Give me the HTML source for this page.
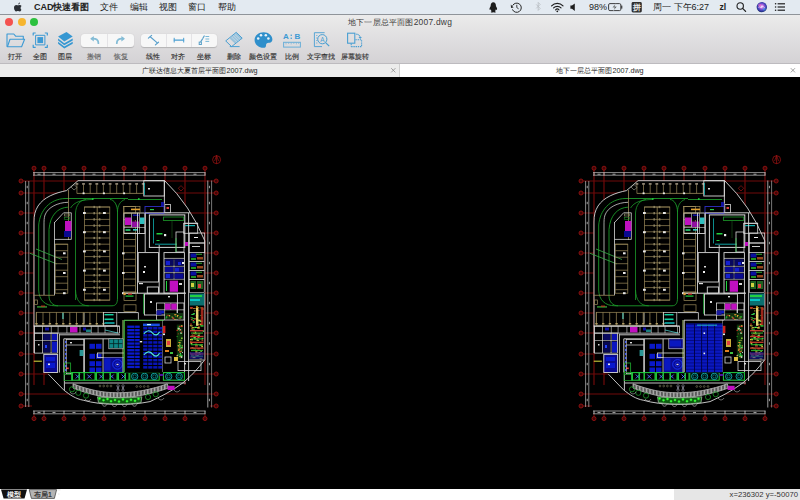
<!DOCTYPE html>
<html><head><meta charset="utf-8">
<style>
*{margin:0;padding:0;box-sizing:border-box}
html,body{width:800px;height:500px;overflow:hidden;background:#000;font-family:"Liberation Sans",sans-serif}
.a{position:absolute}
#menubar{left:0;top:0;width:800px;height:14px;background:#e3eaf1}
.mi{position:absolute;top:2px;font-size:9px;line-height:11px;color:#222;white-space:nowrap}
#titlebar{left:0;top:15px;width:800px;height:48px;background:linear-gradient(#ebebeb,#d4d2d5)}
.tl{position:absolute;top:17.5px;width:8px;height:8px;border-radius:50%}
.lbl{position:absolute;top:51.8px;font-size:7px;line-height:9px;color:#333;-webkit-text-stroke:0.15px #333;white-space:nowrap;transform:translateX(-50%)}
.seg{position:absolute;top:33.5px;height:13.5px;background:#f7f7f7;border-radius:3px;box-shadow:0 0.5px 1px rgba(0,0,0,.18)}
.tab{position:absolute;top:64px;height:12.5px;font-size:7.2px;line-height:13px;color:#2a2a2a;text-align:center}
</style></head><body>
<div id="menubar" class="a"></div>
<div class="a" style="left:0;top:14px;width:800px;height:1px;background:#8f949a"></div>
<svg class="a" style="left:12.8px;top:1.5px" width="10" height="11" viewBox="0 0 10 11"><path d="M6.9,0.6 C7,1.5 6.3,2.5 5.3,2.5 C5.2,1.6 5.9,0.7 6.9,0.6 Z" fill="#2a2e34"/><path d="M8.4,7.7 C8,8.7 7.4,9.5 6.6,9.5 C5.9,9.5 5.7,9.1 4.9,9.1 C4.1,9.1 3.9,9.5 3.2,9.5 C2.2,9.5 1,7.6 1,5.7 C1,3.9 2.1,2.9 3.2,2.9 C3.9,2.9 4.4,3.3 4.9,3.3 C5.4,3.3 5.9,2.9 6.7,2.9 C7.1,2.9 8,3 8.6,3.9 C7.3,4.7 7.3,6.9 8.4,7.7 Z" fill="#2a2e34"/></svg>
<div class="mi" style="left:34px;font-weight:bold">CAD快速看图</div>
<div class="mi" style="left:100px">文件</div>
<div class="mi" style="left:130px">编辑</div>
<div class="mi" style="left:159px">视图</div>
<div class="mi" style="left:188px">窗口</div>
<div class="mi" style="left:218px">帮助</div>
<svg class="a" style="left:480px;top:0" width="320" height="14" viewBox="480 0 320 14">
<!-- QQ penguin -->
<path d="M493.3,2.2 C491.6,2.2 490.7,3.6 490.7,5.4 C490.7,6.2 490.4,6.8 489.9,7.6 C489.3,8.6 489.4,9.7 489.9,9.9 C490.2,10 490.5,9.6 490.7,9.3 C490.9,10.2 491.3,10.8 491.7,11.2 C490.9,11.5 490.6,11.9 490.9,12.3 C491.3,12.7 492.6,12.5 493.3,12.2 C494,12.5 495.3,12.7 495.7,12.3 C496,11.9 495.7,11.5 494.9,11.2 C495.3,10.8 495.7,10.2 495.9,9.3 C496.1,9.6 496.4,10 496.7,9.9 C497.2,9.7 497.3,8.6 496.7,7.6 C496.2,6.8 495.9,6.2 495.9,5.4 C495.9,3.6 495,2.2 493.3,2.2 Z" fill="#1c1c1c"/>
<!-- time machine -->
<g fill="none" stroke="#2a2a2a" stroke-width="1.0">
<path d="M512.6,5.6 A4.6,4.6 0 1 1 512.4,9.4"/>
<path d="M516.8,4.8 L516.8,7.6 L518.6,8.8" stroke-width="0.9"/>
</g>
<path d="M510.8,4.6 L513.6,7.6 L511,8.0 Z" fill="#2a2a2a"/>
<!-- bluetooth (disabled) -->
<path d="M536.2,4.4 L540.2,8.4 L538.2,10.4 L538.2,2.4 L540.2,4.4 L536.2,8.4" fill="none" stroke="#b8bcc2" stroke-width="0.8"/>
<!-- wifi -->
<g fill="none" stroke="#1e1e1e" stroke-width="1.2" stroke-linecap="round">
<path d="M551.6,5.8 C554.8,2.6 559.8,2.6 563,5.8"/>
<path d="M553.6,7.8 C555.6,5.8 559,5.8 561,7.8"/>
<path d="M555.6,9.8 C556.6,8.8 558,8.8 559,9.8"/>
</g>
<circle cx="557.3" cy="11.3" r="0.9" fill="#1e1e1e"/>
<!-- volume -->
<path d="M570.4,5.6 L572,5.6 L574.8,3.4 L574.8,11 L572,8.8 L570.4,8.8 Z" fill="#1e1e1e"/>
<!-- battery -->
<rect x="608.6" y="3.6" width="12.2" height="7" rx="1.3" fill="none" stroke="#2a2a2a" stroke-width="0.9"/>
<rect x="621.2" y="5.6" width="1.1" height="3" fill="#2a2a2a"/>
<path d="M615.6,3.8 L612.4,7.6 L614.6,7.6 L613.6,10.6 L616.8,6.6 L614.6,6.6 Z" fill="#2a2a2a" stroke="#e3eaf1" stroke-width="0.5"/>
<!-- input method icon -->
<rect x="631.6" y="2" width="10.2" height="10.4" rx="1.4" fill="#2e2e2e"/>
<text x="636.7" y="10.2" text-anchor="middle" font-size="8.4" fill="#e8e8e8" font-weight="bold">拼</text>
<!-- search -->
<circle cx="740.2" cy="6" r="3.2" fill="none" stroke="#1e1e1e" stroke-width="1.1"/>
<path d="M742.6,8.4 L745.6,11.4" stroke="#1e1e1e" stroke-width="1.3" stroke-linecap="round"/>
<!-- siri -->
<defs><radialGradient id="siri" cx="50%" cy="45%" r="55%"><stop offset="0" stop-color="#f4eaff"/><stop offset="0.3" stop-color="#c070e0"/><stop offset="0.6" stop-color="#5a48c8"/><stop offset="0.85" stop-color="#283a9a"/><stop offset="1" stop-color="#202050"/></radialGradient></defs>
<circle cx="761.8" cy="7.1" r="5.2" fill="url(#siri)"/>
<path d="M758.4,7.6 C759.6,5.4 760.8,9.2 762,6.8 C763,4.8 764,8.6 765.2,7.2" fill="none" stroke="#ffffff" stroke-width="0.7" opacity="0.85"/><circle cx="759.6" cy="5.2" r="1.6" fill="#ff70c0" opacity="0.45"/><circle cx="764.2" cy="9" r="1.6" fill="#40d0ff" opacity="0.4"/>
<!-- notification list -->
<g fill="#1e1e1e">
<circle cx="775.6" cy="3.8" r="0.8"/><circle cx="775.6" cy="7" r="0.8"/><circle cx="775.6" cy="10.2" r="0.8"/>
<rect x="777.6" y="3.2" width="7.4" height="1.2"/><rect x="777.6" y="6.4" width="7.4" height="1.2"/><rect x="777.6" y="9.6" width="7.4" height="1.2"/>
</g>
</svg>
<div class="mi" style="left:589px">98%</div>
<div class="mi" style="left:653px">周一 下午6:27</div>
<div class="mi" style="left:719.5px;font-weight:bold;font-size:8.6px">zl</div>

<div id="titlebar" class="a"></div>
<div class="tl" style="left:5px;background:#f4524f"></div>
<div class="tl" style="left:17.5px;background:#f6b52f"></div>
<div class="tl" style="left:30px;background:#2cc13f"></div>
<div class="a" style="left:0;width:800px;top:17px;text-align:center;font-size:8.45px;letter-spacing:0.22px;line-height:11px;color:#3a3a3a;padding-left:0px">地下一层总平面图2007.dwg</div>
<div class="seg" style="left:81px;width:53px"></div>
<div class="seg" style="left:141px;width:76px"></div>
<div class="a" style="left:107px;top:34px;width:0.6px;height:13px;background:#e4e3e6"></div>
<div class="a" style="left:166.2px;top:34px;width:0.6px;height:13px;background:#e4e3e6"></div>
<div class="a" style="left:191px;top:34px;width:0.6px;height:13px;background:#e4e3e6"></div>
<svg class="a" style="left:0;top:28px" width="380" height="24" viewBox="0 28 380 24">
<g fill="none" stroke="#3d9ad4" stroke-width="1.1" stroke-linejoin="round">
<!-- folder -->
<path d="M7,46.8 L7,34 L13.8,34 L15.6,36.2 L23.3,36.2 L23.3,39.2"/>
<path d="M7.4,46.8 L10,39.3 L24.6,39.3 L21.6,46.8 Z"/>
<!-- full view brackets -->
<path d="M33.2,35.5 L33.2,33 L35.7,33 M44.8,33 L47.3,33 L47.3,35.5 M47.3,44.8 L47.3,47.3 L44.8,47.3 M35.7,47.3 L33.2,47.3 L33.2,44.8" stroke-width="1.2"/>
<rect x="35.6" y="35.3" width="9.3" height="9.6" stroke-width="1.0"/>
</g>
<rect x="37.4" y="37.1" width="5.7" height="6" fill="#3d9ad4"/>
<!-- layers -->
<path d="M58.1,36.6 L66.5,32.1 L72.7,36.4 L64.3,41.6 Z" fill="#3597d2"/>
<path d="M58.1,38.6 L64.3,43.2 L72.7,38.6 L72.7,40.6 L64.3,45.2 L58.1,40.6 Z" fill="#3597d2"/>
<path d="M58.1,41.8 L64.3,46.6 L72.7,41.8 L72.7,43.8 L64.3,48.4 L58.1,43.8 Z" fill="#3597d2"/>
<!-- undo / redo -->
<g fill="none" stroke="#84bcd6" stroke-width="1.8" stroke-linecap="round">
<path d="M92,38.6 C96,38.2 98.6,39.6 98.4,43.2"/>
<path d="M116.8,43.2 C116.6,39.6 119.2,38.2 123.2,38.6"/>
</g>
<path d="M90.2,38.8 L93.8,36 L93.8,41.6 Z" fill="#84bcd6"/>
<path d="M125,38.8 L121.4,36 L121.4,41.6 Z" fill="#84bcd6"/>
<!-- linear -->
<g fill="none" stroke="#4a9fd2" stroke-width="1.0" stroke-linecap="round">
<path d="M150.2,36.8 L157,42.6" stroke="#5aa0cc" stroke-width="1.2"/>
<path d="M148.4,38.1 L151.6,35.4" stroke="#5aa0cc" stroke-width="1.2"/>
<path d="M155.4,44.9 L158.5,42.2" stroke="#5aa0cc" stroke-width="1.2"/>
<!-- aligned -->
<path d="M174.2,40.1 L183.7,40.1" stroke-width="1.2"/>
<path d="M174.2,38.2 L174.2,42.1 M183.7,38.2 L183.7,42.1" stroke-width="1.0"/>
<!-- coordinate -->
<rect x="199.2" y="42.1" width="2.2" height="2.4" stroke="#5aa0c8" stroke-width="1.0"/>
<path d="M200.8,41.6 L202.4,39.2 M202.9,38.3 L204.2,36" stroke="#5aa0c8" stroke-width="1.2"/>
<path d="M205.8,36.5 L208.8,36.5 M205.8,39 L208.8,39 M205.8,41.4 L208.8,41.4" stroke="#6ab0d4" stroke-width="0.9"/>
<!-- eraser -->
<path d="M236.5,32.6 L242.2,38.2 L231.6,46.6 L226,41.2 Z" stroke="#4a9fd2"/>
<path d="M230.2,46.6 L239.2,46.6" stroke="#4a9fd2"/>
</g>
<path d="M236.5,32.6 L242.2,38.2 L235.2,43.8 L229.6,38.4 Z" fill="#4a9fd2" opacity="0.45"/>
<path d="M231.6,37 L237.2,42.4 M233.2,35.6 L238.8,41 M234.8,34.3 L240.4,39.7" stroke="#e6f2fa" stroke-width="0.45"/>
<!-- palette -->
<path d="M263.6,32.3 C268.7,32.3 272.4,35.6 272.4,39.4 C272.4,41.8 270.6,42.8 268.8,42.8 C266.8,42.8 266,44 266,45.4 C266,46.8 265.2,47.8 263.6,47.8 C258.6,47.8 254.6,44.4 254.6,40 C254.6,35.6 258.6,32.3 263.6,32.3 Z" fill="#2f8fcb"/>
<circle cx="258.2" cy="38.6" r="1.25" fill="#e8f2f8"/>
<circle cx="261" cy="35.2" r="1.25" fill="#e8f2f8"/>
<circle cx="265.8" cy="35.2" r="1.25" fill="#e8f2f8"/>
<circle cx="268.4" cy="38.6" r="1.25" fill="#e8f2f8"/>
<!-- A:B -->
<text x="283" y="39.4" font-family="Liberation Sans" font-weight="bold" font-size="8" fill="#3d9ad4">A</text><rect x="290.6" y="34.6" width="1.3" height="1.3" fill="#3d9ad4"/><rect x="290.6" y="37.6" width="1.3" height="1.3" fill="#3d9ad4"/><text x="294.6" y="39.4" font-family="Liberation Sans" font-weight="bold" font-size="8" fill="#3d9ad4">B</text>
<rect x="283.6" y="42.3" width="16.8" height="4.8" fill="none" stroke="#6aaed8" stroke-width="1"/>
<path d="M286,42.6 L286,44.4 M288.6,42.6 L288.6,44 M291.2,42.6 L291.2,44.4 M293.8,42.6 L293.8,44 M296.4,42.6 L296.4,44.4 M298.6,42.6 L298.6,44" stroke="#6aaed8" stroke-width="0.6"/>
<!-- text find -->
<g fill="none" stroke="#4a9fd2" stroke-width="0.9">
<path d="M324.6,32.7 L314.4,32.7 L314.4,46.6 L322,46.6"/>
<path d="M316.2,35.5 L317.4,35.5 M316.2,38 L317.4,38 M316.2,40.5 L317.4,40.5 M316.2,43 L317.4,43" stroke-width="0.7"/>
<circle cx="322.3" cy="39.2" r="4.6" stroke-width="1"/>
<path d="M325.6,42.6 L329.2,46.2" stroke-width="1.2"/>
<!-- rotate -->
<rect x="347.6" y="33.2" width="7.2" height="10" stroke-width="1.1"/>
<path d="M351.2,46.6 L361.6,46.6 L361.6,39.8 L355.4,39.8" stroke-dasharray="1.4,0.8" stroke-width="1.1"/>
<path d="M351.2,43.6 L351.2,46.6" stroke-width="1.1" stroke-dasharray="1.4,0.8"/>
<path d="M355.8,34.1 C358.4,34.1 360.1,35.4 360.2,37.4" stroke-width="0.9"/>
</g>
<text x="322.3" y="41.6" text-anchor="middle" font-family="Liberation Sans" font-size="6.4" fill="#4a9fd2">A</text>
<path d="M358.5,36.9 L361.9,36.9 L360.2,39.1 Z" fill="#4a9fd2"/>
</svg>
<div class="lbl" style="left:15px">打开</div>
<div class="lbl" style="left:40px">全图</div>
<div class="lbl" style="left:65px">图层</div>
<div class="lbl" style="left:94px;color:#999">撤销</div>
<div class="lbl" style="left:121px;color:#999">恢复</div>
<div class="lbl" style="left:153px">线性</div>
<div class="lbl" style="left:178px">对齐</div>
<div class="lbl" style="left:204px">坐标</div>
<div class="lbl" style="left:234px">删除</div>
<div class="lbl" style="left:263px">颜色设置</div>
<div class="lbl" style="left:292px">比例</div>
<div class="lbl" style="left:321px">文字查找</div>
<div class="lbl" style="left:355px">屏幕旋转</div>

<div class="a" style="left:0;top:63px;width:800px;height:1px;background:#bdbbbf"></div>
<div class="tab" style="left:0;width:400px;background:#ececec">广联达信息大夏首层平面图2007.dwg</div>
<div class="tab" style="left:399px;width:1px;background:#cfcfcf"></div>
<div class="tab" style="left:400px;width:400px;background:#fff">地下一层总平面图2007.dwg</div>
<svg class="a" style="left:0;top:77px" width="800" height="411" viewBox="0 77 800 411"><g><mask id="bm" maskUnits="userSpaceOnUse" x="0" y="77" width="240" height="411"><rect x="0" y="77" width="240" height="411" fill="#fff"/><path d="M78,180.7 L164.9,180.9 Q190,205 204.8,240.8 L204.8,359.6 C197,370 190,377 182.2,383.4 C172,391 160,397 150,401.6 C140,403.5 132,404.3 124.2,404.3 L114,404.3 C104,404.2 93,403 83.2,400.2 C76,399 70,395 63.5,389.8 L48.4,374.2 L34,353 L34,222 C34,215 35,211 38,206 C44,197 55,193 66.5,190.6 Z" fill="#000"/></mask>
<g mask="url(#bm)">
<line x1="34.0" y1="170.0" x2="34.0" y2="385.0" stroke="#700a0a" stroke-width="1.2"/>
<line x1="44.0" y1="170.0" x2="44.0" y2="385.0" stroke="#700a0a" stroke-width="1.2"/>
<line x1="64.0" y1="170.0" x2="64.0" y2="385.0" stroke="#700a0a" stroke-width="1.2"/>
<line x1="84.0" y1="170.0" x2="84.0" y2="385.0" stroke="#700a0a" stroke-width="1.2"/>
<line x1="104.0" y1="170.0" x2="104.0" y2="385.0" stroke="#700a0a" stroke-width="1.2"/>
<line x1="124.0" y1="170.0" x2="124.0" y2="385.0" stroke="#700a0a" stroke-width="1.2"/>
<line x1="145.0" y1="170.0" x2="145.0" y2="385.0" stroke="#700a0a" stroke-width="1.2"/>
<line x1="165.0" y1="170.0" x2="165.0" y2="385.0" stroke="#700a0a" stroke-width="1.2"/>
<line x1="185.0" y1="170.0" x2="185.0" y2="385.0" stroke="#700a0a" stroke-width="1.2"/>
<line x1="205.0" y1="170.0" x2="205.0" y2="385.0" stroke="#700a0a" stroke-width="1.2"/>
<line x1="34.0" y1="414.0" x2="34.0" y2="417.0" stroke="#700a0a" stroke-width="1.0"/>
<line x1="44.0" y1="414.0" x2="44.0" y2="417.0" stroke="#700a0a" stroke-width="1.0"/>
<line x1="64.0" y1="414.0" x2="64.0" y2="417.0" stroke="#700a0a" stroke-width="1.0"/>
<line x1="84.0" y1="414.0" x2="84.0" y2="417.0" stroke="#700a0a" stroke-width="1.0"/>
<line x1="104.0" y1="414.0" x2="104.0" y2="417.0" stroke="#700a0a" stroke-width="1.0"/>
<line x1="124.0" y1="414.0" x2="124.0" y2="417.0" stroke="#700a0a" stroke-width="1.0"/>
<line x1="145.0" y1="414.0" x2="145.0" y2="417.0" stroke="#700a0a" stroke-width="1.0"/>
<line x1="165.0" y1="414.0" x2="165.0" y2="417.0" stroke="#700a0a" stroke-width="1.0"/>
<line x1="185.0" y1="414.0" x2="185.0" y2="417.0" stroke="#700a0a" stroke-width="1.0"/>
<line x1="205.0" y1="414.0" x2="205.0" y2="417.0" stroke="#700a0a" stroke-width="1.0"/>
<line x1="23.0" y1="181.0" x2="214.0" y2="181.0" stroke="#700a0a" stroke-width="1.2"/>
<line x1="23.0" y1="193.0" x2="214.0" y2="193.0" stroke="#700a0a" stroke-width="1.2"/>
<line x1="23.0" y1="213.0" x2="214.0" y2="213.0" stroke="#700a0a" stroke-width="1.2"/>
<line x1="23.0" y1="233.0" x2="214.0" y2="233.0" stroke="#700a0a" stroke-width="1.2"/>
<line x1="23.0" y1="253.0" x2="214.0" y2="253.0" stroke="#700a0a" stroke-width="1.2"/>
<line x1="23.0" y1="273.0" x2="214.0" y2="273.0" stroke="#700a0a" stroke-width="1.2"/>
<line x1="23.0" y1="293.0" x2="214.0" y2="293.0" stroke="#700a0a" stroke-width="1.2"/>
<line x1="23.0" y1="313.0" x2="214.0" y2="313.0" stroke="#700a0a" stroke-width="1.2"/>
<line x1="23.0" y1="333.0" x2="214.0" y2="333.0" stroke="#700a0a" stroke-width="1.2"/>
<line x1="23.0" y1="354.0" x2="214.0" y2="354.0" stroke="#700a0a" stroke-width="1.2"/>
<line x1="23.0" y1="374.0" x2="214.0" y2="374.0" stroke="#700a0a" stroke-width="1.2"/>
<line x1="23.0" y1="394.0" x2="214.0" y2="394.0" stroke="#700a0a" stroke-width="1.2"/>
<line x1="23.0" y1="406.0" x2="32.0" y2="406.0" stroke="#700a0a" stroke-width="1.0"/>
<line x1="210.0" y1="406.0" x2="214.0" y2="406.0" stroke="#700a0a" stroke-width="1.0"/>
</g>
<circle cx="34.0" cy="168.2" r="2.0" stroke="#951212" stroke-width="0.9" fill="#420606"/>
<circle cx="34.0" cy="418.6" r="2.0" stroke="#951212" stroke-width="0.9" fill="#420606"/>
<circle cx="44.0" cy="168.2" r="2.0" stroke="#951212" stroke-width="0.9" fill="#420606"/>
<circle cx="44.0" cy="418.6" r="2.0" stroke="#951212" stroke-width="0.9" fill="#420606"/>
<circle cx="64.0" cy="168.2" r="2.0" stroke="#951212" stroke-width="0.9" fill="#420606"/>
<circle cx="64.0" cy="418.6" r="2.0" stroke="#951212" stroke-width="0.9" fill="#420606"/>
<circle cx="84.0" cy="168.2" r="2.0" stroke="#951212" stroke-width="0.9" fill="#420606"/>
<circle cx="84.0" cy="418.6" r="2.0" stroke="#951212" stroke-width="0.9" fill="#420606"/>
<circle cx="104.0" cy="168.2" r="2.0" stroke="#951212" stroke-width="0.9" fill="#420606"/>
<circle cx="104.0" cy="418.6" r="2.0" stroke="#951212" stroke-width="0.9" fill="#420606"/>
<circle cx="124.0" cy="168.2" r="2.0" stroke="#951212" stroke-width="0.9" fill="#420606"/>
<circle cx="124.0" cy="418.6" r="2.0" stroke="#951212" stroke-width="0.9" fill="#420606"/>
<circle cx="145.0" cy="168.2" r="2.0" stroke="#951212" stroke-width="0.9" fill="#420606"/>
<circle cx="145.0" cy="418.6" r="2.0" stroke="#951212" stroke-width="0.9" fill="#420606"/>
<circle cx="165.0" cy="168.2" r="2.0" stroke="#951212" stroke-width="0.9" fill="#420606"/>
<circle cx="165.0" cy="418.6" r="2.0" stroke="#951212" stroke-width="0.9" fill="#420606"/>
<circle cx="185.0" cy="168.2" r="2.0" stroke="#951212" stroke-width="0.9" fill="#420606"/>
<circle cx="185.0" cy="418.6" r="2.0" stroke="#951212" stroke-width="0.9" fill="#420606"/>
<circle cx="205.0" cy="168.2" r="2.0" stroke="#951212" stroke-width="0.9" fill="#420606"/>
<circle cx="205.0" cy="418.6" r="2.0" stroke="#951212" stroke-width="0.9" fill="#420606"/>
<circle cx="21.0" cy="181.0" r="2.0" stroke="#951212" stroke-width="0.9" fill="#420606"/>
<circle cx="216.2" cy="181.0" r="2.0" stroke="#951212" stroke-width="0.9" fill="#420606"/>
<circle cx="21.0" cy="193.0" r="2.0" stroke="#951212" stroke-width="0.9" fill="#420606"/>
<circle cx="216.2" cy="193.0" r="2.0" stroke="#951212" stroke-width="0.9" fill="#420606"/>
<circle cx="21.0" cy="213.0" r="2.0" stroke="#951212" stroke-width="0.9" fill="#420606"/>
<circle cx="216.2" cy="213.0" r="2.0" stroke="#951212" stroke-width="0.9" fill="#420606"/>
<circle cx="21.0" cy="233.0" r="2.0" stroke="#951212" stroke-width="0.9" fill="#420606"/>
<circle cx="216.2" cy="233.0" r="2.0" stroke="#951212" stroke-width="0.9" fill="#420606"/>
<circle cx="21.0" cy="253.0" r="2.0" stroke="#951212" stroke-width="0.9" fill="#420606"/>
<circle cx="216.2" cy="253.0" r="2.0" stroke="#951212" stroke-width="0.9" fill="#420606"/>
<circle cx="21.0" cy="273.0" r="2.0" stroke="#951212" stroke-width="0.9" fill="#420606"/>
<circle cx="216.2" cy="273.0" r="2.0" stroke="#951212" stroke-width="0.9" fill="#420606"/>
<circle cx="21.0" cy="293.0" r="2.0" stroke="#951212" stroke-width="0.9" fill="#420606"/>
<circle cx="216.2" cy="293.0" r="2.0" stroke="#951212" stroke-width="0.9" fill="#420606"/>
<circle cx="21.0" cy="313.0" r="2.0" stroke="#951212" stroke-width="0.9" fill="#420606"/>
<circle cx="216.2" cy="313.0" r="2.0" stroke="#951212" stroke-width="0.9" fill="#420606"/>
<circle cx="21.0" cy="333.0" r="2.0" stroke="#951212" stroke-width="0.9" fill="#420606"/>
<circle cx="216.2" cy="333.0" r="2.0" stroke="#951212" stroke-width="0.9" fill="#420606"/>
<circle cx="21.0" cy="354.0" r="2.0" stroke="#951212" stroke-width="0.9" fill="#420606"/>
<circle cx="216.2" cy="354.0" r="2.0" stroke="#951212" stroke-width="0.9" fill="#420606"/>
<circle cx="21.0" cy="374.0" r="2.0" stroke="#951212" stroke-width="0.9" fill="#420606"/>
<circle cx="216.2" cy="374.0" r="2.0" stroke="#951212" stroke-width="0.9" fill="#420606"/>
<circle cx="21.0" cy="394.0" r="2.0" stroke="#951212" stroke-width="0.9" fill="#420606"/>
<circle cx="216.2" cy="394.0" r="2.0" stroke="#951212" stroke-width="0.9" fill="#420606"/>
<circle cx="21.0" cy="406.0" r="2.0" stroke="#951212" stroke-width="0.9" fill="#420606"/>
<circle cx="216.2" cy="406.0" r="2.0" stroke="#951212" stroke-width="0.9" fill="#420606"/>
<circle cx="216.6" cy="159.7" r="4.0" stroke="#951212" stroke-width="0.8" fill="none"/>
<path d="M181,185.6 L183.7,188.3 L181,191 L178.3,188.3 Z" stroke="#951212" stroke-width="0.7" fill="none"/>
<line x1="216.6" y1="155.0" x2="216.6" y2="164.0" stroke="#951212" stroke-width="0.8"/>
<path d="M214.6,161 L216.6,155.5 L218.6,161" stroke="#951212" stroke-width="0.7" fill="none"/>
<line x1="33.0" y1="172.6" x2="205.5" y2="172.6" stroke="#c8c8c8" stroke-width="0.7"/>
<line x1="33.0" y1="175.2" x2="205.5" y2="175.2" stroke="#c8c8c8" stroke-width="0.7"/>
<line x1="33.0" y1="411.0" x2="205.5" y2="411.0" stroke="#c8c8c8" stroke-width="0.7"/>
<line x1="33.0" y1="413.8" x2="205.5" y2="413.8" stroke="#c8c8c8" stroke-width="0.7"/>
<line x1="25.6" y1="181.0" x2="25.6" y2="407.0" stroke="#c0c0c0" stroke-width="0.7"/>
<line x1="28.8" y1="181.0" x2="28.8" y2="407.0" stroke="#c0c0c0" stroke-width="0.7"/>
<line x1="207.8" y1="180.5" x2="207.8" y2="407.5" stroke="#c8c8c8" stroke-width="0.8"/>
<line x1="211.6" y1="180.5" x2="211.6" y2="407.5" stroke="#a8a8a8" stroke-width="0.7"/>
<rect x="37.5" y="173.7" width="3.0" height="1.0" fill="#a8a8a8"/>
<rect x="37.5" y="411.9" width="3.0" height="1.0" fill="#a8a8a8"/>
<rect x="52.5" y="173.7" width="3.0" height="1.0" fill="#a8a8a8"/>
<rect x="52.5" y="411.9" width="3.0" height="1.0" fill="#a8a8a8"/>
<rect x="72.5" y="173.7" width="3.0" height="1.0" fill="#a8a8a8"/>
<rect x="72.5" y="411.9" width="3.0" height="1.0" fill="#a8a8a8"/>
<rect x="92.5" y="173.7" width="3.0" height="1.0" fill="#a8a8a8"/>
<rect x="92.5" y="411.9" width="3.0" height="1.0" fill="#a8a8a8"/>
<rect x="112.5" y="173.7" width="3.0" height="1.0" fill="#a8a8a8"/>
<rect x="112.5" y="411.9" width="3.0" height="1.0" fill="#a8a8a8"/>
<rect x="133.0" y="173.7" width="3.0" height="1.0" fill="#a8a8a8"/>
<rect x="133.0" y="411.9" width="3.0" height="1.0" fill="#a8a8a8"/>
<rect x="153.5" y="173.7" width="3.0" height="1.0" fill="#a8a8a8"/>
<rect x="153.5" y="411.9" width="3.0" height="1.0" fill="#a8a8a8"/>
<rect x="173.5" y="173.7" width="3.0" height="1.0" fill="#a8a8a8"/>
<rect x="173.5" y="411.9" width="3.0" height="1.0" fill="#a8a8a8"/>
<rect x="193.5" y="173.7" width="3.0" height="1.0" fill="#a8a8a8"/>
<rect x="193.5" y="411.9" width="3.0" height="1.0" fill="#a8a8a8"/>
<rect x="33.5" y="172.4" width="1.0" height="3.0" fill="#b8b8b8"/>
<rect x="33.5" y="410.8" width="1.0" height="3.0" fill="#b8b8b8"/>
<rect x="43.5" y="172.4" width="1.0" height="3.0" fill="#b8b8b8"/>
<rect x="43.5" y="410.8" width="1.0" height="3.0" fill="#b8b8b8"/>
<rect x="63.5" y="172.4" width="1.0" height="3.0" fill="#b8b8b8"/>
<rect x="63.5" y="410.8" width="1.0" height="3.0" fill="#b8b8b8"/>
<rect x="83.5" y="172.4" width="1.0" height="3.0" fill="#b8b8b8"/>
<rect x="83.5" y="410.8" width="1.0" height="3.0" fill="#b8b8b8"/>
<rect x="103.5" y="172.4" width="1.0" height="3.0" fill="#b8b8b8"/>
<rect x="103.5" y="410.8" width="1.0" height="3.0" fill="#b8b8b8"/>
<rect x="123.5" y="172.4" width="1.0" height="3.0" fill="#b8b8b8"/>
<rect x="123.5" y="410.8" width="1.0" height="3.0" fill="#b8b8b8"/>
<rect x="144.5" y="172.4" width="1.0" height="3.0" fill="#b8b8b8"/>
<rect x="144.5" y="410.8" width="1.0" height="3.0" fill="#b8b8b8"/>
<rect x="164.5" y="172.4" width="1.0" height="3.0" fill="#b8b8b8"/>
<rect x="164.5" y="410.8" width="1.0" height="3.0" fill="#b8b8b8"/>
<rect x="184.5" y="172.4" width="1.0" height="3.0" fill="#b8b8b8"/>
<rect x="184.5" y="410.8" width="1.0" height="3.0" fill="#b8b8b8"/>
<rect x="204.5" y="172.4" width="1.0" height="3.0" fill="#b8b8b8"/>
<rect x="204.5" y="410.8" width="1.0" height="3.0" fill="#b8b8b8"/>
<rect x="26.7" y="185.8" width="1.0" height="2.4" fill="#a0a0a0"/>
<rect x="208.9" y="185.8" width="1.0" height="2.4" fill="#a0a0a0"/>
<rect x="26.7" y="201.8" width="1.0" height="2.4" fill="#a0a0a0"/>
<rect x="208.9" y="201.8" width="1.0" height="2.4" fill="#a0a0a0"/>
<rect x="26.7" y="221.8" width="1.0" height="2.4" fill="#a0a0a0"/>
<rect x="208.9" y="221.8" width="1.0" height="2.4" fill="#a0a0a0"/>
<rect x="26.7" y="241.8" width="1.0" height="2.4" fill="#a0a0a0"/>
<rect x="208.9" y="241.8" width="1.0" height="2.4" fill="#a0a0a0"/>
<rect x="26.7" y="261.8" width="1.0" height="2.4" fill="#a0a0a0"/>
<rect x="208.9" y="261.8" width="1.0" height="2.4" fill="#a0a0a0"/>
<rect x="26.7" y="281.8" width="1.0" height="2.4" fill="#a0a0a0"/>
<rect x="208.9" y="281.8" width="1.0" height="2.4" fill="#a0a0a0"/>
<rect x="26.7" y="301.8" width="1.0" height="2.4" fill="#a0a0a0"/>
<rect x="208.9" y="301.8" width="1.0" height="2.4" fill="#a0a0a0"/>
<rect x="26.7" y="321.8" width="1.0" height="2.4" fill="#a0a0a0"/>
<rect x="208.9" y="321.8" width="1.0" height="2.4" fill="#a0a0a0"/>
<rect x="26.7" y="342.3" width="1.0" height="2.4" fill="#a0a0a0"/>
<rect x="208.9" y="342.3" width="1.0" height="2.4" fill="#a0a0a0"/>
<rect x="26.7" y="362.8" width="1.0" height="2.4" fill="#a0a0a0"/>
<rect x="208.9" y="362.8" width="1.0" height="2.4" fill="#a0a0a0"/>
<rect x="26.7" y="382.8" width="1.0" height="2.4" fill="#a0a0a0"/>
<rect x="208.9" y="382.8" width="1.0" height="2.4" fill="#a0a0a0"/>
<rect x="26.7" y="398.8" width="1.0" height="2.4" fill="#a0a0a0"/>
<rect x="208.9" y="398.8" width="1.0" height="2.4" fill="#a0a0a0"/>
<path d="M78,180.7 L164.9,180.9 Q190,205 204.8,240.8 L204.8,359.6 C197,370 190,377 182.2,383.4 C172,391 160,397 150,401.6 C140,403.5 132,404.3 124.2,404.3 L114,404.3 C104,404.2 93,403 83.2,400.2 C76,399 70,395 63.5,389.8 L48.4,374.2" stroke="#d8d8d8" stroke-width="0.9" fill="none"/>
<path d="M78,180.7 L66.5,190.6 C55,193 44,197 38,206 C35,211 34,215 34,222 L34,353" stroke="#d8d8d8" stroke-width="0.9" fill="none"/>
<path d="M68,202.3 C58,202.5 48,207 45,215 C44,218 44,221 44,225 L44,295" stroke="#d8d8d8" stroke-width="0.9" fill="none" opacity="0.85"/>
<path d="M128,198.5 L65,198.5 C50,199 40,210 38.7,225 L38.7,290 C39,300 45,305.8 55,305.8 L112,305.8 C116,305.8 117.5,303 117.5,298 L117.5,212 C117.5,205 114,199.5 110,199.5" stroke="#1c9a2a" stroke-width="0.9" fill="none"/>
<path d="M68,207.2 C58,207.5 50,215 49,229.6 L49,296 C49,302 53,305.8 58,305.8" stroke="#1c9a2a" stroke-width="0.9" fill="none"/>
<rect x="34.5" y="300.0" width="3.0" height="4.5" fill="none" stroke="#9c8a5a" stroke-width="0.7"/>
<rect x="37.0" y="306.2" width="10.0" height="1.4" fill="#40c040" opacity="0.8"/>
<rect x="41.0" y="305.6" width="4.0" height="1.0" fill="#d03020"/>
<line x1="63.0" y1="312.5" x2="63.0" y2="319.0" stroke="#30d0d0" stroke-width="1.4"/>
<line x1="84.0" y1="312.5" x2="84.0" y2="323.0" stroke="#d8d8c8" stroke-width="0.9"/>
<path d="M70.6,208 C74,202 82,199.5 93,199.5" stroke="#1c9a2a" stroke-width="0.8" fill="none"/>
<path d="M75.5,300 L75.5,213 C76,205 80,200 86,199.5" stroke="#1c9a2a" stroke-width="0.8" fill="none"/>
<path d="M75.5,290 C76,300 80,305.8 88.8,305.8" stroke="#1c9a2a" stroke-width="0.8" fill="none"/>
<path d="M125,199.5 C120,201 117.5,206 117.5,212" stroke="#1c9a2a" stroke-width="0.8" fill="none"/>
<line x1="128.0" y1="199.5" x2="162.0" y2="199.5" stroke="#1c9a2a" stroke-width="0.9"/>
<line x1="30.0" y1="253.3" x2="56.6" y2="263.8" stroke="#3ab04a" stroke-width="0.8"/>
<line x1="36.0" y1="249.0" x2="62.0" y2="259.5" stroke="#3ab04a" stroke-width="0.8"/>
<line x1="76.9" y1="193.4" x2="143.2" y2="193.4" stroke="#9c8a5a" stroke-width="0.8"/>
<line x1="76.9" y1="183.4" x2="76.9" y2="193.4" stroke="#9c8a5a" stroke-width="0.7"/>
<rect x="75.5" y="183.0" width="2.8" height="1.8" fill="#8a8070"/>
<line x1="83.5" y1="183.4" x2="83.5" y2="193.4" stroke="#9c8a5a" stroke-width="0.7"/>
<rect x="82.1" y="183.0" width="2.8" height="1.8" fill="#8a8070"/>
<line x1="90.2" y1="183.4" x2="90.2" y2="193.4" stroke="#9c8a5a" stroke-width="0.7"/>
<rect x="88.8" y="183.0" width="2.8" height="1.8" fill="#8a8070"/>
<line x1="96.8" y1="183.4" x2="96.8" y2="193.4" stroke="#9c8a5a" stroke-width="0.7"/>
<rect x="95.4" y="183.0" width="2.8" height="1.8" fill="#8a8070"/>
<line x1="103.4" y1="183.4" x2="103.4" y2="193.4" stroke="#9c8a5a" stroke-width="0.7"/>
<rect x="102.0" y="183.0" width="2.8" height="1.8" fill="#8a8070"/>
<line x1="110.1" y1="183.4" x2="110.1" y2="193.4" stroke="#9c8a5a" stroke-width="0.7"/>
<rect x="108.7" y="183.0" width="2.8" height="1.8" fill="#8a8070"/>
<line x1="116.7" y1="183.4" x2="116.7" y2="193.4" stroke="#9c8a5a" stroke-width="0.7"/>
<rect x="115.3" y="183.0" width="2.8" height="1.8" fill="#8a8070"/>
<line x1="123.3" y1="183.4" x2="123.3" y2="193.4" stroke="#9c8a5a" stroke-width="0.7"/>
<rect x="121.9" y="183.0" width="2.8" height="1.8" fill="#8a8070"/>
<line x1="129.9" y1="183.4" x2="129.9" y2="193.4" stroke="#9c8a5a" stroke-width="0.7"/>
<rect x="128.5" y="183.0" width="2.8" height="1.8" fill="#8a8070"/>
<line x1="136.6" y1="183.4" x2="136.6" y2="193.4" stroke="#9c8a5a" stroke-width="0.7"/>
<rect x="135.2" y="183.0" width="2.8" height="1.8" fill="#8a8070"/>
<line x1="143.2" y1="183.4" x2="143.2" y2="193.4" stroke="#9c8a5a" stroke-width="0.7"/>
<rect x="141.8" y="183.0" width="2.8" height="1.8" fill="#8a8070"/>
<rect x="82.6" y="192.4" width="2.0" height="1.8" fill="#e8e8e8"/>
<rect x="102.9" y="192.4" width="2.0" height="1.8" fill="#e8e8e8"/>
<rect x="123.1" y="192.4" width="2.0" height="1.8" fill="#e8e8e8"/>
<path d="M71,187 L74,184.5 L77,187.5 L74,190 Z" stroke="#a0a090" stroke-width="0.6" fill="none"/>
<rect x="92.0" y="198.2" width="1.6" height="1.6" fill="#22d040"/>
<rect x="138.0" y="198.2" width="1.6" height="1.6" fill="#22d040"/>
<line x1="68.5" y1="190.0" x2="68.5" y2="240.0" stroke="#9c8a5a" stroke-width="0.8"/>
<rect x="84.4" y="207.0" width="25.4" height="93.2" fill="none" stroke="#9c8a5a" stroke-width="0.7"/>
<line x1="84.4" y1="207.0" x2="109.8" y2="207.0" stroke="#9c8a5a" stroke-width="0.7"/>
<rect x="93.4" y="205.9" width="1.6" height="2.2" fill="#8a8060"/>
<rect x="98.8" y="205.9" width="1.6" height="2.2" fill="#8a8060"/>
<line x1="84.4" y1="213.2" x2="109.8" y2="213.2" stroke="#9c8a5a" stroke-width="0.7"/>
<rect x="93.4" y="212.1" width="1.6" height="2.2" fill="#8a8060"/>
<rect x="98.8" y="212.1" width="1.6" height="2.2" fill="#8a8060"/>
<line x1="84.4" y1="219.4" x2="109.8" y2="219.4" stroke="#9c8a5a" stroke-width="0.7"/>
<rect x="93.4" y="218.3" width="1.6" height="2.2" fill="#8a8060"/>
<rect x="98.8" y="218.3" width="1.6" height="2.2" fill="#8a8060"/>
<line x1="84.4" y1="225.6" x2="109.8" y2="225.6" stroke="#9c8a5a" stroke-width="0.7"/>
<rect x="93.4" y="224.5" width="1.6" height="2.2" fill="#8a8060"/>
<rect x="98.8" y="224.5" width="1.6" height="2.2" fill="#8a8060"/>
<line x1="84.4" y1="231.8" x2="109.8" y2="231.8" stroke="#9c8a5a" stroke-width="0.7"/>
<rect x="93.4" y="230.7" width="1.6" height="2.2" fill="#8a8060"/>
<rect x="98.8" y="230.7" width="1.6" height="2.2" fill="#8a8060"/>
<line x1="84.4" y1="238.0" x2="109.8" y2="238.0" stroke="#9c8a5a" stroke-width="0.7"/>
<rect x="93.4" y="236.9" width="1.6" height="2.2" fill="#8a8060"/>
<rect x="98.8" y="236.9" width="1.6" height="2.2" fill="#8a8060"/>
<line x1="84.4" y1="244.2" x2="109.8" y2="244.2" stroke="#9c8a5a" stroke-width="0.7"/>
<rect x="93.4" y="243.1" width="1.6" height="2.2" fill="#8a8060"/>
<rect x="98.8" y="243.1" width="1.6" height="2.2" fill="#8a8060"/>
<line x1="84.4" y1="250.4" x2="109.8" y2="250.4" stroke="#9c8a5a" stroke-width="0.7"/>
<rect x="93.4" y="249.3" width="1.6" height="2.2" fill="#8a8060"/>
<rect x="98.8" y="249.3" width="1.6" height="2.2" fill="#8a8060"/>
<line x1="84.4" y1="256.6" x2="109.8" y2="256.6" stroke="#9c8a5a" stroke-width="0.7"/>
<rect x="93.4" y="255.5" width="1.6" height="2.2" fill="#8a8060"/>
<rect x="98.8" y="255.5" width="1.6" height="2.2" fill="#8a8060"/>
<line x1="84.4" y1="262.8" x2="109.8" y2="262.8" stroke="#9c8a5a" stroke-width="0.7"/>
<rect x="93.4" y="261.7" width="1.6" height="2.2" fill="#8a8060"/>
<rect x="98.8" y="261.7" width="1.6" height="2.2" fill="#8a8060"/>
<line x1="84.4" y1="269.0" x2="109.8" y2="269.0" stroke="#9c8a5a" stroke-width="0.7"/>
<rect x="93.4" y="267.9" width="1.6" height="2.2" fill="#8a8060"/>
<rect x="98.8" y="267.9" width="1.6" height="2.2" fill="#8a8060"/>
<line x1="84.4" y1="275.2" x2="109.8" y2="275.2" stroke="#9c8a5a" stroke-width="0.7"/>
<rect x="93.4" y="274.1" width="1.6" height="2.2" fill="#8a8060"/>
<rect x="98.8" y="274.1" width="1.6" height="2.2" fill="#8a8060"/>
<line x1="84.4" y1="281.4" x2="109.8" y2="281.4" stroke="#9c8a5a" stroke-width="0.7"/>
<rect x="93.4" y="280.3" width="1.6" height="2.2" fill="#8a8060"/>
<rect x="98.8" y="280.3" width="1.6" height="2.2" fill="#8a8060"/>
<line x1="84.4" y1="287.6" x2="109.8" y2="287.6" stroke="#9c8a5a" stroke-width="0.7"/>
<rect x="93.4" y="286.5" width="1.6" height="2.2" fill="#8a8060"/>
<rect x="98.8" y="286.5" width="1.6" height="2.2" fill="#8a8060"/>
<line x1="84.4" y1="293.8" x2="109.8" y2="293.8" stroke="#9c8a5a" stroke-width="0.7"/>
<rect x="93.4" y="292.7" width="1.6" height="2.2" fill="#8a8060"/>
<rect x="98.8" y="292.7" width="1.6" height="2.2" fill="#8a8060"/>
<line x1="84.4" y1="300.0" x2="109.8" y2="300.0" stroke="#9c8a5a" stroke-width="0.7"/>
<rect x="93.4" y="298.9" width="1.6" height="2.2" fill="#8a8060"/>
<rect x="98.8" y="298.9" width="1.6" height="2.2" fill="#8a8060"/>
<line x1="97.2" y1="207.0" x2="97.2" y2="300.2" stroke="#9c8a5a" stroke-width="0.8"/>
<rect x="83.0" y="212.0" width="2.8" height="2.0" fill="#e8e8e8"/>
<rect x="103.0" y="212.0" width="2.8" height="2.0" fill="#e8e8e8"/>
<rect x="83.0" y="231.2" width="2.8" height="2.0" fill="#e8e8e8"/>
<rect x="103.0" y="231.2" width="2.8" height="2.0" fill="#e8e8e8"/>
<rect x="83.0" y="250.4" width="2.8" height="2.0" fill="#e8e8e8"/>
<rect x="103.0" y="250.4" width="2.8" height="2.0" fill="#e8e8e8"/>
<rect x="83.0" y="269.6" width="2.8" height="2.0" fill="#e8e8e8"/>
<rect x="103.0" y="269.6" width="2.8" height="2.0" fill="#e8e8e8"/>
<rect x="83.0" y="288.8" width="2.8" height="2.0" fill="#e8e8e8"/>
<rect x="103.0" y="288.8" width="2.8" height="2.0" fill="#e8e8e8"/>
<rect x="55.2" y="244.2" width="12.6" height="49.0" fill="none" stroke="#9c8a5a" stroke-width="0.7"/>
<line x1="55.2" y1="244.2" x2="67.8" y2="244.2" stroke="#9c8a5a" stroke-width="0.7"/>
<line x1="55.2" y1="250.7" x2="67.8" y2="250.7" stroke="#9c8a5a" stroke-width="0.7"/>
<line x1="55.2" y1="257.2" x2="67.8" y2="257.2" stroke="#9c8a5a" stroke-width="0.7"/>
<line x1="55.2" y1="263.7" x2="67.8" y2="263.7" stroke="#9c8a5a" stroke-width="0.7"/>
<line x1="55.2" y1="270.2" x2="67.8" y2="270.2" stroke="#9c8a5a" stroke-width="0.7"/>
<line x1="55.2" y1="276.7" x2="67.8" y2="276.7" stroke="#9c8a5a" stroke-width="0.7"/>
<line x1="55.2" y1="283.2" x2="67.8" y2="283.2" stroke="#9c8a5a" stroke-width="0.7"/>
<line x1="55.2" y1="289.7" x2="67.8" y2="289.7" stroke="#9c8a5a" stroke-width="0.7"/>
<rect x="63.0" y="252.3" width="2.6" height="2.0" fill="#e8e8e8"/>
<rect x="63.0" y="272.0" width="2.6" height="2.0" fill="#e8e8e8"/>
<rect x="63.0" y="292.2" width="2.6" height="2.0" fill="#e8e8e8"/>
<line x1="54.5" y1="222.0" x2="54.5" y2="295.3" stroke="#d8d8d8" stroke-width="0.8"/>
<line x1="33.5" y1="295.3" x2="54.5" y2="295.3" stroke="#9c8a5a" stroke-width="0.8"/>
<rect x="123.5" y="206.5" width="12.0" height="87.0" fill="none" stroke="#9c8a5a" stroke-width="0.7"/>
<line x1="123.5" y1="206.5" x2="135.5" y2="206.5" stroke="#9c8a5a" stroke-width="0.7"/>
<line x1="123.5" y1="213.1" x2="135.5" y2="213.1" stroke="#9c8a5a" stroke-width="0.7"/>
<line x1="123.5" y1="219.7" x2="135.5" y2="219.7" stroke="#9c8a5a" stroke-width="0.7"/>
<line x1="123.5" y1="226.3" x2="135.5" y2="226.3" stroke="#9c8a5a" stroke-width="0.7"/>
<line x1="123.5" y1="232.9" x2="135.5" y2="232.9" stroke="#9c8a5a" stroke-width="0.7"/>
<line x1="123.5" y1="239.5" x2="135.5" y2="239.5" stroke="#9c8a5a" stroke-width="0.7"/>
<line x1="123.5" y1="246.1" x2="135.5" y2="246.1" stroke="#9c8a5a" stroke-width="0.7"/>
<line x1="123.5" y1="252.7" x2="135.5" y2="252.7" stroke="#9c8a5a" stroke-width="0.7"/>
<line x1="123.5" y1="259.3" x2="135.5" y2="259.3" stroke="#9c8a5a" stroke-width="0.7"/>
<line x1="123.5" y1="265.9" x2="135.5" y2="265.9" stroke="#9c8a5a" stroke-width="0.7"/>
<line x1="123.5" y1="272.5" x2="135.5" y2="272.5" stroke="#9c8a5a" stroke-width="0.7"/>
<line x1="123.5" y1="279.1" x2="135.5" y2="279.1" stroke="#9c8a5a" stroke-width="0.7"/>
<line x1="123.5" y1="285.7" x2="135.5" y2="285.7" stroke="#9c8a5a" stroke-width="0.7"/>
<line x1="123.5" y1="292.3" x2="135.5" y2="292.3" stroke="#9c8a5a" stroke-width="0.7"/>
<rect x="122.0" y="252.3" width="2.6" height="2.0" fill="#e8e8e8"/>
<rect x="122.0" y="272.0" width="2.6" height="2.0" fill="#e8e8e8"/>
<rect x="122.0" y="292.2" width="2.6" height="2.0" fill="#e8e8e8"/>
<rect x="36.3" y="312.3" width="67.2" height="12.9" fill="none" stroke="#9c8a5a" stroke-width="0.7"/>
<line x1="36.3" y1="312.3" x2="36.3" y2="325.2" stroke="#9c8a5a" stroke-width="0.7"/>
<rect x="35.3" y="323.0" width="2.4" height="1.4" fill="#b09a60"/>
<line x1="43.0" y1="312.3" x2="43.0" y2="325.2" stroke="#9c8a5a" stroke-width="0.7"/>
<rect x="42.0" y="323.0" width="2.4" height="1.4" fill="#b09a60"/>
<line x1="49.7" y1="312.3" x2="49.7" y2="325.2" stroke="#9c8a5a" stroke-width="0.7"/>
<rect x="48.7" y="323.0" width="2.4" height="1.4" fill="#b09a60"/>
<line x1="56.4" y1="312.3" x2="56.4" y2="325.2" stroke="#9c8a5a" stroke-width="0.7"/>
<rect x="55.4" y="323.0" width="2.4" height="1.4" fill="#b09a60"/>
<line x1="63.1" y1="312.3" x2="63.1" y2="325.2" stroke="#9c8a5a" stroke-width="0.7"/>
<rect x="62.1" y="323.0" width="2.4" height="1.4" fill="#b09a60"/>
<line x1="69.8" y1="312.3" x2="69.8" y2="325.2" stroke="#9c8a5a" stroke-width="0.7"/>
<rect x="68.8" y="323.0" width="2.4" height="1.4" fill="#b09a60"/>
<line x1="76.5" y1="312.3" x2="76.5" y2="325.2" stroke="#9c8a5a" stroke-width="0.7"/>
<rect x="75.5" y="323.0" width="2.4" height="1.4" fill="#b09a60"/>
<line x1="83.2" y1="312.3" x2="83.2" y2="325.2" stroke="#9c8a5a" stroke-width="0.7"/>
<rect x="82.2" y="323.0" width="2.4" height="1.4" fill="#b09a60"/>
<line x1="89.9" y1="312.3" x2="89.9" y2="325.2" stroke="#9c8a5a" stroke-width="0.7"/>
<rect x="88.9" y="323.0" width="2.4" height="1.4" fill="#b09a60"/>
<line x1="96.6" y1="312.3" x2="96.6" y2="325.2" stroke="#9c8a5a" stroke-width="0.7"/>
<rect x="95.6" y="323.0" width="2.4" height="1.4" fill="#b09a60"/>
<line x1="103.3" y1="312.3" x2="103.3" y2="325.2" stroke="#9c8a5a" stroke-width="0.7"/>
<rect x="102.3" y="323.0" width="2.4" height="1.4" fill="#b09a60"/>
<path d="M54.5,222.6 L63.6,212.8 L71.3,212.8 L71.3,239.4 L54.5,239.4" stroke="#d8d8d8" stroke-width="0.8" fill="none"/>
<rect x="65.0" y="221.0" width="6.3" height="10.0" fill="#c010c0"/>
<rect x="64.0" y="231.0" width="7.0" height="6.0" fill="#0a0a90"/>
<rect x="64.5" y="214.0" width="5.0" height="2.0" fill="none" stroke="#b0b080" stroke-width="0.5"/>
<rect x="64.5" y="217.5" width="5.0" height="2.0" fill="none" stroke="#1c9a2a" stroke-width="0.5"/>
<rect x="124.0" y="213.0" width="21.0" height="20.5" fill="none" stroke="#d8d8d8" stroke-width="0.9"/>
<rect x="125.0" y="217.5" width="6.5" height="7.5" fill="#c010c0"/>
<rect x="131.5" y="221.5" width="7.5" height="5.5" fill="#9010a0"/>
<rect x="140.0" y="217.5" width="4.5" height="6.5" fill="#30c0c0"/>
<rect x="131.5" y="214.0" width="8.0" height="6.0" fill="#000010"/>
<rect x="133.0" y="214.5" width="6.0" height="1.5" fill="#1010a0"/>
<line x1="131.5" y1="213.0" x2="131.5" y2="227.0" stroke="#d8d8d8" stroke-width="0.6"/>
<line x1="139.5" y1="213.0" x2="139.5" y2="233.0" stroke="#d8d8d8" stroke-width="0.6"/>
<line x1="124.0" y1="227.5" x2="145.0" y2="227.5" stroke="#d8d8d8" stroke-width="0.6"/>
<rect x="125.5" y="229.0" width="5.0" height="2.0" fill="#20b060"/>
<rect x="133.0" y="229.0" width="5.0" height="1.6" fill="#30d0c0"/>
<rect x="145.0" y="206.5" width="19.0" height="7.0" fill="none" stroke="#3030c0" stroke-width="0.9"/>
<rect x="150.0" y="209.0" width="4.0" height="1.2" fill="#22d040"/>
<rect x="143.8" y="180.6" width="20.5" height="15.4" fill="none" stroke="#d8d8d8" stroke-width="0.9"/>
<line x1="144.5" y1="183.0" x2="144.5" y2="195.0" stroke="#10b0b0" stroke-width="0.8"/>
<rect x="148.0" y="188.0" width="2.0" height="1.5" fill="#ddd"/>
<line x1="164.4" y1="180.6" x2="164.4" y2="203.7" stroke="#d8d8d8" stroke-width="0.9"/>
<rect x="164.8" y="204.4" width="5.6" height="8.4" fill="none" stroke="#d8d8d8" stroke-width="0.8"/>
<rect x="166.5" y="207.0" width="2.5" height="2.0" fill="#e04040"/>
<rect x="161.0" y="202.0" width="3.0" height="4.0" fill="#1010a0"/>
<line x1="145.2" y1="212.8" x2="190.0" y2="212.8" stroke="#d8d8d8" stroke-width="0.9"/>
<rect x="124.0" y="206.5" width="16.0" height="6.5" fill="none" stroke="#9c8a5a" stroke-width="0.7"/>
<rect x="131.0" y="208.6" width="9.0" height="1.6" fill="#e0a030"/>
<rect x="149.4" y="214.9" width="35.4" height="32.5" fill="none" stroke="#d8d8d8" stroke-width="1.0"/>
<rect x="153.2" y="218.4" width="0.8" height="25.0" fill="#10b0b0"/>
<rect x="163.4" y="217.0" width="20.3" height="3.5" fill="none" stroke="#1c9a2a" stroke-width="0.8"/>
<rect x="156.5" y="233.0" width="6.0" height="1.5" fill="#22d040"/>
<rect x="156.5" y="240.0" width="3.0" height="1.0" fill="#22d040"/>
<rect x="164.0" y="234.0" width="2.2" height="2.2" fill="#eee"/>
<line x1="172.0" y1="221.0" x2="172.0" y2="238.0" stroke="#1b5a1b" stroke-width="0.6"/>
<rect x="155.0" y="243.6" width="22.0" height="1.3" fill="#10b0b0" opacity="0.7"/>
<path d="M183.7,223.3 L198,223.3" stroke="#d8d8d8" stroke-width="0.9" fill="none"/>
<rect x="183.7" y="223.3" width="14.0" height="10.0" fill="none" stroke="#d8d8d8" stroke-width="0.8"/>
<rect x="185.0" y="225.0" width="10.0" height="1.2" fill="#10b0b0"/>
<rect x="176.0" y="232.0" width="8.0" height="20.0" fill="none" stroke="#d8d8d8" stroke-width="0.8"/>
<line x1="176.0" y1="238.0" x2="176.0" y2="252.0" stroke="#22d040" stroke-width="0.7"/>
<rect x="189.3" y="233.0" width="15.4" height="10.0" fill="none" stroke="#d8d8d8" stroke-width="0.8"/>
<rect x="189.3" y="243.0" width="15.4" height="10.0" fill="none" stroke="#d8d8d8" stroke-width="0.8"/>
<rect x="194.0" y="237.0" width="4.0" height="1.0" fill="#eee"/>
<rect x="192.0" y="246.0" width="8.0" height="1.0" fill="#ccc"/>
<rect x="185.0" y="242.0" width="3.0" height="4.0" fill="#c010c0"/>
<line x1="137.5" y1="212.8" x2="137.5" y2="293.2" stroke="#d8d8d8" stroke-width="0.9"/>
<line x1="145.2" y1="212.8" x2="145.2" y2="252.0" stroke="#d8d8d8" stroke-width="0.9"/>
<rect x="138.2" y="252.6" width="20.3" height="29.4" fill="none" stroke="#d8d8d8" stroke-width="0.9"/>
<rect x="144.0" y="266.0" width="2.0" height="1.5" fill="#ddd"/>
<rect x="143.0" y="271.0" width="2.0" height="2.0" fill="#eee"/>
<rect x="147.3" y="287.0" width="11.2" height="6.2" fill="none" stroke="#d8d8d8" stroke-width="0.9"/>
<rect x="139.0" y="283.0" width="4.0" height="1.2" fill="#ddd"/>
<line x1="159.2" y1="245.0" x2="159.2" y2="293.2" stroke="#d8d8d8" stroke-width="0.9"/>
<line x1="123.0" y1="293.2" x2="186.0" y2="293.2" stroke="#d8d8d8" stroke-width="1.0"/>
<rect x="164.0" y="252.6" width="20.4" height="40.6" fill="none" stroke="#d8d8d8" stroke-width="0.9"/>
<line x1="164.0" y1="258.4" x2="184.4" y2="258.4" stroke="#d8d8d8" stroke-width="0.7"/>
<line x1="164.0" y1="266.2" x2="184.4" y2="266.2" stroke="#d8d8d8" stroke-width="0.7"/>
<line x1="164.0" y1="272.7" x2="184.4" y2="272.7" stroke="#d8d8d8" stroke-width="0.7"/>
<line x1="164.0" y1="279.2" x2="184.4" y2="279.2" stroke="#d8d8d8" stroke-width="0.7"/>
<line x1="174.0" y1="259.6" x2="174.0" y2="279.2" stroke="#d8d8d8" stroke-width="0.7"/>
<rect x="165.0" y="259.2" width="8.5" height="6.5" fill="#080860"/>
<rect x="174.5" y="259.2" width="9.0" height="6.5" fill="#080860"/>
<rect x="165.0" y="267.0" width="8.5" height="5.0" fill="#0a0a90"/>
<rect x="174.5" y="267.0" width="9.0" height="5.0" fill="#0a0a80"/>
<rect x="165.0" y="273.5" width="8.5" height="5.2" fill="#080870"/>
<rect x="174.5" y="273.5" width="9.0" height="5.2" fill="#0a0a90"/>
<rect x="166.0" y="261.0" width="4.0" height="4.0" fill="#1420d0"/>
<rect x="175.0" y="268.0" width="4.0" height="3.5" fill="#1420d0"/>
<rect x="166.0" y="274.0" width="4.0" height="4.0" fill="#1420d0"/>
<rect x="178.0" y="262.0" width="3.0" height="3.0" fill="#1420d0"/>
<rect x="169.7" y="280.6" width="8.3" height="11.2" fill="#c010c0"/>
<rect x="166.0" y="281.0" width="1.0" height="10.0" fill="#22d040"/>
<rect x="179.0" y="283.0" width="3.0" height="2.0" fill="#d8d8d8"/>
<rect x="182.0" y="262.0" width="2.0" height="2.0" fill="#eee"/>
<line x1="188.6" y1="213.0" x2="188.6" y2="381.0" stroke="#d8d8d8" stroke-width="0.9"/>
<rect x="189.3" y="253.0" width="15.4" height="40.0" fill="#000"/>
<rect x="189.6" y="252.5" width="14.6" height="9.0" fill="none" stroke="#d8d8d8" stroke-width="0.6"/>
<rect x="190.5" y="253.5" width="6.0" height="4.0" fill="#0a10a0"/>
<rect x="197.0" y="257.0" width="6.0" height="2.5" fill="#b05020" opacity="0.85"/>
<rect x="191.0" y="258.0" width="5.0" height="2.0" fill="#209020"/>
<rect x="196.0" y="253.7" width="6.0" height="1.2" fill="#30b030" opacity="0.8"/>
<rect x="189.6" y="261.5" width="14.6" height="9.0" fill="none" stroke="#d8d8d8" stroke-width="0.6"/>
<rect x="190.5" y="262.5" width="6.0" height="4.0" fill="#0a10a0"/>
<rect x="197.0" y="266.0" width="6.0" height="2.5" fill="#b05020" opacity="0.85"/>
<rect x="191.0" y="267.0" width="5.0" height="2.0" fill="#209020"/>
<rect x="196.0" y="262.7" width="6.0" height="1.2" fill="#30b030" opacity="0.8"/>
<rect x="189.6" y="270.5" width="14.6" height="9.0" fill="none" stroke="#d8d8d8" stroke-width="0.6"/>
<rect x="190.5" y="271.5" width="6.0" height="4.0" fill="#0a10a0"/>
<rect x="197.0" y="275.0" width="6.0" height="2.5" fill="#b05020" opacity="0.85"/>
<rect x="191.0" y="276.0" width="5.0" height="2.0" fill="#209020"/>
<rect x="196.0" y="271.7" width="6.0" height="1.2" fill="#30b030" opacity="0.8"/>
<rect x="189.6" y="279.5" width="14.6" height="13.0" fill="none" stroke="#d8d8d8" stroke-width="0.6"/>
<rect x="190.5" y="281.0" width="5.5" height="8.0" fill="#206020"/>
<rect x="197.0" y="281.0" width="6.0" height="8.0" fill="#206020"/>
<rect x="191.0" y="283.0" width="3.0" height="4.0" fill="#d0d040"/>
<rect x="198.0" y="284.0" width="3.0" height="4.0" fill="#e04040"/>
<rect x="189.8" y="293.5" width="14.5" height="12.0" fill="#10a0a0" opacity="0.7"/>
<rect x="190.0" y="295.0" width="12.0" height="2.0" fill="#22d040"/>
<rect x="190.0" y="299.0" width="10.0" height="2.0" fill="#00ffff" opacity="0.6"/>
<rect x="124.0" y="292.0" width="12.0" height="8.6" fill="none" stroke="#9c8a5a" stroke-width="0.7"/>
<rect x="125.5" y="295.5" width="8.0" height="1.2" fill="#22d040"/>
<rect x="128.0" y="293.5" width="4.0" height="1.2" fill="#d02020"/>
<rect x="123.5" y="293.0" width="2.2" height="2.0" fill="#e0a040"/>
<rect x="124.0" y="304.8" width="12.0" height="6.6" fill="none" stroke="#9c8a5a" stroke-width="0.7"/>
<line x1="143.8" y1="294.0" x2="143.8" y2="313.8" stroke="#22d040" stroke-width="0.9"/>
<rect x="144.4" y="294.0" width="33.0" height="21.0" fill="none" stroke="#d8d8d8" stroke-width="0.9"/>
<rect x="156.4" y="303.0" width="27.6" height="17.0" fill="none" stroke="#d8d8d8" stroke-width="0.8"/>
<line x1="156.4" y1="309.8" x2="184.0" y2="309.8" stroke="#d8d8d8" stroke-width="0.7"/>
<line x1="164.6" y1="303.0" x2="164.6" y2="320.0" stroke="#d8d8d8" stroke-width="0.6"/>
<line x1="170.8" y1="303.0" x2="170.8" y2="310.0" stroke="#d8d8d8" stroke-width="0.6"/>
<line x1="177.0" y1="303.0" x2="177.0" y2="320.0" stroke="#d8d8d8" stroke-width="0.6"/>
<rect x="165.0" y="303.6" width="5.5" height="6.0" fill="#c010c0"/>
<rect x="171.2" y="303.6" width="5.5" height="6.0" fill="#c010c0"/>
<rect x="157.0" y="310.5" width="7.0" height="3.0" fill="#0a18c8"/>
<rect x="165.0" y="313.0" width="18.0" height="6.0" fill="#103010"/>
<rect x="156.5" y="311.0" width="5.0" height="4.0" fill="#1a1aa0"/>
<rect x="150.0" y="301.0" width="2.0" height="2.0" fill="#ddd"/>
<rect x="168.0" y="296.0" width="2.0" height="1.4" fill="#ddd"/>
<line x1="117.4" y1="312.6" x2="138.4" y2="312.6" stroke="#d8d8d8" stroke-width="0.9"/>
<line x1="138.4" y1="312.6" x2="138.4" y2="320.0" stroke="#d8d8d8" stroke-width="0.8"/>
<rect x="103.6" y="312.6" width="13.2" height="13.2" fill="none" stroke="#d8d8d8" stroke-width="0.7"/>
<rect x="104.5" y="314.0" width="9.0" height="1.4" fill="#10d0a0"/>
<rect x="104.5" y="318.5" width="9.0" height="1.6" fill="#10d0a0"/>
<rect x="104.5" y="322.0" width="10.0" height="2.0" fill="#10b0b0" opacity="0.8"/>
<line x1="33.5" y1="326.0" x2="119.6" y2="326.0" stroke="#d8d8d8" stroke-width="0.9"/>
<rect x="34.4" y="326.2" width="85.0" height="6.9" fill="none" stroke="#d8d8d8" stroke-width="0.8"/>
<line x1="42.5" y1="326.2" x2="42.5" y2="333.1" stroke="#d8d8d8" stroke-width="0.6"/>
<line x1="51.3" y1="326.2" x2="51.3" y2="333.1" stroke="#d8d8d8" stroke-width="0.6"/>
<line x1="58.1" y1="326.2" x2="58.1" y2="333.1" stroke="#d8d8d8" stroke-width="0.6"/>
<line x1="66.9" y1="326.2" x2="66.9" y2="333.1" stroke="#d8d8d8" stroke-width="0.6"/>
<line x1="80.0" y1="326.2" x2="80.0" y2="333.1" stroke="#d8d8d8" stroke-width="0.6"/>
<line x1="91.3" y1="326.2" x2="91.3" y2="333.1" stroke="#d8d8d8" stroke-width="0.6"/>
<line x1="98.1" y1="326.2" x2="98.1" y2="333.1" stroke="#d8d8d8" stroke-width="0.6"/>
<line x1="105.0" y1="326.2" x2="105.0" y2="333.1" stroke="#d8d8d8" stroke-width="0.6"/>
<line x1="117.5" y1="326.2" x2="117.5" y2="333.1" stroke="#d8d8d8" stroke-width="0.6"/>
<rect x="70.0" y="327.0" width="7.5" height="5.4" fill="#c010c0"/>
<rect x="45.0" y="327.5" width="4.0" height="3.0" fill="#1010a0"/>
<rect x="83.0" y="327.5" width="3.0" height="3.0" fill="#1010a0"/>
<rect x="86.0" y="329.5" width="5.0" height="2.5" fill="#20a0a0" opacity="0.8"/>
<line x1="105.0" y1="330.0" x2="118.0" y2="333.0" stroke="#50e0e0" stroke-width="0.7"/>
<rect x="34.4" y="333.1" width="23.1" height="20.0" fill="none" stroke="#d8d8d8" stroke-width="0.8"/>
<line x1="42.5" y1="333.1" x2="42.5" y2="353.0" stroke="#d8d8d8" stroke-width="0.7"/>
<line x1="51.0" y1="333.1" x2="51.0" y2="353.0" stroke="#d8d8d8" stroke-width="0.7"/>
<line x1="34.4" y1="340.5" x2="57.5" y2="340.5" stroke="#d8d8d8" stroke-width="0.6"/>
<rect x="43.3" y="334.0" width="7.0" height="6.0" fill="#0a0a60"/>
<rect x="52.0" y="334.0" width="5.0" height="6.0" fill="#0a10b0"/>
<rect x="43.3" y="341.5" width="7.0" height="11.0" fill="#080850"/>
<rect x="52.0" y="341.5" width="5.0" height="11.0" fill="#0a14c0"/>
<rect x="45.0" y="345.0" width="2.0" height="3.0" fill="#2040ff"/>
<rect x="38.0" y="344.0" width="1.5" height="1.5" fill="#ddd"/>
<rect x="43.8" y="354.4" width="13.8" height="18.1" fill="#0a0a90" stroke="#d8d8d8" stroke-width="0.9"/>
<rect x="46.0" y="357.0" width="9.0" height="4.0" fill="#0818d0"/>
<rect x="46.0" y="363.0" width="9.0" height="5.0" fill="#0818d0"/>
<rect x="48.0" y="363.5" width="2.0" height="1.6" fill="#eee"/>
<line x1="33.8" y1="361.2" x2="41.9" y2="361.2" stroke="#e0e040" stroke-width="1.0"/>
<line x1="59.4" y1="333.8" x2="59.4" y2="372.5" stroke="#d8d8d8" stroke-width="0.9"/>
<line x1="59.4" y1="334.8" x2="120.0" y2="334.8" stroke="#d8d8d8" stroke-width="0.9"/>
<line x1="63.8" y1="338.8" x2="120.0" y2="338.8" stroke="#d8d8d8" stroke-width="0.9"/>
<line x1="63.8" y1="338.8" x2="63.8" y2="372.5" stroke="#d8d8d8" stroke-width="0.9"/>
<rect x="65.0" y="341.0" width="1.4" height="2.0" fill="#2040ff"/>
<rect x="65.0" y="345.0" width="1.4" height="2.0" fill="#2040ff"/>
<rect x="65.0" y="349.0" width="1.4" height="2.0" fill="#2040ff"/>
<rect x="65.0" y="353.0" width="1.4" height="2.0" fill="#2040ff"/>
<rect x="65.0" y="357.0" width="1.4" height="2.0" fill="#2040ff"/>
<rect x="65.0" y="361.0" width="1.4" height="2.0" fill="#2040ff"/>
<rect x="65.0" y="365.0" width="1.4" height="2.0" fill="#2040ff"/>
<rect x="65.0" y="369.0" width="1.4" height="2.0" fill="#2040ff"/>
<line x1="64.4" y1="363.0" x2="64.4" y2="390.4" stroke="#d8d8d8" stroke-width="0.9"/>
<rect x="64.4" y="363.0" width="6.2" height="11.4" fill="none" stroke="#1c9a2a" stroke-width="0.9"/>
<rect x="66.3" y="367.5" width="2.4" height="1.6" fill="#f04040"/>
<line x1="66.2" y1="345.0" x2="83.8" y2="345.0" stroke="#d8d8d8" stroke-width="0.7"/>
<rect x="66.2" y="339.4" width="17.5" height="34.3" fill="none" stroke="#d8d8d8" stroke-width="0.7"/>
<rect x="79.6" y="350.0" width="4.0" height="6.0" fill="#30b0b0" opacity="0.85"/>
<rect x="70.0" y="342.0" width="2.0" height="1.4" fill="#ddd"/>
<line x1="84.4" y1="338.8" x2="84.4" y2="373.8" stroke="#d8d8d8" stroke-width="0.9"/>
<rect x="88.8" y="340.0" width="13.8" height="33.8" fill="#000"/>
<rect x="89.5" y="343.8" width="5.5" height="5.0" fill="#0a18c8"/>
<rect x="96.0" y="343.8" width="5.5" height="5.0" fill="#0a18c8"/>
<rect x="89.5" y="353.8" width="5.5" height="5.0" fill="#0a18c8"/>
<rect x="96.0" y="353.8" width="5.5" height="5.0" fill="#0a18c8"/>
<rect x="89.5" y="361.2" width="5.5" height="5.0" fill="#0a18c8"/>
<rect x="96.0" y="361.2" width="5.5" height="5.0" fill="#0a18c8"/>
<rect x="89.5" y="367.5" width="5.5" height="5.0" fill="#0a18c8"/>
<rect x="96.0" y="367.5" width="5.5" height="5.0" fill="#0a18c8"/>
<line x1="103.1" y1="338.8" x2="103.1" y2="373.8" stroke="#d8d8d8" stroke-width="0.9"/>
<rect x="97.5" y="353.0" width="27.5" height="4.5" fill="none" stroke="#d8d8d8" stroke-width="0.8"/>
<rect x="103.8" y="357.5" width="20.0" height="15.0" fill="#0a0a90"/>
<circle cx="117.5" cy="364.4" r="4.8" stroke="#1838ff" stroke-width="0.9" fill="none"/>
<circle cx="117.5" cy="364.4" r="2.4" stroke="#1838ff" stroke-width="0.6" fill="none"/>
<rect x="116.5" y="363.8" width="2.0" height="1.3" fill="#ddd"/>
<rect x="104.5" y="358.5" width="6.0" height="12.0" fill="#0a18c0"/>
<line x1="123.0" y1="320.0" x2="123.0" y2="374.0" stroke="#c0e080" stroke-width="0.9"/>
<line x1="162.4" y1="320.0" x2="162.4" y2="372.0" stroke="#d8d8d8" stroke-width="0.8"/>
<rect x="163.0" y="325.8" width="2.4" height="7.2" fill="#d02020"/>
<rect x="163.0" y="333.5" width="2.0" height="1.6" fill="#eee"/>
<rect x="166.0" y="339.0" width="5.0" height="8.0" fill="#e0c040" opacity="0.9"/>
<rect x="167.0" y="341.0" width="3.0" height="4.0" fill="#e04040"/>
<rect x="165.0" y="350.0" width="4.0" height="2.0" fill="#e08020"/>
<rect x="170.0" y="352.0" width="3.0" height="2.0" fill="#40c040"/>
<rect x="176.8" y="324.6" width="6.0" height="34.0" fill="#0a300a"/>
<rect x="165.0" y="357.0" width="6.0" height="6.0" fill="none" stroke="#d8d8d8" stroke-width="0.8"/>
<rect x="174.0" y="357.0" width="4.0" height="4.0" fill="#e0c040"/>
<line x1="184.6" y1="292.0" x2="184.6" y2="372.0" stroke="#d8d8d8" stroke-width="0.9"/>
<rect x="189.6" y="306.0" width="14.6" height="54.0" fill="#000"/>
<rect x="198.1" y="309.9" width="1.5" height="0.8" fill="#c03020"/>
<rect x="201.8" y="317.3" width="1.0" height="1.2" fill="#e04030"/>
<rect x="190.9" y="328.6" width="1.8" height="0.7" fill="#f0a030"/>
<rect x="197.5" y="336.6" width="2.0" height="1.5" fill="#e04030"/>
<rect x="201.6" y="308.5" width="2.1" height="1.0" fill="#f0a030"/>
<rect x="196.9" y="336.2" width="1.1" height="1.0" fill="#c03020"/>
<rect x="196.5" y="340.0" width="2.6" height="0.8" fill="#e0d040"/>
<rect x="197.2" y="338.6" width="1.0" height="1.3" fill="#40ff60"/>
<rect x="193.5" y="337.0" width="2.3" height="1.0" fill="#40ff60"/>
<rect x="192.1" y="347.4" width="1.6" height="0.8" fill="#e04030"/>
<rect x="200.4" y="344.6" width="2.1" height="1.1" fill="#e0d040"/>
<rect x="196.0" y="314.8" width="2.1" height="0.7" fill="#e0d040"/>
<rect x="190.3" y="341.4" width="1.1" height="1.1" fill="#f0a030"/>
<rect x="199.8" y="323.9" width="2.0" height="1.4" fill="#e0d040"/>
<rect x="195.3" y="350.4" width="2.1" height="1.2" fill="#e0d040"/>
<rect x="190.5" y="343.0" width="1.8" height="1.3" fill="#a0e040"/>
<rect x="195.2" y="343.8" width="2.1" height="1.3" fill="#a0e040"/>
<rect x="194.3" y="338.0" width="1.6" height="1.5" fill="#40ff60"/>
<rect x="191.5" y="319.0" width="0.9" height="1.4" fill="#40ff60"/>
<rect x="191.7" y="327.2" width="2.8" height="1.1" fill="#e0d040"/>
<rect x="199.7" y="320.6" width="2.7" height="1.4" fill="#40ff60"/>
<rect x="194.1" y="318.2" width="3.0" height="1.3" fill="#e04030"/>
<rect x="192.8" y="331.8" width="1.2" height="0.8" fill="#c03020"/>
<rect x="191.7" y="334.4" width="1.2" height="0.9" fill="#c03020"/>
<rect x="198.2" y="333.0" width="2.0" height="1.6" fill="#c03020"/>
<rect x="195.3" y="351.9" width="2.2" height="1.3" fill="#f0a030"/>
<rect x="194.5" y="326.8" width="2.3" height="1.2" fill="#40ff60"/>
<rect x="190.6" y="317.1" width="2.2" height="0.7" fill="#30c030"/>
<rect x="191.1" y="335.9" width="1.0" height="1.2" fill="#c03020"/>
<rect x="190.1" y="352.4" width="1.0" height="1.0" fill="#c03020"/>
<rect x="201.8" y="337.8" width="1.6" height="1.2" fill="#40ff60"/>
<rect x="202.8" y="330.5" width="1.1" height="1.4" fill="#40ff60"/>
<rect x="199.3" y="345.4" width="1.5" height="0.7" fill="#40ff60"/>
<rect x="190.1" y="356.6" width="2.6" height="0.8" fill="#c03020"/>
<rect x="201.3" y="346.0" width="1.6" height="1.3" fill="#e0d040"/>
<rect x="197.6" y="319.7" width="3.0" height="1.5" fill="#e0d040"/>
<rect x="192.3" y="334.7" width="2.8" height="1.0" fill="#c03020"/>
<rect x="200.1" y="358.4" width="1.5" height="0.8" fill="#f0a030"/>
<rect x="195.0" y="348.7" width="1.2" height="0.8" fill="#30c030"/>
<rect x="190.2" y="307.5" width="1.9" height="1.0" fill="#e0d040"/>
<rect x="197.3" y="324.3" width="1.8" height="0.8" fill="#f0a030"/>
<rect x="200.6" y="325.1" width="2.9" height="1.6" fill="#30c030"/>
<rect x="194.2" y="331.5" width="1.0" height="1.1" fill="#c03020"/>
<rect x="197.3" y="348.3" width="2.6" height="1.1" fill="#e04030"/>
<rect x="194.3" y="343.9" width="2.6" height="0.7" fill="#30c030"/>
<rect x="199.5" y="323.7" width="1.9" height="0.8" fill="#f0a030"/>
<rect x="195.0" y="345.2" width="2.9" height="1.3" fill="#e04030"/>
<rect x="191.3" y="314.0" width="2.4" height="0.8" fill="#40ff60"/>
<rect x="199.4" y="358.2" width="2.6" height="0.7" fill="#a0e040"/>
<rect x="196.0" y="307.1" width="2.9" height="0.8" fill="#f0a030"/>
<rect x="195.7" y="355.2" width="2.9" height="1.2" fill="#40ff60"/>
<rect x="199.6" y="307.5" width="3.0" height="0.8" fill="#30c030"/>
<rect x="197.3" y="319.8" width="1.4" height="0.8" fill="#40ff60"/>
<rect x="198.4" y="353.9" width="2.6" height="0.7" fill="#a0e040"/>
<rect x="194.9" y="354.2" width="2.1" height="1.5" fill="#c03020"/>
<rect x="196.5" y="352.5" width="1.1" height="0.8" fill="#f0a030"/>
<rect x="200.2" y="315.2" width="1.2" height="0.6" fill="#40ff60"/>
<rect x="190.5" y="342.4" width="2.2" height="0.7" fill="#c03020"/>
<rect x="191.1" y="335.5" width="2.0" height="1.4" fill="#30c030"/>
<rect x="191.1" y="330.1" width="1.2" height="0.6" fill="#e04030"/>
<rect x="195.0" y="338.2" width="2.5" height="1.5" fill="#c03020"/>
<rect x="193.1" y="333.0" width="2.1" height="0.8" fill="#f0a030"/>
<rect x="198.4" y="352.0" width="1.9" height="1.5" fill="#e0d040"/>
<rect x="192.1" y="329.5" width="2.8" height="1.5" fill="#40ff60"/>
<rect x="190.8" y="318.7" width="1.1" height="1.0" fill="#e04030"/>
<rect x="191.4" y="347.3" width="1.3" height="0.9" fill="#a0e040"/>
<rect x="192.8" y="313.3" width="2.2" height="1.0" fill="#40ff60"/>
<rect x="194.9" y="331.6" width="1.3" height="1.6" fill="#a0e040"/>
<rect x="194.8" y="333.5" width="2.6" height="0.8" fill="#e0d040"/>
<rect x="190.9" y="325.4" width="1.7" height="1.0" fill="#e0d040"/>
<rect x="190.0" y="323.6" width="2.0" height="1.0" fill="#c03020"/>
<rect x="191.2" y="354.2" width="1.4" height="1.6" fill="#30c030"/>
<rect x="192.8" y="308.1" width="2.9" height="0.7" fill="#f0a030"/>
<rect x="200.5" y="350.7" width="1.2" height="1.4" fill="#a0e040"/>
<rect x="191.5" y="354.8" width="2.6" height="0.9" fill="#c03020"/>
<rect x="193.2" y="348.4" width="1.9" height="0.9" fill="#30c030"/>
<rect x="201.5" y="339.8" width="1.7" height="0.7" fill="#f0a030"/>
<rect x="192.7" y="320.0" width="1.4" height="1.2" fill="#e04030"/>
<rect x="196.7" y="355.2" width="1.8" height="0.9" fill="#e0d040"/>
<rect x="198.3" y="356.1" width="2.2" height="0.6" fill="#30c030"/>
<rect x="201.8" y="339.5" width="1.4" height="0.8" fill="#c03020"/>
<rect x="195.7" y="315.4" width="2.5" height="0.9" fill="#e0d040"/>
<rect x="190.2" y="307.0" width="2.6" height="1.6" fill="#c03020"/>
<rect x="195.6" y="355.7" width="2.0" height="0.8" fill="#e04030"/>
<rect x="197.6" y="334.8" width="2.2" height="1.3" fill="#40ff60"/>
<rect x="192.2" y="318.2" width="2.9" height="0.9" fill="#30c030"/>
<rect x="197.2" y="327.3" width="2.6" height="1.3" fill="#e0d040"/>
<rect x="190.0" y="338.9" width="3.0" height="1.4" fill="#e0d040"/>
<rect x="198.1" y="326.3" width="1.7" height="0.7" fill="#c03020"/>
<rect x="192.7" y="321.6" width="2.3" height="0.9" fill="#40ff60"/>
<rect x="189.8" y="325.3" width="1.2" height="0.9" fill="#e0d040"/>
<rect x="192.6" y="357.0" width="2.9" height="1.1" fill="#e0d040"/>
<rect x="194.1" y="310.5" width="1.3" height="0.8" fill="#e0d040"/>
<rect x="196.0" y="306.3" width="1.9" height="0.8" fill="#e0d040"/>
<rect x="196.6" y="327.0" width="2.6" height="0.7" fill="#e0d040"/>
<rect x="196.0" y="308.0" width="2.4" height="17.8" fill="#e0d070"/>
<rect x="200.8" y="307.0" width="2.6" height="18.0" fill="#c03020" opacity="0.8"/>
<rect x="190.0" y="330.0" width="13.5" height="1.4" fill="#d04030" opacity="0.9"/>
<rect x="191.0" y="332.5" width="12.0" height="1.2" fill="#30b030" opacity="0.9"/>
<rect x="190.0" y="335.8" width="13.5" height="1.4" fill="#d04030" opacity="0.9"/>
<rect x="191.0" y="338.3" width="12.0" height="1.2" fill="#30b030" opacity="0.9"/>
<rect x="190.0" y="341.6" width="13.5" height="1.4" fill="#d04030" opacity="0.9"/>
<rect x="191.0" y="344.1" width="12.0" height="1.2" fill="#30b030" opacity="0.9"/>
<rect x="190.0" y="347.4" width="13.5" height="1.4" fill="#d04030" opacity="0.9"/>
<rect x="191.0" y="349.9" width="12.0" height="1.2" fill="#30b030" opacity="0.9"/>
<rect x="190.0" y="353.2" width="13.5" height="1.4" fill="#d04030" opacity="0.9"/>
<rect x="191.0" y="355.7" width="12.0" height="1.2" fill="#30b030" opacity="0.9"/>
<rect x="189.5" y="352.0" width="14.0" height="7.0" fill="#1a1aa0" opacity="0.6"/>
<rect x="179.6" y="342.4" width="1.2" height="0.8" fill="#e0d040"/>
<rect x="181.0" y="337.6" width="1.7" height="1.2" fill="#a0e040"/>
<rect x="177.6" y="345.2" width="1.8" height="1.0" fill="#e0d040"/>
<rect x="181.8" y="345.3" width="0.9" height="1.3" fill="#e0d040"/>
<rect x="179.0" y="351.3" width="2.1" height="1.2" fill="#e04030"/>
<rect x="180.9" y="347.2" width="2.0" height="1.1" fill="#40ff60"/>
<rect x="180.1" y="356.6" width="0.9" height="0.6" fill="#f0a030"/>
<rect x="179.4" y="345.4" width="2.0" height="1.0" fill="#40ff60"/>
<rect x="180.7" y="349.7" width="1.5" height="0.6" fill="#30c030"/>
<rect x="180.2" y="333.3" width="1.7" height="0.7" fill="#30c030"/>
<rect x="180.1" y="332.6" width="2.0" height="0.8" fill="#ffffff"/>
<rect x="178.8" y="347.4" width="1.5" height="0.9" fill="#e04030"/>
<rect x="176.4" y="329.8" width="1.7" height="1.1" fill="#c03020"/>
<rect x="179.5" y="329.3" width="1.7" height="1.2" fill="#ffffff"/>
<rect x="180.4" y="347.7" width="0.9" height="0.8" fill="#ffffff"/>
<rect x="178.9" y="340.2" width="1.2" height="1.0" fill="#30c030"/>
<rect x="177.6" y="327.8" width="2.2" height="1.0" fill="#ffffff"/>
<rect x="181.4" y="356.6" width="0.8" height="1.0" fill="#ffffff"/>
<rect x="180.8" y="355.4" width="2.2" height="0.9" fill="#30c030"/>
<rect x="179.0" y="356.3" width="1.6" height="0.7" fill="#e0d040"/>
<rect x="177.6" y="328.7" width="1.6" height="1.1" fill="#a0e040"/>
<rect x="179.1" y="325.8" width="1.1" height="1.3" fill="#e04030"/>
<rect x="178.1" y="348.6" width="2.1" height="1.1" fill="#f0a030"/>
<rect x="181.1" y="325.1" width="1.3" height="0.9" fill="#a0e040"/>
<rect x="181.0" y="348.5" width="2.0" height="0.7" fill="#c03020"/>
<rect x="178.4" y="353.7" width="1.2" height="0.7" fill="#30c030"/>
<rect x="177.7" y="326.6" width="1.3" height="0.9" fill="#30c030"/>
<rect x="180.1" y="329.8" width="0.9" height="1.1" fill="#c03020"/>
<rect x="180.6" y="350.7" width="1.4" height="0.9" fill="#f0a030"/>
<rect x="179.4" y="354.5" width="2.0" height="1.2" fill="#40ff60"/>
<rect x="180.1" y="339.9" width="1.8" height="0.6" fill="#e0d040"/>
<rect x="176.3" y="355.4" width="1.7" height="0.8" fill="#e0d040"/>
<rect x="177.8" y="333.4" width="1.0" height="0.9" fill="#c03020"/>
<rect x="178.9" y="346.9" width="1.4" height="0.8" fill="#30c030"/>
<rect x="177.3" y="354.8" width="1.0" height="0.7" fill="#ffffff"/>
<rect x="177.9" y="349.8" width="1.6" height="1.0" fill="#f0a030"/>
<rect x="176.6" y="336.2" width="1.0" height="0.8" fill="#30c030"/>
<rect x="181.0" y="331.6" width="1.2" height="0.9" fill="#e04030"/>
<rect x="178.3" y="342.1" width="1.8" height="0.9" fill="#f0a030"/>
<rect x="179.1" y="343.6" width="1.2" height="1.2" fill="#a0e040"/>
<rect x="180.0" y="353.1" width="1.0" height="1.0" fill="#40ff60"/>
<rect x="178.5" y="345.8" width="0.9" height="1.3" fill="#f0a030"/>
<rect x="180.6" y="325.7" width="2.1" height="1.3" fill="#e04030"/>
<rect x="180.8" y="356.4" width="1.4" height="1.2" fill="#ffffff"/>
<rect x="182.1" y="352.0" width="0.8" height="0.9" fill="#ffffff"/>
<rect x="166.6" y="314.8" width="2.5" height="0.8" fill="#c03020"/>
<rect x="178.6" y="317.7" width="2.5" height="0.7" fill="#f0a030"/>
<rect x="174.2" y="314.2" width="2.1" height="1.1" fill="#f0a030"/>
<rect x="165.5" y="317.5" width="1.0" height="1.2" fill="#30c030"/>
<rect x="172.4" y="317.7" width="1.9" height="1.1" fill="#e04030"/>
<rect x="175.5" y="315.9" width="0.9" height="1.1" fill="#30c030"/>
<rect x="174.0" y="319.4" width="2.1" height="0.6" fill="#e0d040"/>
<rect x="179.6" y="316.3" width="2.4" height="1.2" fill="#30c030"/>
<rect x="172.0" y="317.5" width="1.7" height="0.6" fill="#e04030"/>
<rect x="177.2" y="316.1" width="0.8" height="1.1" fill="#e0d040"/>
<rect x="171.5" y="316.5" width="1.2" height="1.0" fill="#a0e040"/>
<rect x="177.0" y="315.0" width="1.4" height="1.0" fill="#f0a030"/>
<rect x="166.0" y="316.3" width="1.3" height="1.4" fill="#30c030"/>
<rect x="168.9" y="315.0" width="1.3" height="1.4" fill="#f0a030"/>
<line x1="189.3" y1="360.0" x2="204.7" y2="360.0" stroke="#d8d8d8" stroke-width="0.8"/>
<rect x="178.0" y="361.6" width="23.0" height="9.0" fill="none" stroke="#d8d8d8" stroke-width="0.8"/>
<rect x="184.0" y="363.0" width="2.0" height="1.4" fill="#ddd"/>
<rect x="64.0" y="372.5" width="8.0" height="8.0" fill="none" stroke="#1c9a2a" stroke-width="0.8"/>
<rect x="72.0" y="372.6" width="23.0" height="7.6" fill="#000" stroke="#22d040" stroke-width="1.0"/>
<path d="M75.75,374.5 L79.75,378.5 M79.75,374.5 L75.75,378.5" stroke="#5070ff" stroke-width="0.9" fill="none"/>
<path d="M87.25,374.5 L91.25,378.5 M91.25,374.5 L87.25,378.5" stroke="#5070ff" stroke-width="0.9" fill="none"/>
<rect x="96.0" y="372.6" width="21.0" height="7.6" fill="#000" stroke="#22d040" stroke-width="1.0"/>
<path d="M99.25,374.5 L103.25,378.5 M103.25,374.5 L99.25,378.5" stroke="#5070ff" stroke-width="0.9" fill="none"/>
<path d="M109.75,374.5 L113.75,378.5 M113.75,374.5 L109.75,378.5" stroke="#5070ff" stroke-width="0.9" fill="none"/>
<rect x="118.0" y="372.6" width="11.0" height="7.6" fill="#000" stroke="#22d040" stroke-width="1.0"/>
<path d="M121.5,374.5 L125.5,378.5 M125.5,374.5 L121.5,378.5" stroke="#5070ff" stroke-width="0.9" fill="none"/>
<rect x="129.8" y="372.6" width="29.4" height="7.6" fill="#000" stroke="#22d040" stroke-width="1.0"/>
<circle cx="134.7" cy="376.4" r="3.2" stroke="#10b0b0" stroke-width="0.9" fill="none"/>
<circle cx="134.7" cy="376.4" r="1.6" stroke="#10b0b0" stroke-width="0.6" fill="none"/>
<circle cx="144.5" cy="376.4" r="3.2" stroke="#10b0b0" stroke-width="0.9" fill="none"/>
<circle cx="144.5" cy="376.4" r="1.6" stroke="#10b0b0" stroke-width="0.6" fill="none"/>
<circle cx="154.3" cy="376.4" r="3.2" stroke="#10b0b0" stroke-width="0.9" fill="none"/>
<circle cx="154.3" cy="376.4" r="1.6" stroke="#10b0b0" stroke-width="0.6" fill="none"/>
<rect x="163.4" y="372.6" width="21.0" height="7.6" fill="#000" stroke="#22d040" stroke-width="1.0"/>
<circle cx="168.7" cy="376.4" r="3.2" stroke="#10b0b0" stroke-width="0.9" fill="none"/>
<circle cx="168.7" cy="376.4" r="1.6" stroke="#10b0b0" stroke-width="0.6" fill="none"/>
<circle cx="179.2" cy="376.4" r="3.2" stroke="#10b0b0" stroke-width="0.9" fill="none"/>
<circle cx="179.2" cy="376.4" r="1.6" stroke="#10b0b0" stroke-width="0.6" fill="none"/>
<rect x="71.5" y="372.6" width="1.4" height="7.6" fill="#22d040"/>
<rect x="78.5" y="372.6" width="1.4" height="7.6" fill="#22d040"/>
<rect x="83.5" y="372.6" width="1.4" height="7.6" fill="#22d040"/>
<rect x="95.5" y="372.6" width="1.4" height="7.6" fill="#22d040"/>
<rect x="102.5" y="372.6" width="1.4" height="7.6" fill="#22d040"/>
<rect x="109.5" y="372.6" width="1.4" height="7.6" fill="#22d040"/>
<rect x="117.5" y="372.6" width="1.4" height="7.6" fill="#22d040"/>
<rect x="124.5" y="372.6" width="1.4" height="7.6" fill="#22d040"/>
<rect x="159.4" y="374.0" width="4.0" height="2.0" fill="#5010a0"/>
<line x1="65.0" y1="383.0" x2="185.8" y2="383.0" stroke="#d8d8d8" stroke-width="0.9"/>
<path d="M73,383.8 C88,389.5 102,392.8 118,392.8 C134,392.8 152,389.5 167.3,383.8 L168.5,388 C152,394 134,397.6 118,397.6 C102,397.6 88,394 73,388 Z" fill="#5a5a5a" stroke="#b8b8b8" stroke-width="0.8"/>
<clipPath id="bandclip"><path d="M73,383.8 C88,389.5 102,392.8 118,392.8 C134,392.8 152,389.5 167.3,383.8 L168.5,388 C152,394 134,397.6 118,397.6 C102,397.6 88,394 73,388 Z"/></clipPath>
<path d="M73.0,380 L73.0,400 M76.4,380 L76.4,400 M79.8,380 L79.8,400 M83.2,380 L83.2,400 M86.6,380 L86.6,400 M90.0,380 L90.0,400 M93.4,380 L93.4,400 M96.8,380 L96.8,400 M100.2,380 L100.2,400 M103.6,380 L103.6,400 M107.0,380 L107.0,400 M110.4,380 L110.4,400 M113.8,380 L113.8,400 M117.2,380 L117.2,400 M120.6,380 L120.6,400 M124.0,380 L124.0,400 M127.4,380 L127.4,400 M130.8,380 L130.8,400 M134.2,380 L134.2,400 M137.6,380 L137.6,400 M141.0,380 L141.0,400 M144.4,380 L144.4,400 M147.8,380 L147.8,400 M151.2,380 L151.2,400 M154.6,380 L154.6,400 M158.0,380 L158.0,400 M161.4,380 L161.4,400 M164.8,380 L164.8,400 M168.2,380 L168.2,400" stroke="#a8a8a8" stroke-width="1.5" clip-path="url(#bandclip)"/>
<path d="M97.5,396.8 C105,397.6 112,397.8 120,397.8 C128,397.8 135,397.5 141.8,396.8 L141,402.6 C134,403.6 127,404 120,404 C113,404 106,403.6 98.5,402.6 Z" stroke="#b0d0b0" stroke-width="0.7" fill="#0e5a12"/>
<circle cx="99.5" cy="398.6" r="1.0" stroke="#30ff30" stroke-width="0.5" fill="#40ff40"/>
<circle cx="103.5" cy="400.2" r="1.0" stroke="#30ff30" stroke-width="0.5" fill="#40ff40"/>
<circle cx="107.5" cy="399.0" r="1.0" stroke="#30ff30" stroke-width="0.5" fill="#40ff40"/>
<circle cx="111.0" cy="401.2" r="1.0" stroke="#30ff30" stroke-width="0.5" fill="#40ff40"/>
<circle cx="115.0" cy="400.0" r="1.0" stroke="#30ff30" stroke-width="0.5" fill="#40ff40"/>
<circle cx="119.0" cy="401.6" r="1.0" stroke="#30ff30" stroke-width="0.5" fill="#40ff40"/>
<circle cx="123.0" cy="399.4" r="1.0" stroke="#30ff30" stroke-width="0.5" fill="#40ff40"/>
<circle cx="127.0" cy="401.2" r="1.0" stroke="#30ff30" stroke-width="0.5" fill="#40ff40"/>
<circle cx="131.0" cy="399.8" r="1.0" stroke="#30ff30" stroke-width="0.5" fill="#40ff40"/>
<circle cx="135.0" cy="400.8" r="1.0" stroke="#30ff30" stroke-width="0.5" fill="#40ff40"/>
<circle cx="138.5" cy="398.8" r="1.0" stroke="#30ff30" stroke-width="0.5" fill="#40ff40"/>
<circle cx="72.0" cy="389.3" r="2.6" stroke="#1c9a2a" stroke-width="0.8" fill="none"/>
<circle cx="78.3" cy="392.8" r="2.6" stroke="#1c9a2a" stroke-width="0.8" fill="none"/>
<circle cx="86.0" cy="395.6" r="2.6" stroke="#1c9a2a" stroke-width="0.8" fill="none"/>
<circle cx="148.0" cy="397.0" r="2.6" stroke="#1c9a2a" stroke-width="0.8" fill="none"/>
<circle cx="155.7" cy="394.2" r="2.6" stroke="#1c9a2a" stroke-width="0.8" fill="none"/>
<rect x="167.6" y="385.8" width="7.0" height="4.2" fill="#c010c0"/>
<circle cx="136.8" cy="386.5" r="0.9" stroke="#808060" stroke-width="0.6" fill="none"/>
<circle cx="140.5" cy="386.5" r="0.9" stroke="#808060" stroke-width="0.6" fill="none"/>
<circle cx="144.2" cy="386.5" r="0.9" stroke="#808060" stroke-width="0.6" fill="none"/>
<circle cx="148.0" cy="386.5" r="0.9" stroke="#808060" stroke-width="0.6" fill="none"/>
<circle cx="100.0" cy="386.0" r="0.9" stroke="#808060" stroke-width="0.6" fill="none"/>
<circle cx="103.7" cy="386.0" r="0.9" stroke="#808060" stroke-width="0.6" fill="none"/>
<circle cx="107.4" cy="386.0" r="0.9" stroke="#808060" stroke-width="0.6" fill="none"/>
<circle cx="111.0" cy="386.0" r="0.9" stroke="#808060" stroke-width="0.6" fill="none"/>
<path d="M118,384 L118,392 M116.5,385.5 L119.5,390.5 M119.5,385.5 L116.5,390.5" stroke="#9090a0" stroke-width="0.7" fill="none"/>
<path d="M123,384 L123,392 M121.5,385.5 L124.5,390.5 M124.5,385.5 L121.5,390.5" stroke="#9090a0" stroke-width="0.7" fill="none"/>
<path d="M70,392 C72,395 75,394 76,392 M85,399 C87,402 90,401 91,399 M102,404 C103,407 106,407 107,404 M112,404.3 C113,407.3 116,407.3 117,404.3 M122,404.3 C123,407.3 126,407.3 127,404.3 M132,404 C133,407 136,407 137,404 M158,398 C160,401 163,400 164,398 M174,390 C176,393 179,392 180,390" stroke="#c0c0c0" stroke-width="0.6" fill="none"/><rect x="124.0" y="319.8" width="38.4" height="53.0" fill="#000"/>
<line x1="124.0" y1="320.3" x2="163.7" y2="320.3" stroke="#60d060" stroke-width="1.0"/>
<line x1="124.2" y1="320.3" x2="124.2" y2="372.2" stroke="#40c040" stroke-width="1.1"/>
<rect x="127.3" y="325.6" width="7.2" height="2.3" fill="#0a1ad0"/>
<rect x="135.1" y="325.6" width="4.6" height="2.3" fill="#0a1ad0"/>
<rect x="127.3" y="329.0" width="7.2" height="2.3" fill="#0a1ad0"/>
<rect x="135.1" y="329.0" width="4.6" height="2.3" fill="#0a1ad0"/>
<rect x="127.3" y="332.3" width="7.2" height="2.3" fill="#0a1ad0"/>
<rect x="135.1" y="332.3" width="4.6" height="2.3" fill="#0a1ad0"/>
<rect x="127.3" y="335.7" width="7.2" height="2.3" fill="#0a1ad0"/>
<rect x="135.1" y="335.7" width="4.6" height="2.3" fill="#0a1ad0"/>
<rect x="127.3" y="339.0" width="7.2" height="2.3" fill="#0a1ad0"/>
<rect x="135.1" y="339.0" width="4.6" height="2.3" fill="#0a1ad0"/>
<rect x="127.3" y="342.4" width="7.2" height="2.3" fill="#0a1ad0"/>
<rect x="135.1" y="342.4" width="4.6" height="2.3" fill="#0a1ad0"/>
<rect x="127.3" y="345.7" width="7.2" height="2.3" fill="#0a1ad0"/>
<rect x="135.1" y="345.7" width="4.6" height="2.3" fill="#0a1ad0"/>
<rect x="127.3" y="349.1" width="7.2" height="2.3" fill="#0a1ad0"/>
<rect x="135.1" y="349.1" width="4.6" height="2.3" fill="#0a1ad0"/>
<rect x="127.3" y="352.4" width="7.2" height="2.3" fill="#0a1ad0"/>
<rect x="135.1" y="352.4" width="4.6" height="2.3" fill="#0a1ad0"/>
<rect x="127.3" y="355.8" width="7.2" height="2.3" fill="#0a1ad0"/>
<rect x="135.1" y="355.8" width="4.6" height="2.3" fill="#0a1ad0"/>
<rect x="127.3" y="359.1" width="7.2" height="2.3" fill="#0a1ad0"/>
<rect x="135.1" y="359.1" width="4.6" height="2.3" fill="#0a1ad0"/>
<rect x="127.3" y="362.5" width="7.2" height="2.3" fill="#0a1ad0"/>
<rect x="135.1" y="362.5" width="4.6" height="2.3" fill="#0a1ad0"/>
<rect x="127.3" y="365.8" width="7.2" height="2.3" fill="#0a1ad0"/>
<rect x="135.1" y="365.8" width="4.6" height="2.3" fill="#0a1ad0"/>
<rect x="143.2" y="327.0" width="4.2" height="2.5" fill="#0814b8"/>
<rect x="148.2" y="327.0" width="4.2" height="2.5" fill="#0814b8"/>
<rect x="153.2" y="327.0" width="4.2" height="2.5" fill="#0814b8"/>
<rect x="158.2" y="327.0" width="4.0" height="2.5" fill="#0814b8"/>
<rect x="143.2" y="330.6" width="4.2" height="2.5" fill="#0814b8"/>
<rect x="148.2" y="330.6" width="4.2" height="2.5" fill="#0814b8"/>
<rect x="153.2" y="330.6" width="4.2" height="2.5" fill="#0814b8"/>
<rect x="158.2" y="330.6" width="4.0" height="2.5" fill="#0814b8"/>
<rect x="143.2" y="334.1" width="4.2" height="2.5" fill="#0814b8"/>
<rect x="148.2" y="334.1" width="4.2" height="2.5" fill="#0814b8"/>
<rect x="153.2" y="334.1" width="4.2" height="2.5" fill="#0814b8"/>
<rect x="158.2" y="334.1" width="4.0" height="2.5" fill="#0814b8"/>
<rect x="143.2" y="337.6" width="4.2" height="2.5" fill="#0814b8"/>
<rect x="148.2" y="337.6" width="4.2" height="2.5" fill="#0814b8"/>
<rect x="153.2" y="337.6" width="4.2" height="2.5" fill="#0814b8"/>
<rect x="158.2" y="337.6" width="4.0" height="2.5" fill="#0814b8"/>
<rect x="143.2" y="341.2" width="4.2" height="2.5" fill="#0814b8"/>
<rect x="148.2" y="341.2" width="4.2" height="2.5" fill="#0814b8"/>
<rect x="153.2" y="341.2" width="4.2" height="2.5" fill="#0814b8"/>
<rect x="158.2" y="341.2" width="4.0" height="2.5" fill="#0814b8"/>
<rect x="143.2" y="344.8" width="4.2" height="2.5" fill="#0814b8"/>
<rect x="148.2" y="344.8" width="4.2" height="2.5" fill="#0814b8"/>
<rect x="153.2" y="344.8" width="4.2" height="2.5" fill="#0814b8"/>
<rect x="158.2" y="344.8" width="4.0" height="2.5" fill="#0814b8"/>
<rect x="143.2" y="348.3" width="4.2" height="2.5" fill="#0814b8"/>
<rect x="148.2" y="348.3" width="4.2" height="2.5" fill="#0814b8"/>
<rect x="153.2" y="348.3" width="4.2" height="2.5" fill="#0814b8"/>
<rect x="158.2" y="348.3" width="4.0" height="2.5" fill="#0814b8"/>
<rect x="143.2" y="351.9" width="4.2" height="2.5" fill="#0814b8"/>
<rect x="148.2" y="351.9" width="4.2" height="2.5" fill="#0814b8"/>
<rect x="153.2" y="351.9" width="4.2" height="2.5" fill="#0814b8"/>
<rect x="158.2" y="351.9" width="4.0" height="2.5" fill="#0814b8"/>
<rect x="143.2" y="355.4" width="4.2" height="2.5" fill="#0814b8"/>
<rect x="148.2" y="355.4" width="4.2" height="2.5" fill="#0814b8"/>
<rect x="153.2" y="355.4" width="4.2" height="2.5" fill="#0814b8"/>
<rect x="158.2" y="355.4" width="4.0" height="2.5" fill="#0814b8"/>
<rect x="143.2" y="358.9" width="4.2" height="2.5" fill="#0814b8"/>
<rect x="148.2" y="358.9" width="4.2" height="2.5" fill="#0814b8"/>
<rect x="153.2" y="358.9" width="4.2" height="2.5" fill="#0814b8"/>
<rect x="158.2" y="358.9" width="4.0" height="2.5" fill="#0814b8"/>
<rect x="143.2" y="362.5" width="4.2" height="2.5" fill="#0814b8"/>
<rect x="148.2" y="362.5" width="4.2" height="2.5" fill="#0814b8"/>
<rect x="153.2" y="362.5" width="4.2" height="2.5" fill="#0814b8"/>
<rect x="158.2" y="362.5" width="4.0" height="2.5" fill="#0814b8"/>
<rect x="143.2" y="366.1" width="4.2" height="2.5" fill="#0814b8"/>
<rect x="148.2" y="366.1" width="4.2" height="2.5" fill="#0814b8"/>
<rect x="153.2" y="366.1" width="4.2" height="2.5" fill="#0814b8"/>
<rect x="158.2" y="366.1" width="4.0" height="2.5" fill="#0814b8"/>
<rect x="143.0" y="323.6" width="16.8" height="2.6" fill="#1a50e0"/>
<rect x="147.0" y="324.0" width="4.0" height="1.2" fill="#c0ffff"/>
<path d="M143.8,333.8 C147,329.8 150,330 152.4,332.8 C155,335.8 157.5,335.6 159.6,332" stroke="#50e8d0" stroke-width="1.2" fill="none"/>
<path d="M143.8,355 C147,351 150,351.2 152.4,354 C155,357 157.5,356.8 159.6,353.2" stroke="#50e8d0" stroke-width="1.2" fill="none"/>
<rect x="139.8" y="341.0" width="2.4" height="1.4" fill="#eee"/>
<rect x="108.8" y="338.8" width="14.3" height="10.0" fill="#062020" stroke="#d8d8d8" stroke-width="0.6"/>
<rect x="109.5" y="339.5" width="3.8" height="3.8" fill="#10a0a0" opacity="0.8"/>
<rect x="114.1" y="339.5" width="3.8" height="3.8" fill="#10a0a0" opacity="0.8"/>
<rect x="118.7" y="339.5" width="3.8" height="3.8" fill="#10a0a0" opacity="0.8"/>
<rect x="109.5" y="344.1" width="3.8" height="3.8" fill="#10a0a0" opacity="0.8"/>
<rect x="114.1" y="344.1" width="3.8" height="3.8" fill="#10a0a0" opacity="0.8"/>
<rect x="118.7" y="344.1" width="3.8" height="3.8" fill="#10a0a0" opacity="0.8"/></g><g transform="translate(560,0)"><mask id="bm2" maskUnits="userSpaceOnUse" x="0" y="77" width="240" height="411"><rect x="0" y="77" width="240" height="411" fill="#fff"/><path d="M78,180.7 L164.9,180.9 Q190,205 204.8,240.8 L204.8,359.6 C197,370 190,377 182.2,383.4 C172,391 160,397 150,401.6 C140,403.5 132,404.3 124.2,404.3 L114,404.3 C104,404.2 93,403 83.2,400.2 C76,399 70,395 63.5,389.8 L48.4,374.2 L34,353 L34,222 C34,215 35,211 38,206 C44,197 55,193 66.5,190.6 Z" fill="#000"/></mask>
<g mask="url(#bm2)">
<line x1="34.0" y1="170.0" x2="34.0" y2="385.0" stroke="#700a0a" stroke-width="1.2"/>
<line x1="44.0" y1="170.0" x2="44.0" y2="385.0" stroke="#700a0a" stroke-width="1.2"/>
<line x1="64.0" y1="170.0" x2="64.0" y2="385.0" stroke="#700a0a" stroke-width="1.2"/>
<line x1="84.0" y1="170.0" x2="84.0" y2="385.0" stroke="#700a0a" stroke-width="1.2"/>
<line x1="104.0" y1="170.0" x2="104.0" y2="385.0" stroke="#700a0a" stroke-width="1.2"/>
<line x1="124.0" y1="170.0" x2="124.0" y2="385.0" stroke="#700a0a" stroke-width="1.2"/>
<line x1="145.0" y1="170.0" x2="145.0" y2="385.0" stroke="#700a0a" stroke-width="1.2"/>
<line x1="165.0" y1="170.0" x2="165.0" y2="385.0" stroke="#700a0a" stroke-width="1.2"/>
<line x1="185.0" y1="170.0" x2="185.0" y2="385.0" stroke="#700a0a" stroke-width="1.2"/>
<line x1="205.0" y1="170.0" x2="205.0" y2="385.0" stroke="#700a0a" stroke-width="1.2"/>
<line x1="34.0" y1="414.0" x2="34.0" y2="417.0" stroke="#700a0a" stroke-width="1.0"/>
<line x1="44.0" y1="414.0" x2="44.0" y2="417.0" stroke="#700a0a" stroke-width="1.0"/>
<line x1="64.0" y1="414.0" x2="64.0" y2="417.0" stroke="#700a0a" stroke-width="1.0"/>
<line x1="84.0" y1="414.0" x2="84.0" y2="417.0" stroke="#700a0a" stroke-width="1.0"/>
<line x1="104.0" y1="414.0" x2="104.0" y2="417.0" stroke="#700a0a" stroke-width="1.0"/>
<line x1="124.0" y1="414.0" x2="124.0" y2="417.0" stroke="#700a0a" stroke-width="1.0"/>
<line x1="145.0" y1="414.0" x2="145.0" y2="417.0" stroke="#700a0a" stroke-width="1.0"/>
<line x1="165.0" y1="414.0" x2="165.0" y2="417.0" stroke="#700a0a" stroke-width="1.0"/>
<line x1="185.0" y1="414.0" x2="185.0" y2="417.0" stroke="#700a0a" stroke-width="1.0"/>
<line x1="205.0" y1="414.0" x2="205.0" y2="417.0" stroke="#700a0a" stroke-width="1.0"/>
<line x1="23.0" y1="181.0" x2="214.0" y2="181.0" stroke="#700a0a" stroke-width="1.2"/>
<line x1="23.0" y1="193.0" x2="214.0" y2="193.0" stroke="#700a0a" stroke-width="1.2"/>
<line x1="23.0" y1="213.0" x2="214.0" y2="213.0" stroke="#700a0a" stroke-width="1.2"/>
<line x1="23.0" y1="233.0" x2="214.0" y2="233.0" stroke="#700a0a" stroke-width="1.2"/>
<line x1="23.0" y1="253.0" x2="214.0" y2="253.0" stroke="#700a0a" stroke-width="1.2"/>
<line x1="23.0" y1="273.0" x2="214.0" y2="273.0" stroke="#700a0a" stroke-width="1.2"/>
<line x1="23.0" y1="293.0" x2="214.0" y2="293.0" stroke="#700a0a" stroke-width="1.2"/>
<line x1="23.0" y1="313.0" x2="214.0" y2="313.0" stroke="#700a0a" stroke-width="1.2"/>
<line x1="23.0" y1="333.0" x2="214.0" y2="333.0" stroke="#700a0a" stroke-width="1.2"/>
<line x1="23.0" y1="354.0" x2="214.0" y2="354.0" stroke="#700a0a" stroke-width="1.2"/>
<line x1="23.0" y1="374.0" x2="214.0" y2="374.0" stroke="#700a0a" stroke-width="1.2"/>
<line x1="23.0" y1="394.0" x2="214.0" y2="394.0" stroke="#700a0a" stroke-width="1.2"/>
<line x1="23.0" y1="406.0" x2="32.0" y2="406.0" stroke="#700a0a" stroke-width="1.0"/>
<line x1="210.0" y1="406.0" x2="214.0" y2="406.0" stroke="#700a0a" stroke-width="1.0"/>
</g>
<circle cx="34.0" cy="168.2" r="2.0" stroke="#951212" stroke-width="0.9" fill="#420606"/>
<circle cx="34.0" cy="418.6" r="2.0" stroke="#951212" stroke-width="0.9" fill="#420606"/>
<circle cx="44.0" cy="168.2" r="2.0" stroke="#951212" stroke-width="0.9" fill="#420606"/>
<circle cx="44.0" cy="418.6" r="2.0" stroke="#951212" stroke-width="0.9" fill="#420606"/>
<circle cx="64.0" cy="168.2" r="2.0" stroke="#951212" stroke-width="0.9" fill="#420606"/>
<circle cx="64.0" cy="418.6" r="2.0" stroke="#951212" stroke-width="0.9" fill="#420606"/>
<circle cx="84.0" cy="168.2" r="2.0" stroke="#951212" stroke-width="0.9" fill="#420606"/>
<circle cx="84.0" cy="418.6" r="2.0" stroke="#951212" stroke-width="0.9" fill="#420606"/>
<circle cx="104.0" cy="168.2" r="2.0" stroke="#951212" stroke-width="0.9" fill="#420606"/>
<circle cx="104.0" cy="418.6" r="2.0" stroke="#951212" stroke-width="0.9" fill="#420606"/>
<circle cx="124.0" cy="168.2" r="2.0" stroke="#951212" stroke-width="0.9" fill="#420606"/>
<circle cx="124.0" cy="418.6" r="2.0" stroke="#951212" stroke-width="0.9" fill="#420606"/>
<circle cx="145.0" cy="168.2" r="2.0" stroke="#951212" stroke-width="0.9" fill="#420606"/>
<circle cx="145.0" cy="418.6" r="2.0" stroke="#951212" stroke-width="0.9" fill="#420606"/>
<circle cx="165.0" cy="168.2" r="2.0" stroke="#951212" stroke-width="0.9" fill="#420606"/>
<circle cx="165.0" cy="418.6" r="2.0" stroke="#951212" stroke-width="0.9" fill="#420606"/>
<circle cx="185.0" cy="168.2" r="2.0" stroke="#951212" stroke-width="0.9" fill="#420606"/>
<circle cx="185.0" cy="418.6" r="2.0" stroke="#951212" stroke-width="0.9" fill="#420606"/>
<circle cx="205.0" cy="168.2" r="2.0" stroke="#951212" stroke-width="0.9" fill="#420606"/>
<circle cx="205.0" cy="418.6" r="2.0" stroke="#951212" stroke-width="0.9" fill="#420606"/>
<circle cx="21.0" cy="181.0" r="2.0" stroke="#951212" stroke-width="0.9" fill="#420606"/>
<circle cx="216.2" cy="181.0" r="2.0" stroke="#951212" stroke-width="0.9" fill="#420606"/>
<circle cx="21.0" cy="193.0" r="2.0" stroke="#951212" stroke-width="0.9" fill="#420606"/>
<circle cx="216.2" cy="193.0" r="2.0" stroke="#951212" stroke-width="0.9" fill="#420606"/>
<circle cx="21.0" cy="213.0" r="2.0" stroke="#951212" stroke-width="0.9" fill="#420606"/>
<circle cx="216.2" cy="213.0" r="2.0" stroke="#951212" stroke-width="0.9" fill="#420606"/>
<circle cx="21.0" cy="233.0" r="2.0" stroke="#951212" stroke-width="0.9" fill="#420606"/>
<circle cx="216.2" cy="233.0" r="2.0" stroke="#951212" stroke-width="0.9" fill="#420606"/>
<circle cx="21.0" cy="253.0" r="2.0" stroke="#951212" stroke-width="0.9" fill="#420606"/>
<circle cx="216.2" cy="253.0" r="2.0" stroke="#951212" stroke-width="0.9" fill="#420606"/>
<circle cx="21.0" cy="273.0" r="2.0" stroke="#951212" stroke-width="0.9" fill="#420606"/>
<circle cx="216.2" cy="273.0" r="2.0" stroke="#951212" stroke-width="0.9" fill="#420606"/>
<circle cx="21.0" cy="293.0" r="2.0" stroke="#951212" stroke-width="0.9" fill="#420606"/>
<circle cx="216.2" cy="293.0" r="2.0" stroke="#951212" stroke-width="0.9" fill="#420606"/>
<circle cx="21.0" cy="313.0" r="2.0" stroke="#951212" stroke-width="0.9" fill="#420606"/>
<circle cx="216.2" cy="313.0" r="2.0" stroke="#951212" stroke-width="0.9" fill="#420606"/>
<circle cx="21.0" cy="333.0" r="2.0" stroke="#951212" stroke-width="0.9" fill="#420606"/>
<circle cx="216.2" cy="333.0" r="2.0" stroke="#951212" stroke-width="0.9" fill="#420606"/>
<circle cx="21.0" cy="354.0" r="2.0" stroke="#951212" stroke-width="0.9" fill="#420606"/>
<circle cx="216.2" cy="354.0" r="2.0" stroke="#951212" stroke-width="0.9" fill="#420606"/>
<circle cx="21.0" cy="374.0" r="2.0" stroke="#951212" stroke-width="0.9" fill="#420606"/>
<circle cx="216.2" cy="374.0" r="2.0" stroke="#951212" stroke-width="0.9" fill="#420606"/>
<circle cx="21.0" cy="394.0" r="2.0" stroke="#951212" stroke-width="0.9" fill="#420606"/>
<circle cx="216.2" cy="394.0" r="2.0" stroke="#951212" stroke-width="0.9" fill="#420606"/>
<circle cx="21.0" cy="406.0" r="2.0" stroke="#951212" stroke-width="0.9" fill="#420606"/>
<circle cx="216.2" cy="406.0" r="2.0" stroke="#951212" stroke-width="0.9" fill="#420606"/>
<circle cx="216.6" cy="159.7" r="4.0" stroke="#951212" stroke-width="0.8" fill="none"/>
<path d="M181,185.6 L183.7,188.3 L181,191 L178.3,188.3 Z" stroke="#951212" stroke-width="0.7" fill="none"/>
<line x1="216.6" y1="155.0" x2="216.6" y2="164.0" stroke="#951212" stroke-width="0.8"/>
<path d="M214.6,161 L216.6,155.5 L218.6,161" stroke="#951212" stroke-width="0.7" fill="none"/>
<line x1="33.0" y1="172.6" x2="205.5" y2="172.6" stroke="#c8c8c8" stroke-width="0.7"/>
<line x1="33.0" y1="175.2" x2="205.5" y2="175.2" stroke="#c8c8c8" stroke-width="0.7"/>
<line x1="33.0" y1="411.0" x2="205.5" y2="411.0" stroke="#c8c8c8" stroke-width="0.7"/>
<line x1="33.0" y1="413.8" x2="205.5" y2="413.8" stroke="#c8c8c8" stroke-width="0.7"/>
<line x1="25.6" y1="181.0" x2="25.6" y2="407.0" stroke="#c0c0c0" stroke-width="0.7"/>
<line x1="28.8" y1="181.0" x2="28.8" y2="407.0" stroke="#c0c0c0" stroke-width="0.7"/>
<line x1="207.8" y1="180.5" x2="207.8" y2="407.5" stroke="#c8c8c8" stroke-width="0.8"/>
<line x1="211.6" y1="180.5" x2="211.6" y2="407.5" stroke="#a8a8a8" stroke-width="0.7"/>
<rect x="37.5" y="173.7" width="3.0" height="1.0" fill="#a8a8a8"/>
<rect x="37.5" y="411.9" width="3.0" height="1.0" fill="#a8a8a8"/>
<rect x="52.5" y="173.7" width="3.0" height="1.0" fill="#a8a8a8"/>
<rect x="52.5" y="411.9" width="3.0" height="1.0" fill="#a8a8a8"/>
<rect x="72.5" y="173.7" width="3.0" height="1.0" fill="#a8a8a8"/>
<rect x="72.5" y="411.9" width="3.0" height="1.0" fill="#a8a8a8"/>
<rect x="92.5" y="173.7" width="3.0" height="1.0" fill="#a8a8a8"/>
<rect x="92.5" y="411.9" width="3.0" height="1.0" fill="#a8a8a8"/>
<rect x="112.5" y="173.7" width="3.0" height="1.0" fill="#a8a8a8"/>
<rect x="112.5" y="411.9" width="3.0" height="1.0" fill="#a8a8a8"/>
<rect x="133.0" y="173.7" width="3.0" height="1.0" fill="#a8a8a8"/>
<rect x="133.0" y="411.9" width="3.0" height="1.0" fill="#a8a8a8"/>
<rect x="153.5" y="173.7" width="3.0" height="1.0" fill="#a8a8a8"/>
<rect x="153.5" y="411.9" width="3.0" height="1.0" fill="#a8a8a8"/>
<rect x="173.5" y="173.7" width="3.0" height="1.0" fill="#a8a8a8"/>
<rect x="173.5" y="411.9" width="3.0" height="1.0" fill="#a8a8a8"/>
<rect x="193.5" y="173.7" width="3.0" height="1.0" fill="#a8a8a8"/>
<rect x="193.5" y="411.9" width="3.0" height="1.0" fill="#a8a8a8"/>
<rect x="33.5" y="172.4" width="1.0" height="3.0" fill="#b8b8b8"/>
<rect x="33.5" y="410.8" width="1.0" height="3.0" fill="#b8b8b8"/>
<rect x="43.5" y="172.4" width="1.0" height="3.0" fill="#b8b8b8"/>
<rect x="43.5" y="410.8" width="1.0" height="3.0" fill="#b8b8b8"/>
<rect x="63.5" y="172.4" width="1.0" height="3.0" fill="#b8b8b8"/>
<rect x="63.5" y="410.8" width="1.0" height="3.0" fill="#b8b8b8"/>
<rect x="83.5" y="172.4" width="1.0" height="3.0" fill="#b8b8b8"/>
<rect x="83.5" y="410.8" width="1.0" height="3.0" fill="#b8b8b8"/>
<rect x="103.5" y="172.4" width="1.0" height="3.0" fill="#b8b8b8"/>
<rect x="103.5" y="410.8" width="1.0" height="3.0" fill="#b8b8b8"/>
<rect x="123.5" y="172.4" width="1.0" height="3.0" fill="#b8b8b8"/>
<rect x="123.5" y="410.8" width="1.0" height="3.0" fill="#b8b8b8"/>
<rect x="144.5" y="172.4" width="1.0" height="3.0" fill="#b8b8b8"/>
<rect x="144.5" y="410.8" width="1.0" height="3.0" fill="#b8b8b8"/>
<rect x="164.5" y="172.4" width="1.0" height="3.0" fill="#b8b8b8"/>
<rect x="164.5" y="410.8" width="1.0" height="3.0" fill="#b8b8b8"/>
<rect x="184.5" y="172.4" width="1.0" height="3.0" fill="#b8b8b8"/>
<rect x="184.5" y="410.8" width="1.0" height="3.0" fill="#b8b8b8"/>
<rect x="204.5" y="172.4" width="1.0" height="3.0" fill="#b8b8b8"/>
<rect x="204.5" y="410.8" width="1.0" height="3.0" fill="#b8b8b8"/>
<rect x="26.7" y="185.8" width="1.0" height="2.4" fill="#a0a0a0"/>
<rect x="208.9" y="185.8" width="1.0" height="2.4" fill="#a0a0a0"/>
<rect x="26.7" y="201.8" width="1.0" height="2.4" fill="#a0a0a0"/>
<rect x="208.9" y="201.8" width="1.0" height="2.4" fill="#a0a0a0"/>
<rect x="26.7" y="221.8" width="1.0" height="2.4" fill="#a0a0a0"/>
<rect x="208.9" y="221.8" width="1.0" height="2.4" fill="#a0a0a0"/>
<rect x="26.7" y="241.8" width="1.0" height="2.4" fill="#a0a0a0"/>
<rect x="208.9" y="241.8" width="1.0" height="2.4" fill="#a0a0a0"/>
<rect x="26.7" y="261.8" width="1.0" height="2.4" fill="#a0a0a0"/>
<rect x="208.9" y="261.8" width="1.0" height="2.4" fill="#a0a0a0"/>
<rect x="26.7" y="281.8" width="1.0" height="2.4" fill="#a0a0a0"/>
<rect x="208.9" y="281.8" width="1.0" height="2.4" fill="#a0a0a0"/>
<rect x="26.7" y="301.8" width="1.0" height="2.4" fill="#a0a0a0"/>
<rect x="208.9" y="301.8" width="1.0" height="2.4" fill="#a0a0a0"/>
<rect x="26.7" y="321.8" width="1.0" height="2.4" fill="#a0a0a0"/>
<rect x="208.9" y="321.8" width="1.0" height="2.4" fill="#a0a0a0"/>
<rect x="26.7" y="342.3" width="1.0" height="2.4" fill="#a0a0a0"/>
<rect x="208.9" y="342.3" width="1.0" height="2.4" fill="#a0a0a0"/>
<rect x="26.7" y="362.8" width="1.0" height="2.4" fill="#a0a0a0"/>
<rect x="208.9" y="362.8" width="1.0" height="2.4" fill="#a0a0a0"/>
<rect x="26.7" y="382.8" width="1.0" height="2.4" fill="#a0a0a0"/>
<rect x="208.9" y="382.8" width="1.0" height="2.4" fill="#a0a0a0"/>
<rect x="26.7" y="398.8" width="1.0" height="2.4" fill="#a0a0a0"/>
<rect x="208.9" y="398.8" width="1.0" height="2.4" fill="#a0a0a0"/>
<path d="M78,180.7 L164.9,180.9 Q190,205 204.8,240.8 L204.8,359.6 C197,370 190,377 182.2,383.4 C172,391 160,397 150,401.6 C140,403.5 132,404.3 124.2,404.3 L114,404.3 C104,404.2 93,403 83.2,400.2 C76,399 70,395 63.5,389.8 L48.4,374.2" stroke="#d8d8d8" stroke-width="0.9" fill="none"/>
<path d="M78,180.7 L66.5,190.6 C55,193 44,197 38,206 C35,211 34,215 34,222 L34,353" stroke="#d8d8d8" stroke-width="0.9" fill="none"/>
<path d="M68,202.3 C58,202.5 48,207 45,215 C44,218 44,221 44,225 L44,295" stroke="#d8d8d8" stroke-width="0.9" fill="none" opacity="0.85"/>
<path d="M128,198.5 L65,198.5 C50,199 40,210 38.7,225 L38.7,290 C39,300 45,305.8 55,305.8 L112,305.8 C116,305.8 117.5,303 117.5,298 L117.5,212 C117.5,205 114,199.5 110,199.5" stroke="#1c9a2a" stroke-width="0.9" fill="none"/>
<path d="M68,207.2 C58,207.5 50,215 49,229.6 L49,296 C49,302 53,305.8 58,305.8" stroke="#1c9a2a" stroke-width="0.9" fill="none"/>
<rect x="34.5" y="300.0" width="3.0" height="4.5" fill="none" stroke="#9c8a5a" stroke-width="0.7"/>
<rect x="37.0" y="306.2" width="10.0" height="1.4" fill="#40c040" opacity="0.8"/>
<rect x="41.0" y="305.6" width="4.0" height="1.0" fill="#d03020"/>
<line x1="63.0" y1="312.5" x2="63.0" y2="319.0" stroke="#30d0d0" stroke-width="1.4"/>
<line x1="84.0" y1="312.5" x2="84.0" y2="323.0" stroke="#d8d8c8" stroke-width="0.9"/>
<path d="M70.6,208 C74,202 82,199.5 93,199.5" stroke="#1c9a2a" stroke-width="0.8" fill="none"/>
<path d="M75.5,300 L75.5,213 C76,205 80,200 86,199.5" stroke="#1c9a2a" stroke-width="0.8" fill="none"/>
<path d="M75.5,290 C76,300 80,305.8 88.8,305.8" stroke="#1c9a2a" stroke-width="0.8" fill="none"/>
<path d="M125,199.5 C120,201 117.5,206 117.5,212" stroke="#1c9a2a" stroke-width="0.8" fill="none"/>
<line x1="128.0" y1="199.5" x2="162.0" y2="199.5" stroke="#1c9a2a" stroke-width="0.9"/>
<line x1="30.0" y1="253.3" x2="56.6" y2="263.8" stroke="#3ab04a" stroke-width="0.8"/>
<line x1="36.0" y1="249.0" x2="62.0" y2="259.5" stroke="#3ab04a" stroke-width="0.8"/>
<line x1="76.9" y1="193.4" x2="143.2" y2="193.4" stroke="#9c8a5a" stroke-width="0.8"/>
<line x1="76.9" y1="183.4" x2="76.9" y2="193.4" stroke="#9c8a5a" stroke-width="0.7"/>
<rect x="75.5" y="183.0" width="2.8" height="1.8" fill="#8a8070"/>
<line x1="83.5" y1="183.4" x2="83.5" y2="193.4" stroke="#9c8a5a" stroke-width="0.7"/>
<rect x="82.1" y="183.0" width="2.8" height="1.8" fill="#8a8070"/>
<line x1="90.2" y1="183.4" x2="90.2" y2="193.4" stroke="#9c8a5a" stroke-width="0.7"/>
<rect x="88.8" y="183.0" width="2.8" height="1.8" fill="#8a8070"/>
<line x1="96.8" y1="183.4" x2="96.8" y2="193.4" stroke="#9c8a5a" stroke-width="0.7"/>
<rect x="95.4" y="183.0" width="2.8" height="1.8" fill="#8a8070"/>
<line x1="103.4" y1="183.4" x2="103.4" y2="193.4" stroke="#9c8a5a" stroke-width="0.7"/>
<rect x="102.0" y="183.0" width="2.8" height="1.8" fill="#8a8070"/>
<line x1="110.1" y1="183.4" x2="110.1" y2="193.4" stroke="#9c8a5a" stroke-width="0.7"/>
<rect x="108.7" y="183.0" width="2.8" height="1.8" fill="#8a8070"/>
<line x1="116.7" y1="183.4" x2="116.7" y2="193.4" stroke="#9c8a5a" stroke-width="0.7"/>
<rect x="115.3" y="183.0" width="2.8" height="1.8" fill="#8a8070"/>
<line x1="123.3" y1="183.4" x2="123.3" y2="193.4" stroke="#9c8a5a" stroke-width="0.7"/>
<rect x="121.9" y="183.0" width="2.8" height="1.8" fill="#8a8070"/>
<line x1="129.9" y1="183.4" x2="129.9" y2="193.4" stroke="#9c8a5a" stroke-width="0.7"/>
<rect x="128.5" y="183.0" width="2.8" height="1.8" fill="#8a8070"/>
<line x1="136.6" y1="183.4" x2="136.6" y2="193.4" stroke="#9c8a5a" stroke-width="0.7"/>
<rect x="135.2" y="183.0" width="2.8" height="1.8" fill="#8a8070"/>
<line x1="143.2" y1="183.4" x2="143.2" y2="193.4" stroke="#9c8a5a" stroke-width="0.7"/>
<rect x="141.8" y="183.0" width="2.8" height="1.8" fill="#8a8070"/>
<rect x="82.6" y="192.4" width="2.0" height="1.8" fill="#e8e8e8"/>
<rect x="102.9" y="192.4" width="2.0" height="1.8" fill="#e8e8e8"/>
<rect x="123.1" y="192.4" width="2.0" height="1.8" fill="#e8e8e8"/>
<path d="M71,187 L74,184.5 L77,187.5 L74,190 Z" stroke="#a0a090" stroke-width="0.6" fill="none"/>
<rect x="92.0" y="198.2" width="1.6" height="1.6" fill="#22d040"/>
<rect x="138.0" y="198.2" width="1.6" height="1.6" fill="#22d040"/>
<line x1="68.5" y1="190.0" x2="68.5" y2="240.0" stroke="#9c8a5a" stroke-width="0.8"/>
<rect x="84.4" y="207.0" width="25.4" height="93.2" fill="none" stroke="#9c8a5a" stroke-width="0.7"/>
<line x1="84.4" y1="207.0" x2="109.8" y2="207.0" stroke="#9c8a5a" stroke-width="0.7"/>
<rect x="93.4" y="205.9" width="1.6" height="2.2" fill="#8a8060"/>
<rect x="98.8" y="205.9" width="1.6" height="2.2" fill="#8a8060"/>
<line x1="84.4" y1="213.2" x2="109.8" y2="213.2" stroke="#9c8a5a" stroke-width="0.7"/>
<rect x="93.4" y="212.1" width="1.6" height="2.2" fill="#8a8060"/>
<rect x="98.8" y="212.1" width="1.6" height="2.2" fill="#8a8060"/>
<line x1="84.4" y1="219.4" x2="109.8" y2="219.4" stroke="#9c8a5a" stroke-width="0.7"/>
<rect x="93.4" y="218.3" width="1.6" height="2.2" fill="#8a8060"/>
<rect x="98.8" y="218.3" width="1.6" height="2.2" fill="#8a8060"/>
<line x1="84.4" y1="225.6" x2="109.8" y2="225.6" stroke="#9c8a5a" stroke-width="0.7"/>
<rect x="93.4" y="224.5" width="1.6" height="2.2" fill="#8a8060"/>
<rect x="98.8" y="224.5" width="1.6" height="2.2" fill="#8a8060"/>
<line x1="84.4" y1="231.8" x2="109.8" y2="231.8" stroke="#9c8a5a" stroke-width="0.7"/>
<rect x="93.4" y="230.7" width="1.6" height="2.2" fill="#8a8060"/>
<rect x="98.8" y="230.7" width="1.6" height="2.2" fill="#8a8060"/>
<line x1="84.4" y1="238.0" x2="109.8" y2="238.0" stroke="#9c8a5a" stroke-width="0.7"/>
<rect x="93.4" y="236.9" width="1.6" height="2.2" fill="#8a8060"/>
<rect x="98.8" y="236.9" width="1.6" height="2.2" fill="#8a8060"/>
<line x1="84.4" y1="244.2" x2="109.8" y2="244.2" stroke="#9c8a5a" stroke-width="0.7"/>
<rect x="93.4" y="243.1" width="1.6" height="2.2" fill="#8a8060"/>
<rect x="98.8" y="243.1" width="1.6" height="2.2" fill="#8a8060"/>
<line x1="84.4" y1="250.4" x2="109.8" y2="250.4" stroke="#9c8a5a" stroke-width="0.7"/>
<rect x="93.4" y="249.3" width="1.6" height="2.2" fill="#8a8060"/>
<rect x="98.8" y="249.3" width="1.6" height="2.2" fill="#8a8060"/>
<line x1="84.4" y1="256.6" x2="109.8" y2="256.6" stroke="#9c8a5a" stroke-width="0.7"/>
<rect x="93.4" y="255.5" width="1.6" height="2.2" fill="#8a8060"/>
<rect x="98.8" y="255.5" width="1.6" height="2.2" fill="#8a8060"/>
<line x1="84.4" y1="262.8" x2="109.8" y2="262.8" stroke="#9c8a5a" stroke-width="0.7"/>
<rect x="93.4" y="261.7" width="1.6" height="2.2" fill="#8a8060"/>
<rect x="98.8" y="261.7" width="1.6" height="2.2" fill="#8a8060"/>
<line x1="84.4" y1="269.0" x2="109.8" y2="269.0" stroke="#9c8a5a" stroke-width="0.7"/>
<rect x="93.4" y="267.9" width="1.6" height="2.2" fill="#8a8060"/>
<rect x="98.8" y="267.9" width="1.6" height="2.2" fill="#8a8060"/>
<line x1="84.4" y1="275.2" x2="109.8" y2="275.2" stroke="#9c8a5a" stroke-width="0.7"/>
<rect x="93.4" y="274.1" width="1.6" height="2.2" fill="#8a8060"/>
<rect x="98.8" y="274.1" width="1.6" height="2.2" fill="#8a8060"/>
<line x1="84.4" y1="281.4" x2="109.8" y2="281.4" stroke="#9c8a5a" stroke-width="0.7"/>
<rect x="93.4" y="280.3" width="1.6" height="2.2" fill="#8a8060"/>
<rect x="98.8" y="280.3" width="1.6" height="2.2" fill="#8a8060"/>
<line x1="84.4" y1="287.6" x2="109.8" y2="287.6" stroke="#9c8a5a" stroke-width="0.7"/>
<rect x="93.4" y="286.5" width="1.6" height="2.2" fill="#8a8060"/>
<rect x="98.8" y="286.5" width="1.6" height="2.2" fill="#8a8060"/>
<line x1="84.4" y1="293.8" x2="109.8" y2="293.8" stroke="#9c8a5a" stroke-width="0.7"/>
<rect x="93.4" y="292.7" width="1.6" height="2.2" fill="#8a8060"/>
<rect x="98.8" y="292.7" width="1.6" height="2.2" fill="#8a8060"/>
<line x1="84.4" y1="300.0" x2="109.8" y2="300.0" stroke="#9c8a5a" stroke-width="0.7"/>
<rect x="93.4" y="298.9" width="1.6" height="2.2" fill="#8a8060"/>
<rect x="98.8" y="298.9" width="1.6" height="2.2" fill="#8a8060"/>
<line x1="97.2" y1="207.0" x2="97.2" y2="300.2" stroke="#9c8a5a" stroke-width="0.8"/>
<rect x="83.0" y="212.0" width="2.8" height="2.0" fill="#e8e8e8"/>
<rect x="103.0" y="212.0" width="2.8" height="2.0" fill="#e8e8e8"/>
<rect x="83.0" y="231.2" width="2.8" height="2.0" fill="#e8e8e8"/>
<rect x="103.0" y="231.2" width="2.8" height="2.0" fill="#e8e8e8"/>
<rect x="83.0" y="250.4" width="2.8" height="2.0" fill="#e8e8e8"/>
<rect x="103.0" y="250.4" width="2.8" height="2.0" fill="#e8e8e8"/>
<rect x="83.0" y="269.6" width="2.8" height="2.0" fill="#e8e8e8"/>
<rect x="103.0" y="269.6" width="2.8" height="2.0" fill="#e8e8e8"/>
<rect x="83.0" y="288.8" width="2.8" height="2.0" fill="#e8e8e8"/>
<rect x="103.0" y="288.8" width="2.8" height="2.0" fill="#e8e8e8"/>
<rect x="55.2" y="244.2" width="12.6" height="49.0" fill="none" stroke="#9c8a5a" stroke-width="0.7"/>
<line x1="55.2" y1="244.2" x2="67.8" y2="244.2" stroke="#9c8a5a" stroke-width="0.7"/>
<line x1="55.2" y1="250.7" x2="67.8" y2="250.7" stroke="#9c8a5a" stroke-width="0.7"/>
<line x1="55.2" y1="257.2" x2="67.8" y2="257.2" stroke="#9c8a5a" stroke-width="0.7"/>
<line x1="55.2" y1="263.7" x2="67.8" y2="263.7" stroke="#9c8a5a" stroke-width="0.7"/>
<line x1="55.2" y1="270.2" x2="67.8" y2="270.2" stroke="#9c8a5a" stroke-width="0.7"/>
<line x1="55.2" y1="276.7" x2="67.8" y2="276.7" stroke="#9c8a5a" stroke-width="0.7"/>
<line x1="55.2" y1="283.2" x2="67.8" y2="283.2" stroke="#9c8a5a" stroke-width="0.7"/>
<line x1="55.2" y1="289.7" x2="67.8" y2="289.7" stroke="#9c8a5a" stroke-width="0.7"/>
<rect x="63.0" y="252.3" width="2.6" height="2.0" fill="#e8e8e8"/>
<rect x="63.0" y="272.0" width="2.6" height="2.0" fill="#e8e8e8"/>
<rect x="63.0" y="292.2" width="2.6" height="2.0" fill="#e8e8e8"/>
<line x1="54.5" y1="222.0" x2="54.5" y2="295.3" stroke="#d8d8d8" stroke-width="0.8"/>
<line x1="33.5" y1="295.3" x2="54.5" y2="295.3" stroke="#9c8a5a" stroke-width="0.8"/>
<rect x="123.5" y="206.5" width="12.0" height="87.0" fill="none" stroke="#9c8a5a" stroke-width="0.7"/>
<line x1="123.5" y1="206.5" x2="135.5" y2="206.5" stroke="#9c8a5a" stroke-width="0.7"/>
<line x1="123.5" y1="213.1" x2="135.5" y2="213.1" stroke="#9c8a5a" stroke-width="0.7"/>
<line x1="123.5" y1="219.7" x2="135.5" y2="219.7" stroke="#9c8a5a" stroke-width="0.7"/>
<line x1="123.5" y1="226.3" x2="135.5" y2="226.3" stroke="#9c8a5a" stroke-width="0.7"/>
<line x1="123.5" y1="232.9" x2="135.5" y2="232.9" stroke="#9c8a5a" stroke-width="0.7"/>
<line x1="123.5" y1="239.5" x2="135.5" y2="239.5" stroke="#9c8a5a" stroke-width="0.7"/>
<line x1="123.5" y1="246.1" x2="135.5" y2="246.1" stroke="#9c8a5a" stroke-width="0.7"/>
<line x1="123.5" y1="252.7" x2="135.5" y2="252.7" stroke="#9c8a5a" stroke-width="0.7"/>
<line x1="123.5" y1="259.3" x2="135.5" y2="259.3" stroke="#9c8a5a" stroke-width="0.7"/>
<line x1="123.5" y1="265.9" x2="135.5" y2="265.9" stroke="#9c8a5a" stroke-width="0.7"/>
<line x1="123.5" y1="272.5" x2="135.5" y2="272.5" stroke="#9c8a5a" stroke-width="0.7"/>
<line x1="123.5" y1="279.1" x2="135.5" y2="279.1" stroke="#9c8a5a" stroke-width="0.7"/>
<line x1="123.5" y1="285.7" x2="135.5" y2="285.7" stroke="#9c8a5a" stroke-width="0.7"/>
<line x1="123.5" y1="292.3" x2="135.5" y2="292.3" stroke="#9c8a5a" stroke-width="0.7"/>
<rect x="122.0" y="252.3" width="2.6" height="2.0" fill="#e8e8e8"/>
<rect x="122.0" y="272.0" width="2.6" height="2.0" fill="#e8e8e8"/>
<rect x="122.0" y="292.2" width="2.6" height="2.0" fill="#e8e8e8"/>
<rect x="36.3" y="312.3" width="67.2" height="12.9" fill="none" stroke="#9c8a5a" stroke-width="0.7"/>
<line x1="36.3" y1="312.3" x2="36.3" y2="325.2" stroke="#9c8a5a" stroke-width="0.7"/>
<rect x="35.3" y="323.0" width="2.4" height="1.4" fill="#b09a60"/>
<line x1="43.0" y1="312.3" x2="43.0" y2="325.2" stroke="#9c8a5a" stroke-width="0.7"/>
<rect x="42.0" y="323.0" width="2.4" height="1.4" fill="#b09a60"/>
<line x1="49.7" y1="312.3" x2="49.7" y2="325.2" stroke="#9c8a5a" stroke-width="0.7"/>
<rect x="48.7" y="323.0" width="2.4" height="1.4" fill="#b09a60"/>
<line x1="56.4" y1="312.3" x2="56.4" y2="325.2" stroke="#9c8a5a" stroke-width="0.7"/>
<rect x="55.4" y="323.0" width="2.4" height="1.4" fill="#b09a60"/>
<line x1="63.1" y1="312.3" x2="63.1" y2="325.2" stroke="#9c8a5a" stroke-width="0.7"/>
<rect x="62.1" y="323.0" width="2.4" height="1.4" fill="#b09a60"/>
<line x1="69.8" y1="312.3" x2="69.8" y2="325.2" stroke="#9c8a5a" stroke-width="0.7"/>
<rect x="68.8" y="323.0" width="2.4" height="1.4" fill="#b09a60"/>
<line x1="76.5" y1="312.3" x2="76.5" y2="325.2" stroke="#9c8a5a" stroke-width="0.7"/>
<rect x="75.5" y="323.0" width="2.4" height="1.4" fill="#b09a60"/>
<line x1="83.2" y1="312.3" x2="83.2" y2="325.2" stroke="#9c8a5a" stroke-width="0.7"/>
<rect x="82.2" y="323.0" width="2.4" height="1.4" fill="#b09a60"/>
<line x1="89.9" y1="312.3" x2="89.9" y2="325.2" stroke="#9c8a5a" stroke-width="0.7"/>
<rect x="88.9" y="323.0" width="2.4" height="1.4" fill="#b09a60"/>
<line x1="96.6" y1="312.3" x2="96.6" y2="325.2" stroke="#9c8a5a" stroke-width="0.7"/>
<rect x="95.6" y="323.0" width="2.4" height="1.4" fill="#b09a60"/>
<line x1="103.3" y1="312.3" x2="103.3" y2="325.2" stroke="#9c8a5a" stroke-width="0.7"/>
<rect x="102.3" y="323.0" width="2.4" height="1.4" fill="#b09a60"/>
<path d="M54.5,222.6 L63.6,212.8 L71.3,212.8 L71.3,239.4 L54.5,239.4" stroke="#d8d8d8" stroke-width="0.8" fill="none"/>
<rect x="65.0" y="221.0" width="6.3" height="10.0" fill="#c010c0"/>
<rect x="64.0" y="231.0" width="7.0" height="6.0" fill="#0a0a90"/>
<rect x="64.5" y="214.0" width="5.0" height="2.0" fill="none" stroke="#b0b080" stroke-width="0.5"/>
<rect x="64.5" y="217.5" width="5.0" height="2.0" fill="none" stroke="#1c9a2a" stroke-width="0.5"/>
<rect x="124.0" y="213.0" width="21.0" height="20.5" fill="none" stroke="#d8d8d8" stroke-width="0.9"/>
<rect x="125.0" y="217.5" width="6.5" height="7.5" fill="#c010c0"/>
<rect x="131.5" y="221.5" width="7.5" height="5.5" fill="#9010a0"/>
<rect x="140.0" y="217.5" width="4.5" height="6.5" fill="#30c0c0"/>
<rect x="131.5" y="214.0" width="8.0" height="6.0" fill="#000010"/>
<rect x="133.0" y="214.5" width="6.0" height="1.5" fill="#1010a0"/>
<line x1="131.5" y1="213.0" x2="131.5" y2="227.0" stroke="#d8d8d8" stroke-width="0.6"/>
<line x1="139.5" y1="213.0" x2="139.5" y2="233.0" stroke="#d8d8d8" stroke-width="0.6"/>
<line x1="124.0" y1="227.5" x2="145.0" y2="227.5" stroke="#d8d8d8" stroke-width="0.6"/>
<rect x="125.5" y="229.0" width="5.0" height="2.0" fill="#20b060"/>
<rect x="133.0" y="229.0" width="5.0" height="1.6" fill="#30d0c0"/>
<rect x="145.0" y="206.5" width="19.0" height="7.0" fill="none" stroke="#3030c0" stroke-width="0.9"/>
<rect x="150.0" y="209.0" width="4.0" height="1.2" fill="#22d040"/>
<rect x="143.8" y="180.6" width="20.5" height="15.4" fill="none" stroke="#d8d8d8" stroke-width="0.9"/>
<line x1="144.5" y1="183.0" x2="144.5" y2="195.0" stroke="#10b0b0" stroke-width="0.8"/>
<rect x="148.0" y="188.0" width="2.0" height="1.5" fill="#ddd"/>
<line x1="164.4" y1="180.6" x2="164.4" y2="203.7" stroke="#d8d8d8" stroke-width="0.9"/>
<rect x="164.8" y="204.4" width="5.6" height="8.4" fill="none" stroke="#d8d8d8" stroke-width="0.8"/>
<rect x="166.5" y="207.0" width="2.5" height="2.0" fill="#e04040"/>
<rect x="161.0" y="202.0" width="3.0" height="4.0" fill="#1010a0"/>
<line x1="145.2" y1="212.8" x2="190.0" y2="212.8" stroke="#d8d8d8" stroke-width="0.9"/>
<rect x="124.0" y="206.5" width="16.0" height="6.5" fill="none" stroke="#9c8a5a" stroke-width="0.7"/>
<rect x="131.0" y="208.6" width="9.0" height="1.6" fill="#e0a030"/>
<rect x="149.4" y="214.9" width="35.4" height="32.5" fill="none" stroke="#d8d8d8" stroke-width="1.0"/>
<rect x="153.2" y="218.4" width="0.8" height="25.0" fill="#10b0b0"/>
<rect x="163.4" y="217.0" width="20.3" height="3.5" fill="none" stroke="#1c9a2a" stroke-width="0.8"/>
<rect x="156.5" y="233.0" width="6.0" height="1.5" fill="#22d040"/>
<rect x="156.5" y="240.0" width="3.0" height="1.0" fill="#22d040"/>
<rect x="164.0" y="234.0" width="2.2" height="2.2" fill="#eee"/>
<line x1="172.0" y1="221.0" x2="172.0" y2="238.0" stroke="#1b5a1b" stroke-width="0.6"/>
<rect x="155.0" y="243.6" width="22.0" height="1.3" fill="#10b0b0" opacity="0.7"/>
<path d="M183.7,223.3 L198,223.3" stroke="#d8d8d8" stroke-width="0.9" fill="none"/>
<rect x="183.7" y="223.3" width="14.0" height="10.0" fill="none" stroke="#d8d8d8" stroke-width="0.8"/>
<rect x="185.0" y="225.0" width="10.0" height="1.2" fill="#10b0b0"/>
<rect x="176.0" y="232.0" width="8.0" height="20.0" fill="none" stroke="#d8d8d8" stroke-width="0.8"/>
<line x1="176.0" y1="238.0" x2="176.0" y2="252.0" stroke="#22d040" stroke-width="0.7"/>
<rect x="189.3" y="233.0" width="15.4" height="10.0" fill="none" stroke="#d8d8d8" stroke-width="0.8"/>
<rect x="189.3" y="243.0" width="15.4" height="10.0" fill="none" stroke="#d8d8d8" stroke-width="0.8"/>
<rect x="194.0" y="237.0" width="4.0" height="1.0" fill="#eee"/>
<rect x="192.0" y="246.0" width="8.0" height="1.0" fill="#ccc"/>
<rect x="185.0" y="242.0" width="3.0" height="4.0" fill="#c010c0"/>
<line x1="137.5" y1="212.8" x2="137.5" y2="293.2" stroke="#d8d8d8" stroke-width="0.9"/>
<line x1="145.2" y1="212.8" x2="145.2" y2="252.0" stroke="#d8d8d8" stroke-width="0.9"/>
<rect x="138.2" y="252.6" width="20.3" height="29.4" fill="none" stroke="#d8d8d8" stroke-width="0.9"/>
<rect x="144.0" y="266.0" width="2.0" height="1.5" fill="#ddd"/>
<rect x="143.0" y="271.0" width="2.0" height="2.0" fill="#eee"/>
<rect x="147.3" y="287.0" width="11.2" height="6.2" fill="none" stroke="#d8d8d8" stroke-width="0.9"/>
<rect x="139.0" y="283.0" width="4.0" height="1.2" fill="#ddd"/>
<line x1="159.2" y1="245.0" x2="159.2" y2="293.2" stroke="#d8d8d8" stroke-width="0.9"/>
<line x1="123.0" y1="293.2" x2="186.0" y2="293.2" stroke="#d8d8d8" stroke-width="1.0"/>
<rect x="164.0" y="252.6" width="20.4" height="40.6" fill="none" stroke="#d8d8d8" stroke-width="0.9"/>
<line x1="164.0" y1="258.4" x2="184.4" y2="258.4" stroke="#d8d8d8" stroke-width="0.7"/>
<line x1="164.0" y1="266.2" x2="184.4" y2="266.2" stroke="#d8d8d8" stroke-width="0.7"/>
<line x1="164.0" y1="272.7" x2="184.4" y2="272.7" stroke="#d8d8d8" stroke-width="0.7"/>
<line x1="164.0" y1="279.2" x2="184.4" y2="279.2" stroke="#d8d8d8" stroke-width="0.7"/>
<line x1="174.0" y1="259.6" x2="174.0" y2="279.2" stroke="#d8d8d8" stroke-width="0.7"/>
<rect x="165.0" y="259.2" width="8.5" height="6.5" fill="#080860"/>
<rect x="174.5" y="259.2" width="9.0" height="6.5" fill="#080860"/>
<rect x="165.0" y="267.0" width="8.5" height="5.0" fill="#0a0a90"/>
<rect x="174.5" y="267.0" width="9.0" height="5.0" fill="#0a0a80"/>
<rect x="165.0" y="273.5" width="8.5" height="5.2" fill="#080870"/>
<rect x="174.5" y="273.5" width="9.0" height="5.2" fill="#0a0a90"/>
<rect x="166.0" y="261.0" width="4.0" height="4.0" fill="#1420d0"/>
<rect x="175.0" y="268.0" width="4.0" height="3.5" fill="#1420d0"/>
<rect x="166.0" y="274.0" width="4.0" height="4.0" fill="#1420d0"/>
<rect x="178.0" y="262.0" width="3.0" height="3.0" fill="#1420d0"/>
<rect x="169.7" y="280.6" width="8.3" height="11.2" fill="#c010c0"/>
<rect x="166.0" y="281.0" width="1.0" height="10.0" fill="#22d040"/>
<rect x="179.0" y="283.0" width="3.0" height="2.0" fill="#d8d8d8"/>
<rect x="182.0" y="262.0" width="2.0" height="2.0" fill="#eee"/>
<line x1="188.6" y1="213.0" x2="188.6" y2="381.0" stroke="#d8d8d8" stroke-width="0.9"/>
<rect x="189.3" y="253.0" width="15.4" height="40.0" fill="#000"/>
<rect x="189.6" y="252.5" width="14.6" height="9.0" fill="none" stroke="#d8d8d8" stroke-width="0.6"/>
<rect x="190.5" y="253.5" width="6.0" height="4.0" fill="#0a10a0"/>
<rect x="197.0" y="257.0" width="6.0" height="2.5" fill="#b05020" opacity="0.85"/>
<rect x="191.0" y="258.0" width="5.0" height="2.0" fill="#209020"/>
<rect x="196.0" y="253.7" width="6.0" height="1.2" fill="#30b030" opacity="0.8"/>
<rect x="189.6" y="261.5" width="14.6" height="9.0" fill="none" stroke="#d8d8d8" stroke-width="0.6"/>
<rect x="190.5" y="262.5" width="6.0" height="4.0" fill="#0a10a0"/>
<rect x="197.0" y="266.0" width="6.0" height="2.5" fill="#b05020" opacity="0.85"/>
<rect x="191.0" y="267.0" width="5.0" height="2.0" fill="#209020"/>
<rect x="196.0" y="262.7" width="6.0" height="1.2" fill="#30b030" opacity="0.8"/>
<rect x="189.6" y="270.5" width="14.6" height="9.0" fill="none" stroke="#d8d8d8" stroke-width="0.6"/>
<rect x="190.5" y="271.5" width="6.0" height="4.0" fill="#0a10a0"/>
<rect x="197.0" y="275.0" width="6.0" height="2.5" fill="#b05020" opacity="0.85"/>
<rect x="191.0" y="276.0" width="5.0" height="2.0" fill="#209020"/>
<rect x="196.0" y="271.7" width="6.0" height="1.2" fill="#30b030" opacity="0.8"/>
<rect x="189.6" y="279.5" width="14.6" height="13.0" fill="none" stroke="#d8d8d8" stroke-width="0.6"/>
<rect x="190.5" y="281.0" width="5.5" height="8.0" fill="#206020"/>
<rect x="197.0" y="281.0" width="6.0" height="8.0" fill="#206020"/>
<rect x="191.0" y="283.0" width="3.0" height="4.0" fill="#d0d040"/>
<rect x="198.0" y="284.0" width="3.0" height="4.0" fill="#e04040"/>
<rect x="189.8" y="293.5" width="14.5" height="12.0" fill="#10a0a0" opacity="0.7"/>
<rect x="190.0" y="295.0" width="12.0" height="2.0" fill="#22d040"/>
<rect x="190.0" y="299.0" width="10.0" height="2.0" fill="#00ffff" opacity="0.6"/>
<rect x="124.0" y="292.0" width="12.0" height="8.6" fill="none" stroke="#9c8a5a" stroke-width="0.7"/>
<rect x="125.5" y="295.5" width="8.0" height="1.2" fill="#22d040"/>
<rect x="128.0" y="293.5" width="4.0" height="1.2" fill="#d02020"/>
<rect x="123.5" y="293.0" width="2.2" height="2.0" fill="#e0a040"/>
<rect x="124.0" y="304.8" width="12.0" height="6.6" fill="none" stroke="#9c8a5a" stroke-width="0.7"/>
<line x1="143.8" y1="294.0" x2="143.8" y2="313.8" stroke="#22d040" stroke-width="0.9"/>
<rect x="144.4" y="294.0" width="33.0" height="21.0" fill="none" stroke="#d8d8d8" stroke-width="0.9"/>
<rect x="156.4" y="303.0" width="27.6" height="17.0" fill="none" stroke="#d8d8d8" stroke-width="0.8"/>
<line x1="156.4" y1="309.8" x2="184.0" y2="309.8" stroke="#d8d8d8" stroke-width="0.7"/>
<line x1="164.6" y1="303.0" x2="164.6" y2="320.0" stroke="#d8d8d8" stroke-width="0.6"/>
<line x1="170.8" y1="303.0" x2="170.8" y2="310.0" stroke="#d8d8d8" stroke-width="0.6"/>
<line x1="177.0" y1="303.0" x2="177.0" y2="320.0" stroke="#d8d8d8" stroke-width="0.6"/>
<rect x="165.0" y="303.6" width="5.5" height="6.0" fill="#c010c0"/>
<rect x="171.2" y="303.6" width="5.5" height="6.0" fill="#c010c0"/>
<rect x="157.0" y="310.5" width="7.0" height="3.0" fill="#0a18c8"/>
<rect x="165.0" y="313.0" width="18.0" height="6.0" fill="#103010"/>
<rect x="156.5" y="311.0" width="5.0" height="4.0" fill="#1a1aa0"/>
<rect x="150.0" y="301.0" width="2.0" height="2.0" fill="#ddd"/>
<rect x="168.0" y="296.0" width="2.0" height="1.4" fill="#ddd"/>
<line x1="117.4" y1="312.6" x2="138.4" y2="312.6" stroke="#d8d8d8" stroke-width="0.9"/>
<line x1="138.4" y1="312.6" x2="138.4" y2="320.0" stroke="#d8d8d8" stroke-width="0.8"/>
<rect x="103.6" y="312.6" width="13.2" height="13.2" fill="none" stroke="#d8d8d8" stroke-width="0.7"/>
<rect x="104.5" y="314.0" width="9.0" height="1.4" fill="#10d0a0"/>
<rect x="104.5" y="318.5" width="9.0" height="1.6" fill="#10d0a0"/>
<rect x="104.5" y="322.0" width="10.0" height="2.0" fill="#10b0b0" opacity="0.8"/>
<line x1="33.5" y1="326.0" x2="119.6" y2="326.0" stroke="#d8d8d8" stroke-width="0.9"/>
<rect x="34.4" y="326.2" width="85.0" height="6.9" fill="none" stroke="#d8d8d8" stroke-width="0.8"/>
<line x1="42.5" y1="326.2" x2="42.5" y2="333.1" stroke="#d8d8d8" stroke-width="0.6"/>
<line x1="51.3" y1="326.2" x2="51.3" y2="333.1" stroke="#d8d8d8" stroke-width="0.6"/>
<line x1="58.1" y1="326.2" x2="58.1" y2="333.1" stroke="#d8d8d8" stroke-width="0.6"/>
<line x1="66.9" y1="326.2" x2="66.9" y2="333.1" stroke="#d8d8d8" stroke-width="0.6"/>
<line x1="80.0" y1="326.2" x2="80.0" y2="333.1" stroke="#d8d8d8" stroke-width="0.6"/>
<line x1="91.3" y1="326.2" x2="91.3" y2="333.1" stroke="#d8d8d8" stroke-width="0.6"/>
<line x1="98.1" y1="326.2" x2="98.1" y2="333.1" stroke="#d8d8d8" stroke-width="0.6"/>
<line x1="105.0" y1="326.2" x2="105.0" y2="333.1" stroke="#d8d8d8" stroke-width="0.6"/>
<line x1="117.5" y1="326.2" x2="117.5" y2="333.1" stroke="#d8d8d8" stroke-width="0.6"/>
<rect x="70.0" y="327.0" width="7.5" height="5.4" fill="#c010c0"/>
<rect x="45.0" y="327.5" width="4.0" height="3.0" fill="#1010a0"/>
<rect x="83.0" y="327.5" width="3.0" height="3.0" fill="#1010a0"/>
<rect x="86.0" y="329.5" width="5.0" height="2.5" fill="#20a0a0" opacity="0.8"/>
<line x1="105.0" y1="330.0" x2="118.0" y2="333.0" stroke="#50e0e0" stroke-width="0.7"/>
<rect x="34.4" y="333.1" width="23.1" height="20.0" fill="none" stroke="#d8d8d8" stroke-width="0.8"/>
<line x1="42.5" y1="333.1" x2="42.5" y2="353.0" stroke="#d8d8d8" stroke-width="0.7"/>
<line x1="51.0" y1="333.1" x2="51.0" y2="353.0" stroke="#d8d8d8" stroke-width="0.7"/>
<line x1="34.4" y1="340.5" x2="57.5" y2="340.5" stroke="#d8d8d8" stroke-width="0.6"/>
<rect x="43.3" y="334.0" width="7.0" height="6.0" fill="#0a0a60"/>
<rect x="52.0" y="334.0" width="5.0" height="6.0" fill="#0a10b0"/>
<rect x="43.3" y="341.5" width="7.0" height="11.0" fill="#080850"/>
<rect x="52.0" y="341.5" width="5.0" height="11.0" fill="#0a14c0"/>
<rect x="45.0" y="345.0" width="2.0" height="3.0" fill="#2040ff"/>
<rect x="38.0" y="344.0" width="1.5" height="1.5" fill="#ddd"/>
<rect x="43.8" y="354.4" width="13.8" height="18.1" fill="#0a0a90" stroke="#d8d8d8" stroke-width="0.9"/>
<rect x="46.0" y="357.0" width="9.0" height="4.0" fill="#0818d0"/>
<rect x="46.0" y="363.0" width="9.0" height="5.0" fill="#0818d0"/>
<rect x="48.0" y="363.5" width="2.0" height="1.6" fill="#eee"/>
<line x1="33.8" y1="361.2" x2="41.9" y2="361.2" stroke="#e0e040" stroke-width="1.0"/>
<line x1="59.4" y1="333.8" x2="59.4" y2="372.5" stroke="#d8d8d8" stroke-width="0.9"/>
<line x1="59.4" y1="334.8" x2="120.0" y2="334.8" stroke="#d8d8d8" stroke-width="0.9"/>
<line x1="63.8" y1="338.8" x2="120.0" y2="338.8" stroke="#d8d8d8" stroke-width="0.9"/>
<line x1="63.8" y1="338.8" x2="63.8" y2="372.5" stroke="#d8d8d8" stroke-width="0.9"/>
<rect x="65.0" y="341.0" width="1.4" height="2.0" fill="#2040ff"/>
<rect x="65.0" y="345.0" width="1.4" height="2.0" fill="#2040ff"/>
<rect x="65.0" y="349.0" width="1.4" height="2.0" fill="#2040ff"/>
<rect x="65.0" y="353.0" width="1.4" height="2.0" fill="#2040ff"/>
<rect x="65.0" y="357.0" width="1.4" height="2.0" fill="#2040ff"/>
<rect x="65.0" y="361.0" width="1.4" height="2.0" fill="#2040ff"/>
<rect x="65.0" y="365.0" width="1.4" height="2.0" fill="#2040ff"/>
<rect x="65.0" y="369.0" width="1.4" height="2.0" fill="#2040ff"/>
<line x1="64.4" y1="363.0" x2="64.4" y2="390.4" stroke="#d8d8d8" stroke-width="0.9"/>
<rect x="64.4" y="363.0" width="6.2" height="11.4" fill="none" stroke="#1c9a2a" stroke-width="0.9"/>
<rect x="66.3" y="367.5" width="2.4" height="1.6" fill="#f04040"/>
<line x1="66.2" y1="345.0" x2="83.8" y2="345.0" stroke="#d8d8d8" stroke-width="0.7"/>
<rect x="66.2" y="339.4" width="17.5" height="34.3" fill="none" stroke="#d8d8d8" stroke-width="0.7"/>
<rect x="79.6" y="350.0" width="4.0" height="6.0" fill="#30b0b0" opacity="0.85"/>
<rect x="70.0" y="342.0" width="2.0" height="1.4" fill="#ddd"/>
<line x1="84.4" y1="338.8" x2="84.4" y2="373.8" stroke="#d8d8d8" stroke-width="0.9"/>
<rect x="88.8" y="340.0" width="13.8" height="33.8" fill="#000"/>
<rect x="89.5" y="343.8" width="5.5" height="5.0" fill="#0a18c8"/>
<rect x="96.0" y="343.8" width="5.5" height="5.0" fill="#0a18c8"/>
<rect x="89.5" y="353.8" width="5.5" height="5.0" fill="#0a18c8"/>
<rect x="96.0" y="353.8" width="5.5" height="5.0" fill="#0a18c8"/>
<rect x="89.5" y="361.2" width="5.5" height="5.0" fill="#0a18c8"/>
<rect x="96.0" y="361.2" width="5.5" height="5.0" fill="#0a18c8"/>
<rect x="89.5" y="367.5" width="5.5" height="5.0" fill="#0a18c8"/>
<rect x="96.0" y="367.5" width="5.5" height="5.0" fill="#0a18c8"/>
<line x1="103.1" y1="338.8" x2="103.1" y2="373.8" stroke="#d8d8d8" stroke-width="0.9"/>
<rect x="97.5" y="353.0" width="27.5" height="4.5" fill="none" stroke="#d8d8d8" stroke-width="0.8"/>
<rect x="103.8" y="357.5" width="20.0" height="15.0" fill="#0a0a90"/>
<circle cx="117.5" cy="364.4" r="4.8" stroke="#1838ff" stroke-width="0.9" fill="none"/>
<circle cx="117.5" cy="364.4" r="2.4" stroke="#1838ff" stroke-width="0.6" fill="none"/>
<rect x="116.5" y="363.8" width="2.0" height="1.3" fill="#ddd"/>
<rect x="104.5" y="358.5" width="6.0" height="12.0" fill="#0a18c0"/>
<line x1="123.0" y1="320.0" x2="123.0" y2="374.0" stroke="#c0e080" stroke-width="0.9"/>
<line x1="162.4" y1="320.0" x2="162.4" y2="372.0" stroke="#d8d8d8" stroke-width="0.8"/>
<rect x="163.0" y="325.8" width="2.4" height="7.2" fill="#d02020"/>
<rect x="163.0" y="333.5" width="2.0" height="1.6" fill="#eee"/>
<rect x="166.0" y="339.0" width="5.0" height="8.0" fill="#e0c040" opacity="0.9"/>
<rect x="167.0" y="341.0" width="3.0" height="4.0" fill="#e04040"/>
<rect x="165.0" y="350.0" width="4.0" height="2.0" fill="#e08020"/>
<rect x="170.0" y="352.0" width="3.0" height="2.0" fill="#40c040"/>
<rect x="176.8" y="324.6" width="6.0" height="34.0" fill="#0a300a"/>
<rect x="165.0" y="357.0" width="6.0" height="6.0" fill="none" stroke="#d8d8d8" stroke-width="0.8"/>
<rect x="174.0" y="357.0" width="4.0" height="4.0" fill="#e0c040"/>
<line x1="184.6" y1="292.0" x2="184.6" y2="372.0" stroke="#d8d8d8" stroke-width="0.9"/>
<rect x="189.6" y="306.0" width="14.6" height="54.0" fill="#000"/>
<rect x="198.1" y="309.9" width="1.5" height="0.8" fill="#c03020"/>
<rect x="201.8" y="317.3" width="1.0" height="1.2" fill="#e04030"/>
<rect x="190.9" y="328.6" width="1.8" height="0.7" fill="#f0a030"/>
<rect x="197.5" y="336.6" width="2.0" height="1.5" fill="#e04030"/>
<rect x="201.6" y="308.5" width="2.1" height="1.0" fill="#f0a030"/>
<rect x="196.9" y="336.2" width="1.1" height="1.0" fill="#c03020"/>
<rect x="196.5" y="340.0" width="2.6" height="0.8" fill="#e0d040"/>
<rect x="197.2" y="338.6" width="1.0" height="1.3" fill="#40ff60"/>
<rect x="193.5" y="337.0" width="2.3" height="1.0" fill="#40ff60"/>
<rect x="192.1" y="347.4" width="1.6" height="0.8" fill="#e04030"/>
<rect x="200.4" y="344.6" width="2.1" height="1.1" fill="#e0d040"/>
<rect x="196.0" y="314.8" width="2.1" height="0.7" fill="#e0d040"/>
<rect x="190.3" y="341.4" width="1.1" height="1.1" fill="#f0a030"/>
<rect x="199.8" y="323.9" width="2.0" height="1.4" fill="#e0d040"/>
<rect x="195.3" y="350.4" width="2.1" height="1.2" fill="#e0d040"/>
<rect x="190.5" y="343.0" width="1.8" height="1.3" fill="#a0e040"/>
<rect x="195.2" y="343.8" width="2.1" height="1.3" fill="#a0e040"/>
<rect x="194.3" y="338.0" width="1.6" height="1.5" fill="#40ff60"/>
<rect x="191.5" y="319.0" width="0.9" height="1.4" fill="#40ff60"/>
<rect x="191.7" y="327.2" width="2.8" height="1.1" fill="#e0d040"/>
<rect x="199.7" y="320.6" width="2.7" height="1.4" fill="#40ff60"/>
<rect x="194.1" y="318.2" width="3.0" height="1.3" fill="#e04030"/>
<rect x="192.8" y="331.8" width="1.2" height="0.8" fill="#c03020"/>
<rect x="191.7" y="334.4" width="1.2" height="0.9" fill="#c03020"/>
<rect x="198.2" y="333.0" width="2.0" height="1.6" fill="#c03020"/>
<rect x="195.3" y="351.9" width="2.2" height="1.3" fill="#f0a030"/>
<rect x="194.5" y="326.8" width="2.3" height="1.2" fill="#40ff60"/>
<rect x="190.6" y="317.1" width="2.2" height="0.7" fill="#30c030"/>
<rect x="191.1" y="335.9" width="1.0" height="1.2" fill="#c03020"/>
<rect x="190.1" y="352.4" width="1.0" height="1.0" fill="#c03020"/>
<rect x="201.8" y="337.8" width="1.6" height="1.2" fill="#40ff60"/>
<rect x="202.8" y="330.5" width="1.1" height="1.4" fill="#40ff60"/>
<rect x="199.3" y="345.4" width="1.5" height="0.7" fill="#40ff60"/>
<rect x="190.1" y="356.6" width="2.6" height="0.8" fill="#c03020"/>
<rect x="201.3" y="346.0" width="1.6" height="1.3" fill="#e0d040"/>
<rect x="197.6" y="319.7" width="3.0" height="1.5" fill="#e0d040"/>
<rect x="192.3" y="334.7" width="2.8" height="1.0" fill="#c03020"/>
<rect x="200.1" y="358.4" width="1.5" height="0.8" fill="#f0a030"/>
<rect x="195.0" y="348.7" width="1.2" height="0.8" fill="#30c030"/>
<rect x="190.2" y="307.5" width="1.9" height="1.0" fill="#e0d040"/>
<rect x="197.3" y="324.3" width="1.8" height="0.8" fill="#f0a030"/>
<rect x="200.6" y="325.1" width="2.9" height="1.6" fill="#30c030"/>
<rect x="194.2" y="331.5" width="1.0" height="1.1" fill="#c03020"/>
<rect x="197.3" y="348.3" width="2.6" height="1.1" fill="#e04030"/>
<rect x="194.3" y="343.9" width="2.6" height="0.7" fill="#30c030"/>
<rect x="199.5" y="323.7" width="1.9" height="0.8" fill="#f0a030"/>
<rect x="195.0" y="345.2" width="2.9" height="1.3" fill="#e04030"/>
<rect x="191.3" y="314.0" width="2.4" height="0.8" fill="#40ff60"/>
<rect x="199.4" y="358.2" width="2.6" height="0.7" fill="#a0e040"/>
<rect x="196.0" y="307.1" width="2.9" height="0.8" fill="#f0a030"/>
<rect x="195.7" y="355.2" width="2.9" height="1.2" fill="#40ff60"/>
<rect x="199.6" y="307.5" width="3.0" height="0.8" fill="#30c030"/>
<rect x="197.3" y="319.8" width="1.4" height="0.8" fill="#40ff60"/>
<rect x="198.4" y="353.9" width="2.6" height="0.7" fill="#a0e040"/>
<rect x="194.9" y="354.2" width="2.1" height="1.5" fill="#c03020"/>
<rect x="196.5" y="352.5" width="1.1" height="0.8" fill="#f0a030"/>
<rect x="200.2" y="315.2" width="1.2" height="0.6" fill="#40ff60"/>
<rect x="190.5" y="342.4" width="2.2" height="0.7" fill="#c03020"/>
<rect x="191.1" y="335.5" width="2.0" height="1.4" fill="#30c030"/>
<rect x="191.1" y="330.1" width="1.2" height="0.6" fill="#e04030"/>
<rect x="195.0" y="338.2" width="2.5" height="1.5" fill="#c03020"/>
<rect x="193.1" y="333.0" width="2.1" height="0.8" fill="#f0a030"/>
<rect x="198.4" y="352.0" width="1.9" height="1.5" fill="#e0d040"/>
<rect x="192.1" y="329.5" width="2.8" height="1.5" fill="#40ff60"/>
<rect x="190.8" y="318.7" width="1.1" height="1.0" fill="#e04030"/>
<rect x="191.4" y="347.3" width="1.3" height="0.9" fill="#a0e040"/>
<rect x="192.8" y="313.3" width="2.2" height="1.0" fill="#40ff60"/>
<rect x="194.9" y="331.6" width="1.3" height="1.6" fill="#a0e040"/>
<rect x="194.8" y="333.5" width="2.6" height="0.8" fill="#e0d040"/>
<rect x="190.9" y="325.4" width="1.7" height="1.0" fill="#e0d040"/>
<rect x="190.0" y="323.6" width="2.0" height="1.0" fill="#c03020"/>
<rect x="191.2" y="354.2" width="1.4" height="1.6" fill="#30c030"/>
<rect x="192.8" y="308.1" width="2.9" height="0.7" fill="#f0a030"/>
<rect x="200.5" y="350.7" width="1.2" height="1.4" fill="#a0e040"/>
<rect x="191.5" y="354.8" width="2.6" height="0.9" fill="#c03020"/>
<rect x="193.2" y="348.4" width="1.9" height="0.9" fill="#30c030"/>
<rect x="201.5" y="339.8" width="1.7" height="0.7" fill="#f0a030"/>
<rect x="192.7" y="320.0" width="1.4" height="1.2" fill="#e04030"/>
<rect x="196.7" y="355.2" width="1.8" height="0.9" fill="#e0d040"/>
<rect x="198.3" y="356.1" width="2.2" height="0.6" fill="#30c030"/>
<rect x="201.8" y="339.5" width="1.4" height="0.8" fill="#c03020"/>
<rect x="195.7" y="315.4" width="2.5" height="0.9" fill="#e0d040"/>
<rect x="190.2" y="307.0" width="2.6" height="1.6" fill="#c03020"/>
<rect x="195.6" y="355.7" width="2.0" height="0.8" fill="#e04030"/>
<rect x="197.6" y="334.8" width="2.2" height="1.3" fill="#40ff60"/>
<rect x="192.2" y="318.2" width="2.9" height="0.9" fill="#30c030"/>
<rect x="197.2" y="327.3" width="2.6" height="1.3" fill="#e0d040"/>
<rect x="190.0" y="338.9" width="3.0" height="1.4" fill="#e0d040"/>
<rect x="198.1" y="326.3" width="1.7" height="0.7" fill="#c03020"/>
<rect x="192.7" y="321.6" width="2.3" height="0.9" fill="#40ff60"/>
<rect x="189.8" y="325.3" width="1.2" height="0.9" fill="#e0d040"/>
<rect x="192.6" y="357.0" width="2.9" height="1.1" fill="#e0d040"/>
<rect x="194.1" y="310.5" width="1.3" height="0.8" fill="#e0d040"/>
<rect x="196.0" y="306.3" width="1.9" height="0.8" fill="#e0d040"/>
<rect x="196.6" y="327.0" width="2.6" height="0.7" fill="#e0d040"/>
<rect x="196.0" y="308.0" width="2.4" height="17.8" fill="#e0d070"/>
<rect x="200.8" y="307.0" width="2.6" height="18.0" fill="#c03020" opacity="0.8"/>
<rect x="190.0" y="330.0" width="13.5" height="1.4" fill="#d04030" opacity="0.9"/>
<rect x="191.0" y="332.5" width="12.0" height="1.2" fill="#30b030" opacity="0.9"/>
<rect x="190.0" y="335.8" width="13.5" height="1.4" fill="#d04030" opacity="0.9"/>
<rect x="191.0" y="338.3" width="12.0" height="1.2" fill="#30b030" opacity="0.9"/>
<rect x="190.0" y="341.6" width="13.5" height="1.4" fill="#d04030" opacity="0.9"/>
<rect x="191.0" y="344.1" width="12.0" height="1.2" fill="#30b030" opacity="0.9"/>
<rect x="190.0" y="347.4" width="13.5" height="1.4" fill="#d04030" opacity="0.9"/>
<rect x="191.0" y="349.9" width="12.0" height="1.2" fill="#30b030" opacity="0.9"/>
<rect x="190.0" y="353.2" width="13.5" height="1.4" fill="#d04030" opacity="0.9"/>
<rect x="191.0" y="355.7" width="12.0" height="1.2" fill="#30b030" opacity="0.9"/>
<rect x="189.5" y="352.0" width="14.0" height="7.0" fill="#1a1aa0" opacity="0.6"/>
<rect x="179.6" y="342.4" width="1.2" height="0.8" fill="#e0d040"/>
<rect x="181.0" y="337.6" width="1.7" height="1.2" fill="#a0e040"/>
<rect x="177.6" y="345.2" width="1.8" height="1.0" fill="#e0d040"/>
<rect x="181.8" y="345.3" width="0.9" height="1.3" fill="#e0d040"/>
<rect x="179.0" y="351.3" width="2.1" height="1.2" fill="#e04030"/>
<rect x="180.9" y="347.2" width="2.0" height="1.1" fill="#40ff60"/>
<rect x="180.1" y="356.6" width="0.9" height="0.6" fill="#f0a030"/>
<rect x="179.4" y="345.4" width="2.0" height="1.0" fill="#40ff60"/>
<rect x="180.7" y="349.7" width="1.5" height="0.6" fill="#30c030"/>
<rect x="180.2" y="333.3" width="1.7" height="0.7" fill="#30c030"/>
<rect x="180.1" y="332.6" width="2.0" height="0.8" fill="#ffffff"/>
<rect x="178.8" y="347.4" width="1.5" height="0.9" fill="#e04030"/>
<rect x="176.4" y="329.8" width="1.7" height="1.1" fill="#c03020"/>
<rect x="179.5" y="329.3" width="1.7" height="1.2" fill="#ffffff"/>
<rect x="180.4" y="347.7" width="0.9" height="0.8" fill="#ffffff"/>
<rect x="178.9" y="340.2" width="1.2" height="1.0" fill="#30c030"/>
<rect x="177.6" y="327.8" width="2.2" height="1.0" fill="#ffffff"/>
<rect x="181.4" y="356.6" width="0.8" height="1.0" fill="#ffffff"/>
<rect x="180.8" y="355.4" width="2.2" height="0.9" fill="#30c030"/>
<rect x="179.0" y="356.3" width="1.6" height="0.7" fill="#e0d040"/>
<rect x="177.6" y="328.7" width="1.6" height="1.1" fill="#a0e040"/>
<rect x="179.1" y="325.8" width="1.1" height="1.3" fill="#e04030"/>
<rect x="178.1" y="348.6" width="2.1" height="1.1" fill="#f0a030"/>
<rect x="181.1" y="325.1" width="1.3" height="0.9" fill="#a0e040"/>
<rect x="181.0" y="348.5" width="2.0" height="0.7" fill="#c03020"/>
<rect x="178.4" y="353.7" width="1.2" height="0.7" fill="#30c030"/>
<rect x="177.7" y="326.6" width="1.3" height="0.9" fill="#30c030"/>
<rect x="180.1" y="329.8" width="0.9" height="1.1" fill="#c03020"/>
<rect x="180.6" y="350.7" width="1.4" height="0.9" fill="#f0a030"/>
<rect x="179.4" y="354.5" width="2.0" height="1.2" fill="#40ff60"/>
<rect x="180.1" y="339.9" width="1.8" height="0.6" fill="#e0d040"/>
<rect x="176.3" y="355.4" width="1.7" height="0.8" fill="#e0d040"/>
<rect x="177.8" y="333.4" width="1.0" height="0.9" fill="#c03020"/>
<rect x="178.9" y="346.9" width="1.4" height="0.8" fill="#30c030"/>
<rect x="177.3" y="354.8" width="1.0" height="0.7" fill="#ffffff"/>
<rect x="177.9" y="349.8" width="1.6" height="1.0" fill="#f0a030"/>
<rect x="176.6" y="336.2" width="1.0" height="0.8" fill="#30c030"/>
<rect x="181.0" y="331.6" width="1.2" height="0.9" fill="#e04030"/>
<rect x="178.3" y="342.1" width="1.8" height="0.9" fill="#f0a030"/>
<rect x="179.1" y="343.6" width="1.2" height="1.2" fill="#a0e040"/>
<rect x="180.0" y="353.1" width="1.0" height="1.0" fill="#40ff60"/>
<rect x="178.5" y="345.8" width="0.9" height="1.3" fill="#f0a030"/>
<rect x="180.6" y="325.7" width="2.1" height="1.3" fill="#e04030"/>
<rect x="180.8" y="356.4" width="1.4" height="1.2" fill="#ffffff"/>
<rect x="182.1" y="352.0" width="0.8" height="0.9" fill="#ffffff"/>
<rect x="166.6" y="314.8" width="2.5" height="0.8" fill="#c03020"/>
<rect x="178.6" y="317.7" width="2.5" height="0.7" fill="#f0a030"/>
<rect x="174.2" y="314.2" width="2.1" height="1.1" fill="#f0a030"/>
<rect x="165.5" y="317.5" width="1.0" height="1.2" fill="#30c030"/>
<rect x="172.4" y="317.7" width="1.9" height="1.1" fill="#e04030"/>
<rect x="175.5" y="315.9" width="0.9" height="1.1" fill="#30c030"/>
<rect x="174.0" y="319.4" width="2.1" height="0.6" fill="#e0d040"/>
<rect x="179.6" y="316.3" width="2.4" height="1.2" fill="#30c030"/>
<rect x="172.0" y="317.5" width="1.7" height="0.6" fill="#e04030"/>
<rect x="177.2" y="316.1" width="0.8" height="1.1" fill="#e0d040"/>
<rect x="171.5" y="316.5" width="1.2" height="1.0" fill="#a0e040"/>
<rect x="177.0" y="315.0" width="1.4" height="1.0" fill="#f0a030"/>
<rect x="166.0" y="316.3" width="1.3" height="1.4" fill="#30c030"/>
<rect x="168.9" y="315.0" width="1.3" height="1.4" fill="#f0a030"/>
<line x1="189.3" y1="360.0" x2="204.7" y2="360.0" stroke="#d8d8d8" stroke-width="0.8"/>
<rect x="178.0" y="361.6" width="23.0" height="9.0" fill="none" stroke="#d8d8d8" stroke-width="0.8"/>
<rect x="184.0" y="363.0" width="2.0" height="1.4" fill="#ddd"/>
<rect x="64.0" y="372.5" width="8.0" height="8.0" fill="none" stroke="#1c9a2a" stroke-width="0.8"/>
<rect x="72.0" y="372.6" width="23.0" height="7.6" fill="#000" stroke="#22d040" stroke-width="1.0"/>
<path d="M75.75,374.5 L79.75,378.5 M79.75,374.5 L75.75,378.5" stroke="#5070ff" stroke-width="0.9" fill="none"/>
<path d="M87.25,374.5 L91.25,378.5 M91.25,374.5 L87.25,378.5" stroke="#5070ff" stroke-width="0.9" fill="none"/>
<rect x="96.0" y="372.6" width="21.0" height="7.6" fill="#000" stroke="#22d040" stroke-width="1.0"/>
<path d="M99.25,374.5 L103.25,378.5 M103.25,374.5 L99.25,378.5" stroke="#5070ff" stroke-width="0.9" fill="none"/>
<path d="M109.75,374.5 L113.75,378.5 M113.75,374.5 L109.75,378.5" stroke="#5070ff" stroke-width="0.9" fill="none"/>
<rect x="118.0" y="372.6" width="11.0" height="7.6" fill="#000" stroke="#22d040" stroke-width="1.0"/>
<path d="M121.5,374.5 L125.5,378.5 M125.5,374.5 L121.5,378.5" stroke="#5070ff" stroke-width="0.9" fill="none"/>
<rect x="129.8" y="372.6" width="29.4" height="7.6" fill="#000" stroke="#22d040" stroke-width="1.0"/>
<circle cx="134.7" cy="376.4" r="3.2" stroke="#10b0b0" stroke-width="0.9" fill="none"/>
<circle cx="134.7" cy="376.4" r="1.6" stroke="#10b0b0" stroke-width="0.6" fill="none"/>
<circle cx="144.5" cy="376.4" r="3.2" stroke="#10b0b0" stroke-width="0.9" fill="none"/>
<circle cx="144.5" cy="376.4" r="1.6" stroke="#10b0b0" stroke-width="0.6" fill="none"/>
<circle cx="154.3" cy="376.4" r="3.2" stroke="#10b0b0" stroke-width="0.9" fill="none"/>
<circle cx="154.3" cy="376.4" r="1.6" stroke="#10b0b0" stroke-width="0.6" fill="none"/>
<rect x="163.4" y="372.6" width="21.0" height="7.6" fill="#000" stroke="#22d040" stroke-width="1.0"/>
<circle cx="168.7" cy="376.4" r="3.2" stroke="#10b0b0" stroke-width="0.9" fill="none"/>
<circle cx="168.7" cy="376.4" r="1.6" stroke="#10b0b0" stroke-width="0.6" fill="none"/>
<circle cx="179.2" cy="376.4" r="3.2" stroke="#10b0b0" stroke-width="0.9" fill="none"/>
<circle cx="179.2" cy="376.4" r="1.6" stroke="#10b0b0" stroke-width="0.6" fill="none"/>
<rect x="71.5" y="372.6" width="1.4" height="7.6" fill="#22d040"/>
<rect x="78.5" y="372.6" width="1.4" height="7.6" fill="#22d040"/>
<rect x="83.5" y="372.6" width="1.4" height="7.6" fill="#22d040"/>
<rect x="95.5" y="372.6" width="1.4" height="7.6" fill="#22d040"/>
<rect x="102.5" y="372.6" width="1.4" height="7.6" fill="#22d040"/>
<rect x="109.5" y="372.6" width="1.4" height="7.6" fill="#22d040"/>
<rect x="117.5" y="372.6" width="1.4" height="7.6" fill="#22d040"/>
<rect x="124.5" y="372.6" width="1.4" height="7.6" fill="#22d040"/>
<rect x="159.4" y="374.0" width="4.0" height="2.0" fill="#5010a0"/>
<line x1="65.0" y1="383.0" x2="185.8" y2="383.0" stroke="#d8d8d8" stroke-width="0.9"/>
<path d="M73,383.8 C88,389.5 102,392.8 118,392.8 C134,392.8 152,389.5 167.3,383.8 L168.5,388 C152,394 134,397.6 118,397.6 C102,397.6 88,394 73,388 Z" fill="#5a5a5a" stroke="#b8b8b8" stroke-width="0.8"/>
<clipPath id="bandclip2"><path d="M73,383.8 C88,389.5 102,392.8 118,392.8 C134,392.8 152,389.5 167.3,383.8 L168.5,388 C152,394 134,397.6 118,397.6 C102,397.6 88,394 73,388 Z"/></clipPath>
<path d="M73.0,380 L73.0,400 M76.4,380 L76.4,400 M79.8,380 L79.8,400 M83.2,380 L83.2,400 M86.6,380 L86.6,400 M90.0,380 L90.0,400 M93.4,380 L93.4,400 M96.8,380 L96.8,400 M100.2,380 L100.2,400 M103.6,380 L103.6,400 M107.0,380 L107.0,400 M110.4,380 L110.4,400 M113.8,380 L113.8,400 M117.2,380 L117.2,400 M120.6,380 L120.6,400 M124.0,380 L124.0,400 M127.4,380 L127.4,400 M130.8,380 L130.8,400 M134.2,380 L134.2,400 M137.6,380 L137.6,400 M141.0,380 L141.0,400 M144.4,380 L144.4,400 M147.8,380 L147.8,400 M151.2,380 L151.2,400 M154.6,380 L154.6,400 M158.0,380 L158.0,400 M161.4,380 L161.4,400 M164.8,380 L164.8,400 M168.2,380 L168.2,400" stroke="#a8a8a8" stroke-width="1.5" clip-path="url(#bandclip2)"/>
<path d="M97.5,396.8 C105,397.6 112,397.8 120,397.8 C128,397.8 135,397.5 141.8,396.8 L141,402.6 C134,403.6 127,404 120,404 C113,404 106,403.6 98.5,402.6 Z" stroke="#b0d0b0" stroke-width="0.7" fill="#0e5a12"/>
<circle cx="99.5" cy="398.6" r="1.0" stroke="#30ff30" stroke-width="0.5" fill="#40ff40"/>
<circle cx="103.5" cy="400.2" r="1.0" stroke="#30ff30" stroke-width="0.5" fill="#40ff40"/>
<circle cx="107.5" cy="399.0" r="1.0" stroke="#30ff30" stroke-width="0.5" fill="#40ff40"/>
<circle cx="111.0" cy="401.2" r="1.0" stroke="#30ff30" stroke-width="0.5" fill="#40ff40"/>
<circle cx="115.0" cy="400.0" r="1.0" stroke="#30ff30" stroke-width="0.5" fill="#40ff40"/>
<circle cx="119.0" cy="401.6" r="1.0" stroke="#30ff30" stroke-width="0.5" fill="#40ff40"/>
<circle cx="123.0" cy="399.4" r="1.0" stroke="#30ff30" stroke-width="0.5" fill="#40ff40"/>
<circle cx="127.0" cy="401.2" r="1.0" stroke="#30ff30" stroke-width="0.5" fill="#40ff40"/>
<circle cx="131.0" cy="399.8" r="1.0" stroke="#30ff30" stroke-width="0.5" fill="#40ff40"/>
<circle cx="135.0" cy="400.8" r="1.0" stroke="#30ff30" stroke-width="0.5" fill="#40ff40"/>
<circle cx="138.5" cy="398.8" r="1.0" stroke="#30ff30" stroke-width="0.5" fill="#40ff40"/>
<circle cx="72.0" cy="389.3" r="2.6" stroke="#1c9a2a" stroke-width="0.8" fill="none"/>
<circle cx="78.3" cy="392.8" r="2.6" stroke="#1c9a2a" stroke-width="0.8" fill="none"/>
<circle cx="86.0" cy="395.6" r="2.6" stroke="#1c9a2a" stroke-width="0.8" fill="none"/>
<circle cx="148.0" cy="397.0" r="2.6" stroke="#1c9a2a" stroke-width="0.8" fill="none"/>
<circle cx="155.7" cy="394.2" r="2.6" stroke="#1c9a2a" stroke-width="0.8" fill="none"/>
<rect x="167.6" y="385.8" width="7.0" height="4.2" fill="#c010c0"/>
<circle cx="136.8" cy="386.5" r="0.9" stroke="#808060" stroke-width="0.6" fill="none"/>
<circle cx="140.5" cy="386.5" r="0.9" stroke="#808060" stroke-width="0.6" fill="none"/>
<circle cx="144.2" cy="386.5" r="0.9" stroke="#808060" stroke-width="0.6" fill="none"/>
<circle cx="148.0" cy="386.5" r="0.9" stroke="#808060" stroke-width="0.6" fill="none"/>
<circle cx="100.0" cy="386.0" r="0.9" stroke="#808060" stroke-width="0.6" fill="none"/>
<circle cx="103.7" cy="386.0" r="0.9" stroke="#808060" stroke-width="0.6" fill="none"/>
<circle cx="107.4" cy="386.0" r="0.9" stroke="#808060" stroke-width="0.6" fill="none"/>
<circle cx="111.0" cy="386.0" r="0.9" stroke="#808060" stroke-width="0.6" fill="none"/>
<path d="M118,384 L118,392 M116.5,385.5 L119.5,390.5 M119.5,385.5 L116.5,390.5" stroke="#9090a0" stroke-width="0.7" fill="none"/>
<path d="M123,384 L123,392 M121.5,385.5 L124.5,390.5 M124.5,385.5 L121.5,390.5" stroke="#9090a0" stroke-width="0.7" fill="none"/>
<path d="M70,392 C72,395 75,394 76,392 M85,399 C87,402 90,401 91,399 M102,404 C103,407 106,407 107,404 M112,404.3 C113,407.3 116,407.3 117,404.3 M122,404.3 C123,407.3 126,407.3 127,404.3 M132,404 C133,407 136,407 137,404 M158,398 C160,401 163,400 164,398 M174,390 C176,393 179,392 180,390" stroke="#c0c0c0" stroke-width="0.6" fill="none"/><rect x="124.0" y="319.8" width="38.4" height="53.0" fill="#000"/>
<line x1="124.0" y1="320.2" x2="163.7" y2="320.2" stroke="#d8d8d8" stroke-width="0.9"/>
<line x1="124.2" y1="320.2" x2="124.2" y2="372.2" stroke="#d8d8d8" stroke-width="0.9"/>
<rect x="126.0" y="323.5" width="36.4" height="48.7" fill="#0a18c0"/>
<line x1="126.0" y1="324.5" x2="162.4" y2="324.5" stroke="#000060" stroke-width="0.6"/>
<line x1="126.0" y1="327.7" x2="162.4" y2="327.7" stroke="#000060" stroke-width="0.6"/>
<line x1="126.0" y1="330.9" x2="162.4" y2="330.9" stroke="#000060" stroke-width="0.6"/>
<line x1="126.0" y1="334.1" x2="162.4" y2="334.1" stroke="#000060" stroke-width="0.6"/>
<line x1="126.0" y1="337.3" x2="162.4" y2="337.3" stroke="#000060" stroke-width="0.6"/>
<line x1="126.0" y1="340.5" x2="162.4" y2="340.5" stroke="#000060" stroke-width="0.6"/>
<line x1="126.0" y1="343.7" x2="162.4" y2="343.7" stroke="#000060" stroke-width="0.6"/>
<line x1="126.0" y1="346.9" x2="162.4" y2="346.9" stroke="#000060" stroke-width="0.6"/>
<line x1="126.0" y1="350.1" x2="162.4" y2="350.1" stroke="#000060" stroke-width="0.6"/>
<line x1="126.0" y1="353.3" x2="162.4" y2="353.3" stroke="#000060" stroke-width="0.6"/>
<line x1="126.0" y1="356.5" x2="162.4" y2="356.5" stroke="#000060" stroke-width="0.6"/>
<line x1="126.0" y1="359.7" x2="162.4" y2="359.7" stroke="#000060" stroke-width="0.6"/>
<line x1="126.0" y1="362.9" x2="162.4" y2="362.9" stroke="#000060" stroke-width="0.6"/>
<line x1="126.0" y1="366.1" x2="162.4" y2="366.1" stroke="#000060" stroke-width="0.6"/>
<line x1="126.0" y1="369.3" x2="162.4" y2="369.3" stroke="#000060" stroke-width="0.6"/>
<line x1="134.5" y1="323.5" x2="134.5" y2="372.2" stroke="#000040" stroke-width="0.9"/>
<line x1="141.6" y1="323.5" x2="141.6" y2="372.2" stroke="#000040" stroke-width="0.9"/>
<line x1="147.5" y1="323.5" x2="147.5" y2="372.2" stroke="#000040" stroke-width="0.9"/>
<line x1="154.6" y1="323.5" x2="154.6" y2="372.2" stroke="#000040" stroke-width="0.9"/>
<rect x="137.0" y="324.5" width="20.0" height="1.4" fill="#20c0c0" opacity="0.7"/>
<rect x="143.5" y="332.4" width="1.6" height="1.6" fill="#eee"/>
<rect x="143.5" y="352.6" width="1.6" height="1.6" fill="#eee"/>
<rect x="108.8" y="338.8" width="14.3" height="10.0" fill="#0a0a80" stroke="#d8d8d8" stroke-width="0.6"/>
<rect x="110.0" y="340.5" width="11.0" height="6.0" fill="#0a18c0"/></g></svg>
<svg class="a" style="left:380px;top:63px" width="420" height="14" viewBox="380 63 420 14"><path d="M391.2,68.2 L395.4,72.4 M395.4,68.2 L391.2,72.4 M790.8,68.2 L795,72.4 M795,68.2 L790.8,72.4" stroke="#8a8a8a" stroke-width="0.8"/></svg>
<div class="a" style="left:0;top:488.5px;width:800px;height:11.5px;background:#fff"></div>
<div class="a" style="left:674px;top:488.5px;width:126px;height:11.5px;background:#e6e6e6"></div>
<div class="a" style="left:700px;top:489.5px;width:98px;text-align:right;font-size:7.7px;line-height:9px;color:#333;white-space:nowrap">x=236302 y=-50070</div>
<svg class="a" style="left:0;top:488px" width="70" height="12" viewBox="0 488 70 12">
<path d="M1,489.4 L27,489.4 L24.5,498.6 L3.6,498.6 Z" fill="#111"/>
<path d="M29.2,489.6 L56.6,489.6 L54.4,498.4 L31.4,498.4 Z" fill="#b4b4b4" stroke="#333" stroke-width="0.7"/>
<path d="M57.5,489.8 L60.5,489.8 M58,494 L59.5,494" stroke="#ccc" stroke-width="0.5"/>
</svg>
<div class="a" style="left:7px;top:490.6px;font-size:7px;line-height:8px;color:#fff;-webkit-text-stroke:0.2px #fff">模型</div>
<div class="a" style="left:34px;top:490.6px;font-size:7px;line-height:8px;color:#222;-webkit-text-stroke:0.15px #222">布局1</div>
</body></html>
